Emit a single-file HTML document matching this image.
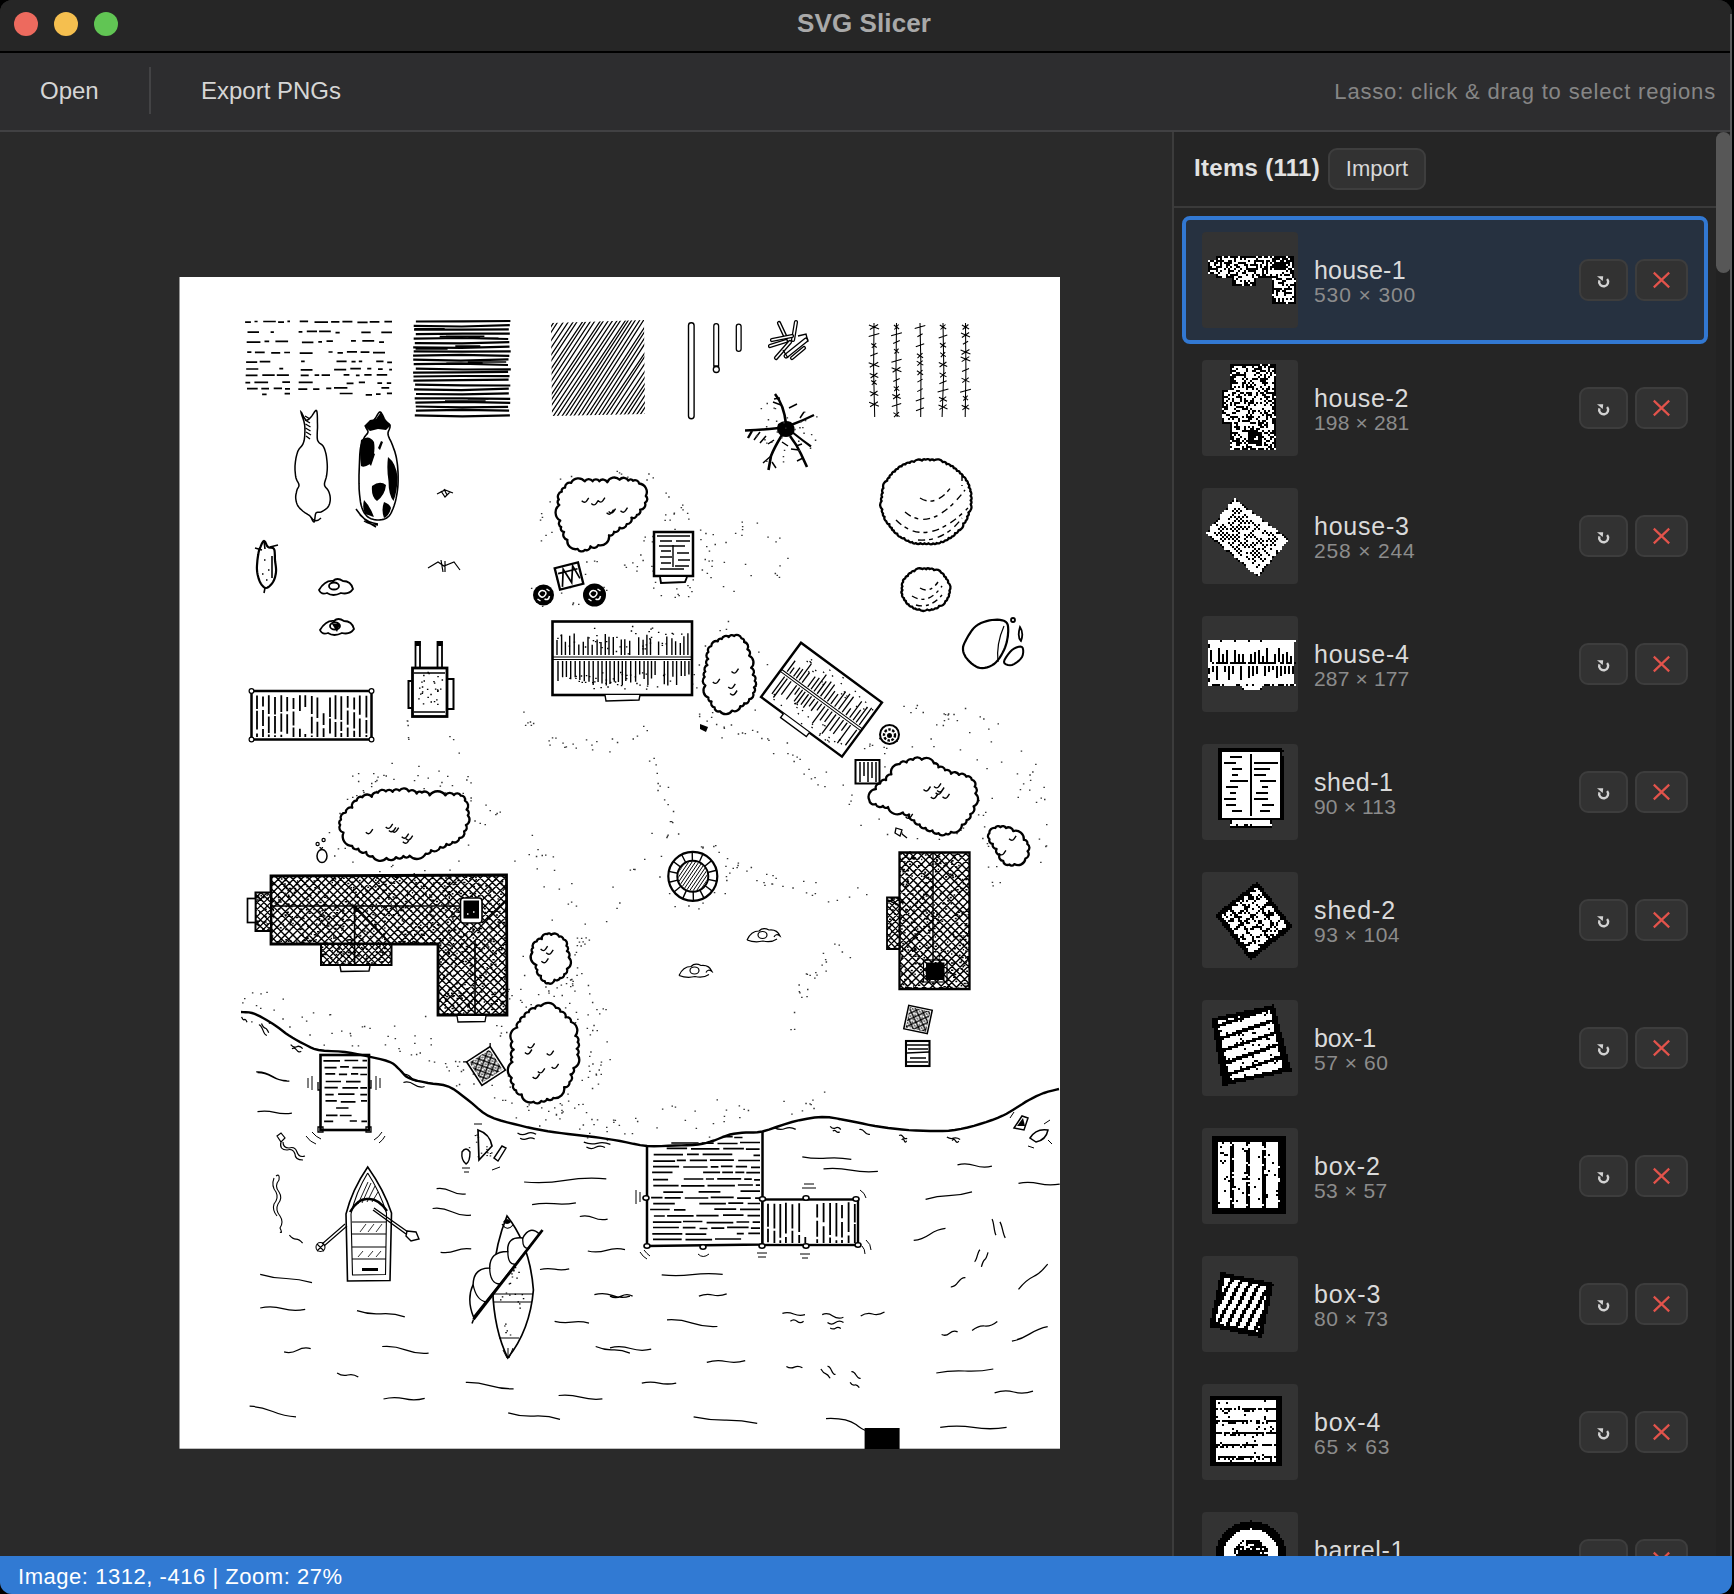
<!DOCTYPE html>
<html lang="en">
<head>
<meta charset="utf-8">
<title>SVG Slicer</title>
<style>
*{box-sizing:border-box;margin:0;padding:0}
html,body{width:1734px;height:1594px;overflow:hidden;background:#000;font-family:"Liberation Sans",sans-serif;}
#win{position:absolute;left:0;top:0;width:1732px;height:1594px;background:#2a2a2a;border-radius:12px 14px 13px 12px;overflow:hidden;}
#titlebar{position:absolute;left:0;top:0;width:100%;height:51px;background:#262626;}
#titlebar .t{position:absolute;left:-4px;right:0;top:7px;text-align:center;font-weight:bold;font-size:26px;line-height:32px;color:#a9a9a9;letter-spacing:0.1px}
.tl{position:absolute;top:12px;width:24px;height:24px;border-radius:50%}
#tbline{position:absolute;left:0;top:51px;width:100%;height:2px;background:#000}
#toolbar{position:absolute;left:0;top:53px;width:100%;height:77px;background:#2d2d2f;}
#toolbar .b{position:absolute;top:23px;font-size:24px;line-height:30px;color:#d6d6d6;white-space:nowrap}
#toolbar .sep{position:absolute;left:149px;top:14px;width:2px;height:47px;background:#434345}
#toolbar .hint{position:absolute;right:16px;top:24px;font-size:22px;line-height:30px;color:#868686;white-space:nowrap;letter-spacing:0.83px}
#tbborder{position:absolute;left:0;top:130px;width:100%;height:2px;background:#414143}
#canvas{position:absolute;left:0;top:132px;width:1172px;height:1424px;background:#2a2a2a;overflow:hidden}
#sideborder{position:absolute;left:1172px;top:132px;width:2px;height:1424px;background:#3c3c3c}
#side{position:absolute;left:1174px;top:132px;width:558px;height:1424px;background:#252525;overflow:hidden}
#side .hd{position:absolute;left:0;top:0;width:542px;height:74px;}
#side .hd .h{position:absolute;left:20px;top:21px;font-weight:bold;font-size:24px;line-height:30px;color:#e2e2e2;white-space:nowrap;letter-spacing:0.3px}
#side .hd .imp{position:absolute;left:154px;top:16px;width:98px;height:42px;border:2px solid #3e3e3e;border-radius:9px;background:#323232;color:#d8d8d8;font-size:22px;line-height:37px;text-align:center;letter-spacing:0px}
#side .hdb{position:absolute;left:0;top:74px;width:542px;height:2px;background:#3a3a3a}
#scroll{position:absolute;left:542px;top:0;width:16px;height:1424px;background:#222222;border-right:2px solid #5a5a5a}
#thumbbar{position:absolute;left:1716px;top:132px;width:15px;height:141px;border-radius:8px;background:#575757}
.it{position:absolute;left:8px;width:526px;height:128px;border:4px solid transparent;border-radius:8px}
.it.sel{border-color:#3278d2;background:#263140}
.it .th{position:absolute;left:16px;top:12px;width:96px;height:96px;background:#333333;border-radius:4px;overflow:hidden}
.it .th svg{position:absolute;left:0;top:0}
.it .nm{position:absolute;left:128px;top:34px;font-size:25px;line-height:32px;color:#dadada;white-space:nowrap}
.it .dm{position:absolute;left:128px;top:62px;font-size:21px;line-height:26px;color:#8c8c8c;white-space:nowrap;letter-spacing:0.16px}
.it .rb,.it .xb{position:absolute;top:39px;height:42px;border:2px solid #3d3d3d;border-radius:9px;background:#323232}
.it .rb{left:393px;width:49px}
.it .xb{left:449px;width:53px}
.it svg.ic{position:absolute;left:0;top:0}
#status{position:absolute;left:0;top:1556px;width:100%;height:38px;background:#317ad3;}
#status span{position:absolute;left:18px;top:5.5px;font-size:22px;line-height:30px;color:#fff;white-space:nowrap;letter-spacing:0.54px}
#wb{position:absolute;left:1730px;top:14px;width:2px;height:1542px;background:#5a5a5a}
#art{position:absolute;left:0;top:0;filter:blur(0.4px)}
</style>
</head>
<body>
<div id="win">
<div id="titlebar">
<div class="tl" style="left:14px;background:#ed6a5e"></div>
<div class="tl" style="left:54px;background:#f5bf4f"></div>
<div class="tl" style="left:94px;background:#61c554"></div>
<div class="t">SVG Slicer</div>
</div>
<div id="tbline"></div>
<div id="toolbar">
<div class="b" style="left:40px">Open</div>
<div class="sep"></div>
<div class="b" style="left:201px">Export PNGs</div>
<div class="hint">Lasso: click &amp; drag to select regions</div>
</div>
<div id="tbborder"></div>
<div id="canvas"></div>
<div id="sideborder"></div>
<div id="side">
<div class="hd"><div class="h">Items (111)</div><div class="imp">Import</div></div><div class="hdb"></div>
<div class="it sel" style="top:84px"><div class="th"><svg width="96" height="96" viewBox="0 0 96 96" shape-rendering="crispEdges"><path d="M20 25h2M26 25h2M36 25h2M54 25h2M60 25h2M66 25h2M70 25h2M84 25h2M16 27h2M20 27h12M34 27h4M40 27h2M44 27h10M56 27h14M78 27h2M86 27h2M6 29h2M12 29h2M22 29h4M30 29h2M34 29h12M48 29h4M62 29h2M68 29h2M74 29h4M82 29h2M8 31h4M16 31h2M20 31h2M30 31h6M44 31h8M54 31h6M62 31h2M66 31h2M70 31h2M88 31h2M8 33h4M14 33h4M20 33h4M28 33h4M36 33h6M46 33h2M56 33h2M60 33h4M66 33h4M84 33h2M88 33h2M10 35h4M20 35h4M26 35h2M30 35h4M38 35h6M46 35h8M56 35h2M60 35h2M66 35h2M86 35h4M16 37h6M24 37h2M28 37h4M34 37h4M40 37h4M56 37h4M66 37h2M70 37h2M84 37h2M90 37h2M8 39h6M16 39h2M20 39h6M32 39h4M38 39h4M44 39h2M54 39h6M62 39h2M66 39h18M86 39h2M6 41h2M12 41h4M18 41h8M28 41h6M36 41h4M44 41h8M54 41h6M62 41h2M66 41h14M82 41h6M16 43h8M26 43h2M36 43h8M46 43h4M52 43h2M58 43h2M64 43h4M70 43h4M76 43h2M80 43h2M88 43h2M20 45h4M32 45h4M40 45h10M52 45h4M76 45h14M32 47h2M36 47h16M70 47h4M80 47h4M90 47h2M34 49h4M40 49h2M44 49h2M48 49h4M72 49h8M84 49h10M34 51h8M46 51h2M72 51h4M82 51h10M40 53h2M48 53h2M72 53h8M82 53h2M86 53h2M72 55h14M88 55h4M80 57h2M90 57h2M72 59h2M78 59h2M84 59h8M72 61h2M76 61h6M90 61h2M70 63h4M76 63h6M84 63h8M72 65h18M74 67h2M78 67h2M82 67h2M86 67h2M90 67h2M74 69h2M78 69h2M82 69h10M84 71h2" stroke="#fff" stroke-width="2" fill="none"/><path d="M14 25h6M22 25h4M28 25h8M38 25h16M56 25h4M62 25h4M68 25h2M72 25h12M86 25h6M14 27h2M18 27h2M32 27h2M38 27h2M42 27h2M54 27h2M70 27h8M80 27h6M88 27h4M8 29h4M14 29h8M26 29h4M32 29h2M46 29h2M52 29h10M64 29h4M70 29h4M78 29h4M84 29h8M6 31h2M12 31h4M18 31h2M22 31h8M36 31h8M52 31h2M60 31h2M64 31h2M68 31h2M72 31h16M90 31h2M6 33h2M12 33h2M18 33h2M24 33h4M32 33h4M42 33h4M48 33h8M58 33h2M64 33h2M70 33h14M86 33h2M90 33h2M6 35h4M14 35h6M24 35h2M28 35h2M34 35h4M44 35h2M54 35h2M58 35h2M62 35h4M68 35h18M90 35h2M6 37h10M22 37h2M26 37h2M32 37h2M38 37h2M44 37h12M60 37h6M68 37h2M72 37h12M86 37h4M6 39h2M14 39h2M18 39h2M26 39h6M36 39h2M42 39h2M46 39h8M60 39h2M64 39h2M84 39h2M88 39h4M8 41h4M16 41h2M26 41h2M34 41h2M40 41h4M52 41h2M60 41h2M64 41h2M80 41h2M88 41h4M14 43h2M24 43h2M28 43h8M44 43h2M50 43h2M54 43h4M60 43h4M68 43h2M74 43h2M78 43h2M82 43h6M90 43h2M14 45h6M24 45h8M36 45h4M50 45h2M56 45h20M90 45h2M30 47h2M34 47h2M52 47h2M74 47h6M84 47h6M92 47h2M30 49h4M38 49h2M42 49h2M46 49h2M52 49h2M70 49h2M80 49h4M30 51h4M42 51h4M48 51h6M70 51h2M76 51h6M92 51h2M30 53h10M42 53h6M50 53h4M70 53h2M80 53h2M84 53h2M88 53h6M70 55h2M86 55h2M92 55h2M70 57h10M82 57h8M92 57h2M70 59h2M74 59h4M80 59h4M92 59h2M70 61h2M74 61h2M82 61h8M92 61h2M74 63h2M82 63h2M92 63h2M70 65h2M90 65h4M70 67h4M76 67h2M80 67h2M84 67h2M88 67h2M92 67h2M70 69h4M76 69h2M80 69h2M92 69h2M70 71h14M86 71h8" stroke="#000" stroke-width="2" fill="none"/></svg></div><div class="nm" style="letter-spacing:0.20px">house-1</div><div class="dm" style="letter-spacing:0.91px">530 × 300</div><div class="rb"><svg class="ic" width="45" height="38" viewBox="0 0 45 38"><path d="M26.1 17.9A4.5 4.5 0 1 1 18.4 19.3" fill="none" stroke="#d2d2d2" stroke-width="2.4"/><path d="M16 15.2L22.2 15.2L21.7 20Z" fill="#d2d2d2"/></svg></div><div class="xb"><svg class="ic" width="49" height="38" viewBox="0 0 49 38"><path d="M16.8 11.6L32.2 26.4M32.2 11.6L16.8 26.4" fill="none" stroke="#e2534b" stroke-width="2.2"/></svg></div></div>
<div class="it" style="top:212px"><div class="th"><svg width="96" height="96" viewBox="0 0 96 96" shape-rendering="crispEdges"><path d="M58 5h2M66 5h2M32 7h8M44 7h6M52 7h4M60 7h2M64 7h2M30 9h4M36 9h8M46 9h6M60 9h6M68 9h4M34 11h10M46 11h4M54 11h4M64 11h2M68 11h2M30 13h4M38 13h4M44 13h10M58 13h6M66 13h2M70 13h2M28 15h2M44 15h8M54 15h4M60 15h2M64 15h4M70 15h4M34 17h8M44 17h12M58 17h4M64 17h2M68 17h4M32 19h8M42 19h2M46 19h4M56 19h2M66 19h6M34 21h8M44 21h4M50 21h8M64 21h8M36 23h4M44 23h2M48 23h2M52 23h8M66 23h4M30 25h10M42 25h2M46 25h2M50 25h2M54 25h8M64 25h8M30 27h2M34 27h2M38 27h2M42 27h2M52 27h6M60 27h6M68 27h4M32 29h12M46 29h4M52 29h2M56 29h4M62 29h2M68 29h2M26 31h8M38 31h18M58 31h4M66 31h6M22 33h8M34 33h4M42 33h2M50 33h4M56 33h2M62 33h2M22 35h4M28 35h2M32 35h4M38 35h4M44 35h2M50 35h4M56 35h4M64 35h6M26 37h8M40 37h12M54 37h8M68 37h2M72 37h2M22 39h4M28 39h2M32 39h6M40 39h2M44 39h6M52 39h6M60 39h4M66 39h4M22 41h2M26 41h4M32 41h6M40 41h2M46 41h2M52 41h10M64 41h2M70 41h2M24 43h4M30 43h2M38 43h4M44 43h2M52 43h2M56 43h2M60 43h4M66 43h4M22 45h2M26 45h2M30 45h2M34 45h12M48 45h4M54 45h8M64 45h4M70 45h2M26 47h8M42 47h2M46 47h24M20 49h2M26 49h6M34 49h6M46 49h2M50 49h10M62 49h8M22 51h12M38 51h8M48 51h2M54 51h2M58 51h4M64 51h2M68 51h4M24 53h6M34 53h12M48 53h2M52 53h6M60 53h2M66 53h4M20 55h4M28 55h16M46 55h2M50 55h10M62 55h2M70 55h2M20 57h8M36 57h4M42 57h2M52 57h4M58 57h6M66 57h2M70 57h4M22 59h4M28 59h2M32 59h4M38 59h8M50 59h4M56 59h8M66 59h4M22 61h14M38 61h2M48 61h8M58 61h2M64 61h6M30 63h2M36 63h12M54 63h2M62 63h2M66 63h4M30 65h4M36 65h20M60 65h2M66 65h6M30 67h2M38 67h4M44 67h2M48 67h2M52 67h6M62 67h2M66 67h6M30 69h4M38 69h4M44 69h4M52 69h2M58 69h14M30 71h10M56 71h4M62 71h4M68 71h2M36 73h10M60 73h2M66 73h2M30 75h2M34 75h2M38 75h8M60 75h6M68 75h4M32 77h6M40 77h6M54 77h2M62 77h6M72 77h2M32 79h2M38 79h4M44 79h2M52 79h4M60 79h2M64 79h4M70 79h2M28 81h2M38 81h2M42 81h2M60 81h4M68 81h4M30 83h4M40 83h2M44 83h2M60 83h2M64 83h6M28 85h6M38 85h6M46 85h8M60 85h2M66 85h2M70 85h2M30 87h10M42 87h2M50 87h16M70 87h2M28 89h4M38 89h2M46 89h2M54 89h2M62 89h2M66 89h2M72 89h2" stroke="#fff" stroke-width="2" fill="none"/><path d="M28 5h30M60 5h6M68 5h6M28 7h4M40 7h4M50 7h2M56 7h4M62 7h2M66 7h8M28 9h2M34 9h2M44 9h2M52 9h8M66 9h2M72 9h2M28 11h6M44 11h2M50 11h4M58 11h6M66 11h2M70 11h4M28 13h2M34 13h4M42 13h2M54 13h4M64 13h2M68 13h2M72 13h2M30 15h14M52 15h2M58 15h2M62 15h2M68 15h2M28 17h6M42 17h2M56 17h2M62 17h2M66 17h2M72 17h2M28 19h4M40 19h2M44 19h2M50 19h6M58 19h8M72 19h2M28 21h6M42 21h2M48 21h2M58 21h6M72 21h2M28 23h8M40 23h4M46 23h2M50 23h2M60 23h6M70 23h4M28 25h2M40 25h2M44 25h2M48 25h2M52 25h2M62 25h2M72 25h2M28 27h2M32 27h2M36 27h2M40 27h2M44 27h8M58 27h2M66 27h2M72 27h2M28 29h4M44 29h2M50 29h2M54 29h2M60 29h2M64 29h4M70 29h4M20 31h6M34 31h4M56 31h2M62 31h4M72 31h2M20 33h2M30 33h4M38 33h4M44 33h6M54 33h2M58 33h4M64 33h10M20 35h2M26 35h2M30 35h2M36 35h2M42 35h2M46 35h4M54 35h2M60 35h4M70 35h4M20 37h6M34 37h6M52 37h2M62 37h6M70 37h2M20 39h2M26 39h2M30 39h2M38 39h2M42 39h2M50 39h2M58 39h2M64 39h2M70 39h4M20 41h2M24 41h2M30 41h2M38 41h2M42 41h4M48 41h4M62 41h2M66 41h4M72 41h2M20 43h4M28 43h2M32 43h6M42 43h2M46 43h6M54 43h2M58 43h2M64 43h2M70 43h4M20 45h2M24 45h2M28 45h2M32 45h2M46 45h2M52 45h2M62 45h2M68 45h2M72 45h2M20 47h6M34 47h8M44 47h2M70 47h4M22 49h4M32 49h2M40 49h6M48 49h2M60 49h2M70 49h4M20 51h2M34 51h4M46 51h2M50 51h4M56 51h2M62 51h2M66 51h2M72 51h2M20 53h4M30 53h4M46 53h2M50 53h2M58 53h2M62 53h4M70 53h4M24 55h4M44 55h2M48 55h2M60 55h2M64 55h6M72 55h2M28 57h8M40 57h2M44 57h8M56 57h2M64 57h2M68 57h2M20 59h2M26 59h2M30 59h2M36 59h2M46 59h4M54 59h2M64 59h2M70 59h4M20 61h2M36 61h2M40 61h8M56 61h2M60 61h4M70 61h4M20 63h10M32 63h4M48 63h6M56 63h6M64 63h2M70 63h4M28 65h2M34 65h2M56 65h4M62 65h4M72 65h2M28 67h2M32 67h6M42 67h2M46 67h2M50 67h2M58 67h4M64 67h2M72 67h2M28 69h2M34 69h4M42 69h2M48 69h4M54 69h4M72 69h2M28 71h2M40 71h16M60 71h2M66 71h2M70 71h4M28 73h8M46 73h14M62 73h4M68 73h6M28 75h2M32 75h2M36 75h2M46 75h14M66 75h2M72 75h2M28 77h4M38 77h2M46 77h8M56 77h6M68 77h4M28 79h4M34 79h4M42 79h2M46 79h6M56 79h4M62 79h2M68 79h2M72 79h2M30 81h8M40 81h2M44 81h16M64 81h4M72 81h2M28 83h2M34 83h6M42 83h2M46 83h14M62 83h2M70 83h4M34 85h4M44 85h2M54 85h6M62 85h4M68 85h2M72 85h2M28 87h2M40 87h2M44 87h6M66 87h4M72 87h2M32 89h6M40 89h6M48 89h6M56 89h6M64 89h2M68 89h4" stroke="#000" stroke-width="2" fill="none"/></svg></div><div class="nm" style="letter-spacing:0.68px">house-2</div><div class="dm" style="letter-spacing:0.16px">198 × 281</div><div class="rb"><svg class="ic" width="45" height="38" viewBox="0 0 45 38"><path d="M26.1 17.9A4.5 4.5 0 1 1 18.4 19.3" fill="none" stroke="#d2d2d2" stroke-width="2.4"/><path d="M16 15.2L22.2 15.2L21.7 20Z" fill="#d2d2d2"/></svg></div><div class="xb"><svg class="ic" width="49" height="38" viewBox="0 0 49 38"><path d="M16.8 11.6L32.2 26.4M32.2 11.6L16.8 26.4" fill="none" stroke="#e2534b" stroke-width="2.2"/></svg></div></div>
<div class="it" style="top:340px"><div class="th"><svg width="96" height="96" viewBox="0 0 96 96" shape-rendering="crispEdges"><path d="M32 11h2M32 13h2M30 15h8M26 17h14M26 19h16M26 21h6M34 21h2M38 21h6M22 23h8M32 23h2M36 23h2M40 23h10M20 25h12M34 25h2M38 25h12M18 27h12M32 27h10M44 27h10M18 29h10M30 29h2M34 29h2M38 29h2M42 29h2M46 29h12M18 31h8M28 31h6M36 31h2M40 31h20M16 33h16M34 33h2M38 33h2M42 33h2M46 33h2M50 33h10M14 35h12M28 35h2M32 35h6M40 35h2M44 35h2M48 35h2M52 35h14M10 37h4M16 37h4M22 37h6M30 37h6M38 37h14M54 37h2M58 37h8M8 39h10M20 39h2M24 39h6M32 39h2M36 39h2M40 39h2M44 39h2M48 39h6M56 39h14M8 41h8M18 41h2M22 41h2M26 41h2M30 41h2M34 41h2M38 41h2M42 41h2M46 41h6M54 41h2M58 41h16M8 43h10M20 43h10M32 43h2M36 43h14M52 43h10M64 43h12M4 45h8M14 45h2M18 45h2M22 45h2M26 45h10M38 45h10M50 45h10M62 45h2M66 45h2M70 45h4M6 47h8M16 47h2M20 47h2M24 47h2M28 47h2M32 47h2M36 47h6M44 47h2M48 47h2M52 47h14M68 47h2M72 47h8M10 49h10M22 49h2M26 49h2M30 49h2M34 49h2M38 49h6M46 49h2M50 49h2M54 49h18M74 49h8M12 51h6M20 51h2M24 51h2M28 51h2M32 51h2M36 51h6M44 51h10M56 51h2M60 51h6M68 51h2M72 51h2M76 51h8M16 53h4M22 53h10M34 53h2M38 53h6M46 53h10M58 53h2M62 53h2M66 53h2M70 53h2M74 53h12M18 55h8M28 55h2M32 55h6M40 55h2M44 55h6M52 55h2M56 55h2M60 55h10M72 55h12M20 57h8M30 57h6M38 57h2M42 57h2M46 57h2M50 57h2M54 57h6M62 57h2M66 57h2M70 57h2M74 57h8M22 59h8M32 59h2M36 59h6M44 59h2M48 59h2M52 59h10M64 59h16M22 61h10M34 61h2M38 61h14M54 61h2M58 61h2M62 61h6M70 61h10M28 63h6M36 63h2M40 63h10M52 63h2M56 63h6M64 63h10M76 63h2M30 65h6M38 65h6M46 65h2M50 65h2M54 65h2M58 65h6M66 65h8M32 67h6M40 67h10M52 67h2M56 67h2M60 67h6M68 67h6M32 69h12M46 69h6M54 69h2M58 69h12M36 71h10M48 71h2M52 71h6M60 71h2M64 71h6M38 73h14M54 73h6M62 73h6M42 75h8M52 75h16M44 77h12M58 77h6M44 79h10M56 79h6M46 81h14M48 83h12M52 85h6M56 87h2" stroke="#fff" stroke-width="2" fill="none"/><path d="M30 13h2M34 13h2M28 15h2M40 17h2M42 19h2M24 21h2M32 21h2M36 21h2M44 21h2M30 23h2M34 23h2M38 23h2M32 25h2M36 25h2M50 25h2M30 27h2M42 27h2M28 29h2M32 29h2M36 29h2M40 29h2M44 29h2M16 31h2M26 31h2M34 31h2M38 31h2M14 33h2M32 33h2M36 33h2M40 33h2M44 33h2M48 33h2M60 33h2M12 35h2M26 35h2M30 35h2M38 35h2M42 35h2M46 35h2M50 35h2M14 37h2M20 37h2M28 37h2M36 37h2M52 37h2M56 37h2M66 37h2M18 39h2M22 39h2M30 39h2M34 39h2M38 39h2M42 39h2M46 39h2M54 39h2M16 41h2M20 41h2M24 41h2M28 41h2M32 41h2M36 41h2M40 41h2M44 41h2M52 41h2M56 41h2M6 43h2M18 43h2M30 43h2M34 43h2M50 43h2M62 43h2M12 45h2M16 45h2M20 45h2M24 45h2M36 45h2M48 45h2M60 45h2M64 45h2M68 45h2M74 45h4M14 47h2M18 47h2M22 47h2M26 47h2M30 47h2M34 47h2M42 47h2M46 47h2M50 47h2M66 47h2M70 47h2M80 47h2M8 49h2M20 49h2M24 49h2M28 49h2M32 49h2M36 49h2M44 49h2M48 49h2M52 49h2M72 49h2M82 49h2M10 51h2M18 51h2M22 51h2M26 51h2M30 51h2M34 51h2M42 51h2M54 51h2M58 51h2M66 51h2M70 51h2M74 51h2M84 51h2M12 53h4M20 53h2M32 53h2M36 53h2M44 53h2M56 53h2M60 53h2M64 53h2M68 53h2M72 53h2M16 55h2M26 55h2M30 55h2M38 55h2M42 55h2M50 55h2M54 55h2M58 55h2M70 55h2M18 57h2M28 57h2M36 57h2M40 57h2M44 57h2M48 57h2M52 57h2M60 57h2M64 57h2M68 57h2M72 57h2M20 59h2M30 59h2M34 59h2M42 59h2M46 59h2M50 59h2M62 59h2M32 61h2M36 61h2M52 61h2M56 61h2M60 61h2M68 61h2M24 63h4M34 63h2M38 63h2M50 63h2M54 63h2M62 63h2M74 63h2M28 65h2M36 65h2M44 65h2M48 65h2M52 65h2M56 65h2M64 65h2M74 65h2M30 67h2M38 67h2M50 67h2M54 67h2M58 67h2M66 67h2M44 69h2M52 69h2M56 69h2M70 69h2M34 71h2M46 71h2M50 71h2M58 71h2M62 71h2M36 73h2M52 73h2M60 73h2M68 73h2M40 75h2M50 75h2M42 77h2M56 77h2M64 77h2M54 79h2M62 79h2M60 81h2M60 83h2M58 85h2M54 87h2" stroke="#000" stroke-width="2" fill="none"/></svg></div><div class="nm" style="letter-spacing:0.76px">house-3</div><div class="dm" style="letter-spacing:0.82px">258 × 244</div><div class="rb"><svg class="ic" width="45" height="38" viewBox="0 0 45 38"><path d="M26.1 17.9A4.5 4.5 0 1 1 18.4 19.3" fill="none" stroke="#d2d2d2" stroke-width="2.4"/><path d="M16 15.2L22.2 15.2L21.7 20Z" fill="#d2d2d2"/></svg></div><div class="xb"><svg class="ic" width="49" height="38" viewBox="0 0 49 38"><path d="M16.8 11.6L32.2 26.4M32.2 11.6L16.8 26.4" fill="none" stroke="#e2534b" stroke-width="2.2"/></svg></div></div>
<div class="it" style="top:468px"><div class="th"><svg width="96" height="96" viewBox="0 0 96 96" shape-rendering="crispEdges"><path d="M6 25h12M20 25h12M34 25h12M48 25h10M60 25h34M6 27h86M8 29h84M8 31h84M6 33h10M18 33h46M66 33h10M78 33h14M6 35h2M10 35h6M18 35h6M26 35h6M34 35h22M58 35h6M66 35h10M78 35h14M6 37h2M10 37h6M18 37h6M26 37h6M34 37h18M54 37h2M58 37h6M66 37h10M78 37h6M86 37h6M6 39h2M10 39h6M18 39h2M22 39h2M26 39h6M34 39h2M38 39h2M42 39h6M50 39h2M54 39h2M58 39h6M66 39h6M74 39h2M78 39h2M82 39h2M86 39h6M6 41h2M10 41h6M18 41h2M22 41h2M26 41h6M34 41h2M38 41h2M42 41h6M50 41h2M54 41h2M58 41h2M62 41h2M66 41h6M74 41h2M78 41h2M82 41h2M86 41h2M90 41h2M6 43h2M10 43h6M18 43h2M22 43h2M26 43h6M34 43h2M38 43h2M42 43h6M50 43h2M54 43h2M58 43h2M62 43h2M66 43h6M74 43h2M78 43h2M82 43h2M86 43h2M90 43h2M6 45h2M10 45h6M18 45h2M22 45h2M26 45h6M34 45h2M38 45h2M42 45h6M50 45h2M54 45h2M58 45h2M62 45h2M66 45h6M74 45h2M78 45h2M82 45h2M86 45h2M90 45h2M6 47h4M12 47h2M26 47h2M44 47h2M54 47h2M74 47h4M82 47h2M90 47h2M6 49h86M6 51h4M12 51h2M16 51h6M24 51h2M28 51h2M32 51h6M40 51h6M48 51h2M52 51h2M56 51h6M64 51h2M68 51h2M72 51h2M76 51h2M80 51h2M84 51h2M88 51h2M8 53h2M12 53h2M16 53h6M24 53h2M28 53h2M32 53h6M40 53h6M48 53h2M52 53h2M56 53h6M64 53h2M68 53h2M72 53h2M76 53h2M80 53h2M84 53h2M88 53h2M8 55h2M12 55h2M16 55h6M24 55h2M28 55h2M32 55h6M40 55h6M48 55h2M52 55h2M56 55h6M64 55h2M68 55h6M76 55h2M80 55h2M84 55h2M88 55h2M8 57h6M16 57h10M28 57h2M32 57h6M40 57h6M48 57h2M52 57h2M56 57h6M64 57h10M76 57h2M80 57h2M84 57h2M88 57h2M6 59h8M16 59h10M28 59h10M40 59h6M48 59h2M52 59h10M64 59h10M76 59h2M80 59h12M6 61h8M16 61h10M28 61h10M40 61h6M48 61h26M76 61h16M8 63h6M16 63h10M28 63h10M40 63h52M8 65h84M6 67h86M6 69h4M18 69h2M22 69h12M38 69h6M46 69h4M52 69h10M68 69h2M72 69h4M82 69h2M86 69h2M92 69h2M40 71h20M42 73h16" stroke="#fff" stroke-width="2" fill="none"/><path d="M18 25h2M32 25h2M46 25h2M58 25h2M6 29h2M6 31h2M16 33h2M64 33h2M76 33h2M8 35h2M16 35h2M24 35h2M32 35h2M56 35h2M64 35h2M76 35h2M8 37h2M16 37h2M24 37h2M32 37h2M52 37h2M56 37h2M64 37h2M76 37h2M84 37h2M8 39h2M16 39h2M20 39h2M24 39h2M32 39h2M36 39h2M40 39h2M48 39h2M52 39h2M56 39h2M64 39h2M72 39h2M76 39h2M80 39h2M84 39h2M8 41h2M16 41h2M20 41h2M24 41h2M32 41h2M36 41h2M40 41h2M48 41h2M52 41h2M56 41h2M60 41h2M64 41h2M72 41h2M76 41h2M80 41h2M84 41h2M88 41h2M8 43h2M16 43h2M20 43h2M24 43h2M32 43h2M36 43h2M40 43h2M48 43h2M52 43h2M56 43h2M60 43h2M64 43h2M72 43h2M76 43h2M80 43h2M84 43h2M88 43h2M8 45h2M16 45h2M20 45h2M24 45h2M32 45h2M36 45h2M40 45h2M48 45h2M52 45h2M56 45h2M60 45h2M64 45h2M72 45h2M76 45h2M80 45h2M84 45h2M88 45h2M10 47h2M14 47h12M28 47h16M46 47h8M56 47h18M78 47h4M84 47h6M92 47h2M10 51h2M14 51h2M22 51h2M26 51h2M30 51h2M38 51h2M46 51h2M50 51h2M54 51h2M62 51h2M66 51h2M70 51h2M74 51h2M78 51h2M82 51h2M86 51h2M90 51h2M6 53h2M10 53h2M14 53h2M22 53h2M26 53h2M30 53h2M38 53h2M46 53h2M50 53h2M54 53h2M62 53h2M66 53h2M70 53h2M74 53h2M78 53h2M82 53h2M86 53h2M90 53h2M6 55h2M10 55h2M14 55h2M22 55h2M26 55h2M30 55h2M38 55h2M46 55h2M50 55h2M54 55h2M62 55h2M66 55h2M74 55h2M78 55h2M82 55h2M86 55h2M90 55h2M6 57h2M14 57h2M26 57h2M30 57h2M38 57h2M46 57h2M50 57h2M54 57h2M62 57h2M74 57h2M78 57h2M82 57h2M86 57h2M90 57h2M14 59h2M26 59h2M38 59h2M46 59h2M50 59h2M62 59h2M74 59h2M78 59h2M14 61h2M26 61h2M38 61h2M46 61h2M74 61h2M6 63h2M14 63h2M26 63h2M38 63h2M6 65h2M10 69h8M20 69h2M34 69h4M44 69h2M50 69h2M62 69h6M70 69h2M76 69h6M84 69h2M88 69h4M40 73h2M58 73h2" stroke="#000" stroke-width="2" fill="none"/></svg></div><div class="nm" style="letter-spacing:0.76px">house-4</div><div class="dm" style="letter-spacing:0.16px">287 × 177</div><div class="rb"><svg class="ic" width="45" height="38" viewBox="0 0 45 38"><path d="M26.1 17.9A4.5 4.5 0 1 1 18.4 19.3" fill="none" stroke="#d2d2d2" stroke-width="2.4"/><path d="M16 15.2L22.2 15.2L21.7 20Z" fill="#d2d2d2"/></svg></div><div class="xb"><svg class="ic" width="49" height="38" viewBox="0 0 49 38"><path d="M16.8 11.6L32.2 26.4M32.2 11.6L16.8 26.4" fill="none" stroke="#e2534b" stroke-width="2.2"/></svg></div></div>
<div class="it" style="top:596px"><div class="th"><svg width="96" height="96" viewBox="0 0 96 96" shape-rendering="crispEdges"><path d="M20 9h58M20 11h28M50 11h28M20 13h8M40 13h8M50 13h28M20 15h28M50 15h28M20 17h28M50 17h28M20 19h2M34 19h14M50 19h2M76 19h2M20 21h28M50 21h28M20 23h28M50 23h28M20 25h10M40 25h8M50 25h2M68 25h10M20 27h28M50 27h28M20 29h28M50 29h28M20 31h10M36 31h12M50 31h2M64 31h14M20 33h28M50 33h28M20 35h28M50 35h28M20 37h8M46 37h2M50 37h8M74 37h4M20 39h28M50 39h28M20 41h28M50 41h28M20 43h4M36 43h12M50 43h10M66 43h12M20 45h28M50 45h28M20 47h28M50 47h28M20 49h8M34 49h14M50 49h4M66 49h12M20 51h28M50 51h28M20 53h28M50 53h28M20 55h2M34 55h14M50 55h2M66 55h12M20 57h28M50 57h28M20 59h28M50 59h28M20 61h4M34 61h14M50 61h10M72 61h6M20 63h28M50 63h28M20 65h28M50 65h28M20 67h10M40 67h8M50 67h8M68 67h10M20 69h28M50 69h28M20 71h28M50 71h28M20 73h58M30 77h38M30 79h38M28 81h6M36 81h6M46 81h2M50 81h20" stroke="#fff" stroke-width="2" fill="none"/><path d="M16 5h64M16 7h66M16 9h4M78 9h2M16 11h4M48 11h2M78 11h2M16 13h4M28 13h12M48 13h2M78 13h4M16 15h4M48 15h2M78 15h4M16 17h4M48 17h2M78 17h4M16 19h4M22 19h12M48 19h2M52 19h24M78 19h4M16 21h4M48 21h2M78 21h4M16 23h4M48 23h2M78 23h4M16 25h4M30 25h10M48 25h2M52 25h16M78 25h4M16 27h4M48 27h2M78 27h4M16 29h4M48 29h2M78 29h4M16 31h4M30 31h6M48 31h2M52 31h12M78 31h4M16 33h4M48 33h2M78 33h4M16 35h4M48 35h2M78 35h4M16 37h4M28 37h18M48 37h2M58 37h16M78 37h4M16 39h4M48 39h2M78 39h4M16 41h4M48 41h2M78 41h4M16 43h4M24 43h12M48 43h2M60 43h6M78 43h4M16 45h4M48 45h2M78 45h4M16 47h4M48 47h2M78 47h4M16 49h4M28 49h6M48 49h2M54 49h12M78 49h4M16 51h4M48 51h2M78 51h4M16 53h4M48 53h2M78 53h4M16 55h4M22 55h12M48 55h2M52 55h14M78 55h4M16 57h4M48 57h2M78 57h4M16 59h4M48 59h2M78 59h4M16 61h4M24 61h10M48 61h2M60 61h12M78 61h4M16 63h4M48 63h2M78 63h4M16 65h4M48 65h2M78 65h4M16 67h4M30 67h10M48 67h2M58 67h10M78 67h4M16 69h4M48 69h2M78 69h4M16 71h4M48 71h2M78 71h4M16 73h4M78 73h4M16 75h66M28 77h2M68 77h2M28 79h2M68 79h2M34 81h2M42 81h4M48 81h2M28 83h42" stroke="#000" stroke-width="2" fill="none"/></svg></div><div class="nm" style="letter-spacing:0.50px">shed-1</div><div class="dm" style="letter-spacing:0.16px">90 × 113</div><div class="rb"><svg class="ic" width="45" height="38" viewBox="0 0 45 38"><path d="M26.1 17.9A4.5 4.5 0 1 1 18.4 19.3" fill="none" stroke="#d2d2d2" stroke-width="2.4"/><path d="M16 15.2L22.2 15.2L21.7 20Z" fill="#d2d2d2"/></svg></div><div class="xb"><svg class="ic" width="49" height="38" viewBox="0 0 49 38"><path d="M16.8 11.6L32.2 26.4M32.2 11.6L16.8 26.4" fill="none" stroke="#e2534b" stroke-width="2.2"/></svg></div></div>
<div class="it" style="top:724px"><div class="th"><svg width="96" height="96" viewBox="0 0 96 96" shape-rendering="crispEdges"><path d="M52 17h4M54 19h4M48 21h12M50 23h6M58 23h2M42 25h4M52 25h2M56 25h2M60 25h2M42 27h4M52 27h2M58 27h6M38 29h2M42 29h2M46 29h6M54 29h12M34 31h4M40 31h10M52 31h12M36 33h4M44 33h2M48 33h6M56 33h6M30 35h12M48 35h8M58 35h2M64 35h6M30 37h12M46 37h4M52 37h6M62 37h10M26 39h2M32 39h6M42 39h2M46 39h10M58 39h2M62 39h4M68 39h4M24 41h6M34 41h2M40 41h2M44 41h2M48 41h6M56 41h4M64 41h2M72 41h2M20 43h2M24 43h4M30 43h2M36 43h12M54 43h8M72 43h4M20 45h4M26 45h6M40 45h8M52 45h2M56 45h8M68 45h10M22 47h6M32 47h4M38 47h6M48 47h2M52 47h10M64 47h2M68 47h10M24 49h2M32 49h4M40 49h2M46 49h6M54 49h2M60 49h8M70 49h6M78 49h4M26 51h12M42 51h2M48 51h8M60 51h8M72 51h2M76 51h6M28 53h8M42 53h12M56 53h4M62 53h6M72 53h2M76 53h8M28 55h6M38 55h4M44 55h6M60 55h8M70 55h2M74 55h10M30 57h2M36 57h6M46 57h2M52 57h6M60 57h4M68 57h6M76 57h4M32 59h12M46 59h14M66 59h2M70 59h2M74 59h2M32 61h12M48 61h14M64 61h12M36 63h4M42 63h6M50 63h8M60 63h2M66 63h2M72 63h2M36 65h2M42 65h8M52 65h2M58 65h6M68 65h2M38 67h2M44 67h6M52 67h14M38 69h12M54 69h2M58 69h6M42 71h4M50 71h2M54 71h8M48 73h8M44 75h14M46 77h10M46 79h6" stroke="#fff" stroke-width="2" fill="none"/><path d="M54 11h2M50 13h8M48 15h12M46 17h6M56 17h6M44 19h10M58 19h4M40 21h8M60 21h4M38 23h12M56 23h2M60 23h6M36 25h6M46 25h6M54 25h2M58 25h2M62 25h6M34 27h8M46 27h6M54 27h4M64 27h6M30 29h8M40 29h2M44 29h2M52 29h2M66 29h4M28 31h6M38 31h2M50 31h2M64 31h8M26 33h10M40 33h4M46 33h2M54 33h2M62 33h12M22 35h8M42 35h6M56 35h2M60 35h4M70 35h6M20 37h10M42 37h4M50 37h2M58 37h4M72 37h4M18 39h8M28 39h4M38 39h4M44 39h2M56 39h2M60 39h2M66 39h2M72 39h6M16 41h8M30 41h4M36 41h4M42 41h2M46 41h2M54 41h2M60 41h4M66 41h6M74 41h6M14 43h6M22 43h2M28 43h2M32 43h4M48 43h6M62 43h10M76 43h6M14 45h6M24 45h2M32 45h8M48 45h4M54 45h2M64 45h4M78 45h6M16 47h6M28 47h4M36 47h2M44 47h4M50 47h2M62 47h2M66 47h2M78 47h6M18 49h6M26 49h6M36 49h4M42 49h4M52 49h2M56 49h4M68 49h2M76 49h2M82 49h4M20 51h6M38 51h4M44 51h4M56 51h4M68 51h4M74 51h2M82 51h6M20 53h8M36 53h6M54 53h2M60 53h2M68 53h4M74 53h2M84 53h6M22 55h6M34 55h4M42 55h2M50 55h10M68 55h2M72 55h2M84 55h6M24 57h6M32 57h4M42 57h4M48 57h4M58 57h2M64 57h4M74 57h2M80 57h8M26 59h6M44 59h2M60 59h6M68 59h2M72 59h2M76 59h10M28 61h4M44 61h4M62 61h2M76 61h8M28 63h8M40 63h2M48 63h2M58 63h2M62 63h4M68 63h4M74 63h8M30 65h6M38 65h4M50 65h2M54 65h4M64 65h4M70 65h8M32 67h6M40 67h4M50 67h2M66 67h10M34 69h4M50 69h4M56 69h2M64 69h10M34 71h8M46 71h4M52 71h2M62 71h8M36 73h12M56 73h12M38 75h6M58 75h8M40 77h6M56 77h8M42 79h4M52 79h8M42 81h16M44 83h12M46 85h8M48 87h2" stroke="#000" stroke-width="2" fill="none"/></svg></div><div class="nm" style="letter-spacing:0.95px">shed-2</div><div class="dm" style="letter-spacing:0.45px">93 × 104</div><div class="rb"><svg class="ic" width="45" height="38" viewBox="0 0 45 38"><path d="M26.1 17.9A4.5 4.5 0 1 1 18.4 19.3" fill="none" stroke="#d2d2d2" stroke-width="2.4"/><path d="M16 15.2L22.2 15.2L21.7 20Z" fill="#d2d2d2"/></svg></div><div class="xb"><svg class="ic" width="49" height="38" viewBox="0 0 49 38"><path d="M16.8 11.6L32.2 26.4M32.2 11.6L16.8 26.4" fill="none" stroke="#e2534b" stroke-width="2.2"/></svg></div></div>
<div class="it" style="top:852px"><div class="th"><svg width="96" height="96" viewBox="0 0 96 96" shape-rendering="crispEdges"><path d="M66 11h2M60 13h4M66 13h2M54 15h8M64 15h6M36 17h2M48 17h22M26 19h6M42 19h28M16 21h8M36 21h2M40 21h24M16 23h4M30 23h28M68 23h2M24 25h28M64 25h8M18 27h28M58 27h14M16 29h24M52 29h14M68 29h4M20 31h14M46 31h26M18 33h6M26 33h4M40 33h10M54 33h14M18 35h6M34 35h2M38 35h2M42 35h20M72 35h2M28 37h28M66 37h8M22 39h16M40 39h10M60 39h4M68 39h6M20 41h20M42 41h2M54 41h20M20 43h14M36 43h2M48 43h28M20 45h12M42 45h8M52 45h4M58 45h8M68 45h2M20 47h6M36 47h28M74 47h2M30 49h12M44 49h14M68 49h8M24 51h28M64 51h12M22 53h24M58 53h20M22 55h18M52 55h16M70 55h8M24 57h10M46 57h4M52 57h20M24 59h2M28 59h2M40 59h28M34 61h18M56 61h6M72 61h2M76 61h4M30 63h10M42 63h8M52 63h4M66 63h6M74 63h6M24 65h26M60 65h20M26 67h12M40 67h4M54 67h26M26 69h12M48 69h6M56 69h20M26 71h6M42 71h28M36 73h24M30 75h12M44 75h8M28 77h14M30 79h2" stroke="#fff" stroke-width="2" fill="none"/><path d="M70 5h2M62 7h10M52 9h22M42 11h24M68 11h6M34 13h26M64 13h2M68 13h6M24 15h30M62 15h2M70 15h4M16 17h20M38 17h10M70 17h6M10 19h16M32 19h10M70 19h6M10 21h6M24 21h12M38 21h2M64 21h12M10 23h6M20 23h10M58 23h10M70 23h6M10 25h14M52 25h12M72 25h6M10 27h8M46 27h12M72 27h6M12 29h4M40 29h12M66 29h2M72 29h6M12 31h8M34 31h12M72 31h6M12 33h6M24 33h2M30 33h10M50 33h4M68 33h12M12 35h6M24 35h10M36 35h2M40 35h2M62 35h10M74 35h6M12 37h16M56 37h10M74 37h6M12 39h10M38 39h2M50 39h10M64 39h4M74 39h8M14 41h6M40 41h2M44 41h10M74 41h8M14 43h6M34 43h2M38 43h10M76 43h6M14 45h6M32 45h10M50 45h2M56 45h2M66 45h2M70 45h12M14 47h6M26 47h10M64 47h10M76 47h8M14 49h16M42 49h2M58 49h10M76 49h8M14 51h10M52 51h12M76 51h8M16 53h6M46 53h12M78 53h6M16 55h6M40 55h12M68 55h2M78 55h8M16 57h8M34 57h12M50 57h2M72 57h14M16 59h8M26 59h2M30 59h10M68 59h18M16 61h18M52 61h4M62 61h10M74 61h2M80 61h6M16 63h14M40 63h2M50 63h2M56 63h10M72 63h2M80 63h8M18 65h6M50 65h10M80 65h8M18 67h8M38 67h2M44 67h10M80 67h8M18 69h8M38 69h10M54 69h2M76 69h14M18 71h8M32 71h10M70 71h20M18 73h18M60 73h20M18 75h12M42 75h2M52 75h20M20 77h8M42 77h20M20 79h10M32 79h20M20 81h24M20 83h14M20 85h6" stroke="#000" stroke-width="2" fill="none"/></svg></div><div class="nm" style="letter-spacing:-0.10px">box-1</div><div class="dm" style="letter-spacing:0.53px">57 × 60</div><div class="rb"><svg class="ic" width="45" height="38" viewBox="0 0 45 38"><path d="M26.1 17.9A4.5 4.5 0 1 1 18.4 19.3" fill="none" stroke="#d2d2d2" stroke-width="2.4"/><path d="M16 15.2L22.2 15.2L21.7 20Z" fill="#d2d2d2"/></svg></div><div class="xb"><svg class="ic" width="49" height="38" viewBox="0 0 49 38"><path d="M16.8 11.6L32.2 26.4M32.2 11.6L16.8 26.4" fill="none" stroke="#e2534b" stroke-width="2.2"/></svg></div></div>
<div class="it" style="top:980px"><div class="th"><svg width="96" height="96" viewBox="0 0 96 96" shape-rendering="crispEdges"><path d="M16 15h4M22 15h6M30 15h14M48 15h12M64 15h12M16 17h14M32 17h12M46 17h14M64 17h12M16 19h2M20 19h8M32 19h30M64 19h12M16 21h12M32 21h8M42 21h4M48 21h28M16 23h12M32 23h10M48 23h12M64 23h12M16 25h2M22 25h6M32 25h12M48 25h12M64 25h12M16 27h6M26 27h2M32 27h12M48 27h12M64 27h2M68 27h8M16 29h12M32 29h12M48 29h8M58 29h2M62 29h14M16 31h12M30 31h14M48 31h12M64 31h12M16 33h2M20 33h2M24 33h4M32 33h12M48 33h12M64 33h12M16 35h4M22 35h6M32 35h14M48 35h12M64 35h6M72 35h4M16 37h12M32 37h12M46 37h16M64 37h12M16 39h12M32 39h12M48 39h12M64 39h14M16 41h12M32 41h12M48 41h12M64 41h12M16 43h12M32 43h12M48 43h12M62 43h4M68 43h8M16 45h12M30 45h12M48 45h12M62 45h14M16 47h12M32 47h14M48 47h12M66 47h6M74 47h2M16 49h8M26 49h2M30 49h14M46 49h14M64 49h12M16 51h6M24 51h4M32 51h8M48 51h8M58 51h2M64 51h14M16 53h10M32 53h28M64 53h14M16 55h12M32 55h12M48 55h12M64 55h12M16 57h12M32 57h12M46 57h14M64 57h12M16 59h12M34 59h10M48 59h4M54 59h6M64 59h12M16 61h12M30 61h6M38 61h6M48 61h12M64 61h12M16 63h6M24 63h4M32 63h12M48 63h12M64 63h10M16 65h12M32 65h8M42 65h2M48 65h12M64 65h12M16 67h12M32 67h12M46 67h14M66 67h8M16 69h12M32 69h12M48 69h12M66 69h10M16 71h14M32 71h12M48 71h8M58 71h2M64 71h12M16 73h12M32 73h2M36 73h8M48 73h12M64 73h14M18 75h10M30 75h14M48 75h12M64 75h12M16 77h12M32 77h14M48 77h14M64 77h12M16 79h12M32 79h12M48 79h12M64 79h12" stroke="#fff" stroke-width="2" fill="none"/><path d="M10 9h74M10 11h74M10 13h74M10 15h6M20 15h2M28 15h2M44 15h4M60 15h4M76 15h8M10 17h6M30 17h2M44 17h2M60 17h4M76 17h8M10 19h6M18 19h2M28 19h4M62 19h2M76 19h8M10 21h6M28 21h4M40 21h2M46 21h2M76 21h8M10 23h6M28 23h4M42 23h6M60 23h4M76 23h8M10 25h6M18 25h4M28 25h4M44 25h4M60 25h4M76 25h8M10 27h6M22 27h4M28 27h4M44 27h4M60 27h4M66 27h2M76 27h8M10 29h6M28 29h4M44 29h4M56 29h2M60 29h2M76 29h8M10 31h6M28 31h2M44 31h4M60 31h4M76 31h8M10 33h6M18 33h2M22 33h2M28 33h4M44 33h4M60 33h4M76 33h8M10 35h6M20 35h2M28 35h4M46 35h2M60 35h4M70 35h2M76 35h8M10 37h6M28 37h4M44 37h2M62 37h2M76 37h8M10 39h6M28 39h4M44 39h4M60 39h4M78 39h6M10 41h6M28 41h4M44 41h4M60 41h4M76 41h8M10 43h6M28 43h4M44 43h4M60 43h2M66 43h2M76 43h8M10 45h6M28 45h2M42 45h6M60 45h2M76 45h8M10 47h6M28 47h4M46 47h2M60 47h6M72 47h2M76 47h8M10 49h6M24 49h2M28 49h2M44 49h2M60 49h4M76 49h8M10 51h6M22 51h2M28 51h4M40 51h8M56 51h2M60 51h4M78 51h6M10 53h6M26 53h6M60 53h4M78 53h6M10 55h6M28 55h4M44 55h4M60 55h4M76 55h8M10 57h6M28 57h4M44 57h2M60 57h4M76 57h8M10 59h6M28 59h6M44 59h4M52 59h2M60 59h4M76 59h8M10 61h6M28 61h2M36 61h2M44 61h4M60 61h4M76 61h8M10 63h6M22 63h2M28 63h4M44 63h4M60 63h4M74 63h10M10 65h6M28 65h4M40 65h2M44 65h4M60 65h4M76 65h8M10 67h6M28 67h4M44 67h2M60 67h6M74 67h10M10 69h6M28 69h4M44 69h4M60 69h6M76 69h8M10 71h6M30 71h2M44 71h4M56 71h2M60 71h4M76 71h8M10 73h6M28 73h4M34 73h2M44 73h4M60 73h4M78 73h6M10 75h8M28 75h2M44 75h4M60 75h4M76 75h8M10 77h6M28 77h4M46 77h2M62 77h2M76 77h8M10 79h6M28 79h4M44 79h4M60 79h4M76 79h8M10 81h74M10 83h74M10 85h74" stroke="#000" stroke-width="2" fill="none"/></svg></div><div class="nm" style="letter-spacing:0.85px">box-2</div><div class="dm" style="letter-spacing:0.44px">53 × 57</div><div class="rb"><svg class="ic" width="45" height="38" viewBox="0 0 45 38"><path d="M26.1 17.9A4.5 4.5 0 1 1 18.4 19.3" fill="none" stroke="#d2d2d2" stroke-width="2.4"/><path d="M16 15.2L22.2 15.2L21.7 20Z" fill="#d2d2d2"/></svg></div><div class="xb"><svg class="ic" width="49" height="38" viewBox="0 0 49 38"><path d="M16.8 11.6L32.2 26.4M32.2 11.6L16.8 26.4" fill="none" stroke="#e2534b" stroke-width="2.2"/></svg></div></div>
<div class="it" style="top:1108px"><div class="th"><svg width="96" height="96" viewBox="0 0 96 96" shape-rendering="crispEdges"><path d="M22 23h6M22 25h6M32 25h6M22 27h4M30 27h6M40 27h6M22 29h4M28 29h8M38 29h8M50 29h6M20 31h4M28 31h6M38 31h6M48 31h6M58 31h6M20 33h2M26 33h6M36 33h6M46 33h6M56 33h8M20 35h2M26 35h6M36 35h6M46 35h6M56 35h6M24 37h6M34 37h6M44 37h6M54 37h6M24 39h6M34 39h6M44 39h6M54 39h6M22 41h6M32 41h6M42 41h6M52 41h6M62 41h2M22 43h6M32 43h6M42 43h6M52 43h6M62 43h2M20 45h6M30 45h6M40 45h6M50 45h6M60 45h2M20 47h6M30 47h6M40 47h6M50 47h6M60 47h2M18 49h6M28 49h6M38 49h6M48 49h6M58 49h4M16 51h8M26 51h8M36 51h8M48 51h6M58 51h4M16 53h6M26 53h6M36 53h6M46 53h6M56 53h6M16 55h4M24 55h6M34 55h6M44 55h6M54 55h6M16 57h4M24 57h6M34 57h6M44 57h6M54 57h6M14 59h4M22 59h6M32 59h6M42 59h6M52 59h6M14 61h4M22 61h6M32 61h6M42 61h6M52 61h6M14 63h2M20 63h6M30 63h6M40 63h6M50 63h6M14 65h2M20 65h6M30 65h6M40 65h6M50 65h6M18 67h6M28 67h6M38 67h6M48 67h6M22 69h2M28 69h6M38 69h6M48 69h6M36 71h6M46 71h6M56 71h2M46 73h6M54 75h2" stroke="#fff" stroke-width="2" fill="none"/><path d="M18 17h6M18 19h14M18 21h24M18 23h4M28 23h24M16 25h6M28 25h4M38 25h24M16 27h6M26 27h4M36 27h4M46 27h24M16 29h6M26 29h2M36 29h2M46 29h4M56 29h16M16 31h4M24 31h4M34 31h4M44 31h4M54 31h4M64 31h6M16 33h4M22 33h4M32 33h4M42 33h4M52 33h4M64 33h6M14 35h6M22 35h4M32 35h4M42 35h4M52 35h4M62 35h8M14 37h10M30 37h4M40 37h4M50 37h4M60 37h10M14 39h10M30 39h4M40 39h4M50 39h4M60 39h10M14 41h8M28 41h4M38 41h4M48 41h4M58 41h4M64 41h4M14 43h8M28 43h4M38 43h4M48 43h4M58 43h4M64 43h4M12 45h8M26 45h4M36 45h4M46 45h4M56 45h4M62 45h6M12 47h8M26 47h4M36 47h4M46 47h4M56 47h4M62 47h6M12 49h6M24 49h4M34 49h4M44 49h4M54 49h4M62 49h6M12 51h4M24 51h2M34 51h2M44 51h4M54 51h4M62 51h4M10 53h6M22 53h4M32 53h4M42 53h4M52 53h4M62 53h4M10 55h6M20 55h4M30 55h4M40 55h4M50 55h4M60 55h6M10 57h6M20 57h4M30 57h4M40 57h4M50 57h4M60 57h6M10 59h4M18 59h4M28 59h4M38 59h4M48 59h4M58 59h6M10 61h4M18 61h4M28 61h4M38 61h4M48 61h4M58 61h6M8 63h6M16 63h4M26 63h4M36 63h4M46 63h4M56 63h8M8 65h6M16 65h4M26 65h4M36 65h4M46 65h4M56 65h8M8 67h10M24 67h4M34 67h4M44 67h4M54 67h10M8 69h14M24 69h4M34 69h4M44 69h4M54 69h8M8 71h28M42 71h4M52 71h4M58 71h4M18 73h28M52 73h10M28 75h26M56 75h6M36 77h26M46 79h14M56 81h4" stroke="#000" stroke-width="2" fill="none"/></svg></div><div class="nm" style="letter-spacing:0.95px">box-3</div><div class="dm" style="letter-spacing:0.53px">80 × 73</div><div class="rb"><svg class="ic" width="45" height="38" viewBox="0 0 45 38"><path d="M26.1 17.9A4.5 4.5 0 1 1 18.4 19.3" fill="none" stroke="#d2d2d2" stroke-width="2.4"/><path d="M16 15.2L22.2 15.2L21.7 20Z" fill="#d2d2d2"/></svg></div><div class="xb"><svg class="ic" width="49" height="38" viewBox="0 0 49 38"><path d="M16.8 11.6L32.2 26.4M32.2 11.6L16.8 26.4" fill="none" stroke="#e2534b" stroke-width="2.2"/></svg></div></div>
<div class="it" style="top:1236px"><div class="th"><svg width="96" height="96" viewBox="0 0 96 96" shape-rendering="crispEdges"><path d="M14 17h48M64 17h10M14 19h2M18 19h6M26 19h48M14 21h60M14 23h22M38 23h36M16 25h2M20 25h2M30 25h2M34 25h2M38 25h2M54 25h2M60 25h2M14 27h6M22 27h4M28 27h14M48 27h2M52 27h12M66 27h8M14 29h8M26 29h48M14 31h28M44 31h30M16 33h10M28 33h34M64 33h10M14 35h48M64 35h10M18 37h2M46 37h2M50 37h4M58 37h6M16 39h10M34 39h6M42 39h2M46 39h8M58 39h2M62 39h2M66 39h8M14 41h6M22 41h52M14 43h42M58 43h10M70 43h4M14 45h16M32 45h22M56 45h6M64 45h6M72 45h2M14 47h20M36 47h32M70 47h4M20 49h2M28 49h2M62 49h2M14 51h8M24 51h4M34 51h2M38 51h4M44 51h10M56 51h4M62 51h12M14 53h36M52 53h22M14 55h60M14 57h38M54 57h20M14 59h4M20 59h24M46 59h28M18 61h2M38 61h2M56 61h4M70 61h2M16 63h2M22 63h2M26 63h4M32 63h6M40 63h2M44 63h6M52 63h22M14 65h60M14 67h60M14 69h38M54 69h20M14 71h46M62 71h12M14 73h2M34 73h2M52 73h2M58 73h4M70 73h2M14 75h2M18 75h4M24 75h2M28 75h2M32 75h2M42 75h6M50 75h6M58 75h2M62 75h6M70 75h4M14 77h14M30 77h22M54 77h14M70 77h4" stroke="#fff" stroke-width="2" fill="none"/><path d="M8 13h72M8 15h72M8 17h6M62 17h2M74 17h6M8 19h6M16 19h2M24 19h2M74 19h6M8 21h6M74 21h6M8 23h6M36 23h2M74 23h6M8 25h8M18 25h2M22 25h8M32 25h2M36 25h2M40 25h14M56 25h4M62 25h18M8 27h6M20 27h2M26 27h2M42 27h6M50 27h2M64 27h2M74 27h6M8 29h6M22 29h4M74 29h6M8 31h6M42 31h2M74 31h6M8 33h8M26 33h2M62 33h2M74 33h6M8 35h6M62 35h2M74 35h6M8 37h10M20 37h26M48 37h2M54 37h4M64 37h16M8 39h8M26 39h8M40 39h2M44 39h2M54 39h4M60 39h2M64 39h2M74 39h6M8 41h6M20 41h2M74 41h6M8 43h6M56 43h2M68 43h2M74 43h6M8 45h6M30 45h2M54 45h2M62 45h2M70 45h2M74 45h6M8 47h6M34 47h2M68 47h2M74 47h6M8 49h12M22 49h6M30 49h32M64 49h16M8 51h6M22 51h2M28 51h6M36 51h2M42 51h2M54 51h2M60 51h2M74 51h6M8 53h6M50 53h2M74 53h6M8 55h6M74 55h6M8 57h6M52 57h2M74 57h6M8 59h6M18 59h2M44 59h2M74 59h6M8 61h10M20 61h18M40 61h16M60 61h10M72 61h8M8 63h8M18 63h4M24 63h2M30 63h2M38 63h2M42 63h2M50 63h2M74 63h6M8 65h6M74 65h6M8 67h6M74 67h6M8 69h6M52 69h2M74 69h6M8 71h6M60 71h2M74 71h6M8 73h6M16 73h18M36 73h16M54 73h4M62 73h8M72 73h8M8 75h6M16 75h2M22 75h2M26 75h2M30 75h2M34 75h8M48 75h2M56 75h2M60 75h2M68 75h2M74 75h6M8 77h6M28 77h2M52 77h2M68 77h2M74 77h6M8 79h72M8 81h72" stroke="#000" stroke-width="2" fill="none"/></svg></div><div class="nm" style="letter-spacing:0.95px">box-4</div><div class="dm" style="letter-spacing:0.78px">65 × 63</div><div class="rb"><svg class="ic" width="45" height="38" viewBox="0 0 45 38"><path d="M26.1 17.9A4.5 4.5 0 1 1 18.4 19.3" fill="none" stroke="#d2d2d2" stroke-width="2.4"/><path d="M16 15.2L22.2 15.2L21.7 20Z" fill="#d2d2d2"/></svg></div><div class="xb"><svg class="ic" width="49" height="38" viewBox="0 0 49 38"><path d="M16.8 11.6L32.2 26.4M32.2 11.6L16.8 26.4" fill="none" stroke="#e2534b" stroke-width="2.2"/></svg></div></div>
<div class="it" style="top:1364px"><div class="th"><svg width="96" height="96" viewBox="0 0 96 96" shape-rendering="crispEdges"><path d="M48 17h2M38 19h22M34 21h30M32 23h34M30 25h38M28 27h42M26 29h14M42 29h2M58 29h14M24 31h14M40 31h4M60 31h14M24 33h12M38 33h6M46 33h6M60 33h14M22 35h12M42 35h6M64 35h12M22 37h10M38 37h2M42 37h2M48 37h2M54 37h4M60 37h2M66 37h10M22 39h10M34 39h2M66 39h10M22 41h10M34 41h2M58 41h2M62 41h14M22 43h12M66 43h10M20 45h10M34 45h2M46 45h4M52 45h4M64 45h2M68 45h10M22 47h10M36 47h6M46 47h6M54 47h2M60 47h2M66 47h10M22 49h10M38 49h2M48 49h2M52 49h2M60 49h2M64 49h12M22 51h14M54 51h6M66 51h10M22 53h10M38 53h6M46 53h2M58 53h2M66 53h10M22 55h12M42 55h2M48 55h2M54 55h4M64 55h12M24 57h12M38 57h2M44 57h2M54 57h2M62 57h12M24 59h14M40 59h2M44 59h2M50 59h2M54 59h4M60 59h14M26 61h14M58 61h14M28 63h20M50 63h20M30 65h38M32 67h34M34 69h30M38 71h22M48 73h2" stroke="#fff" stroke-width="2" fill="none"/><path d="M48 9h2M38 11h22M32 13h34M30 15h38M26 17h22M50 17h22M24 19h14M60 19h14M22 21h12M64 21h12M20 23h12M66 23h12M20 25h10M68 25h10M18 27h10M70 27h10M16 29h10M40 29h2M44 29h14M72 29h10M16 31h8M38 31h2M44 31h16M74 31h8M16 33h8M36 33h2M44 33h2M52 33h8M74 33h8M14 35h8M34 35h8M48 35h16M76 35h8M14 37h8M32 37h6M40 37h2M44 37h4M50 37h4M58 37h2M62 37h4M76 37h8M14 39h8M32 39h2M36 39h30M76 39h8M14 41h8M32 41h2M36 41h22M60 41h2M76 41h8M14 43h8M34 43h32M76 43h8M12 45h8M30 45h4M36 45h10M50 45h2M56 45h8M66 45h2M78 45h8M14 47h8M32 47h4M42 47h4M52 47h2M56 47h4M62 47h4M76 47h8M14 49h8M32 49h6M40 49h8M50 49h2M54 49h6M62 49h2M76 49h8M14 51h8M36 51h18M60 51h6M76 51h8M14 53h8M32 53h6M44 53h2M48 53h10M60 53h6M76 53h8M14 55h8M34 55h8M44 55h4M50 55h4M58 55h6M76 55h8M16 57h8M36 57h2M40 57h4M46 57h8M56 57h6M74 57h8M16 59h8M38 59h2M42 59h2M46 59h4M52 59h2M58 59h2M74 59h8M16 61h10M40 61h18M72 61h10M18 63h10M48 63h2M70 63h10M20 65h10M68 65h10M20 67h12M66 67h12M22 69h12M64 69h12M24 71h14M60 71h14M26 73h22M50 73h22M30 75h38M32 77h34M38 79h22M48 81h2" stroke="#000" stroke-width="2" fill="none"/></svg></div><div class="nm" style="letter-spacing:0.60px">barrel-1</div><div class="dm" style="letter-spacing:0.16px">61 × 61</div><div class="rb"><svg class="ic" width="45" height="38" viewBox="0 0 45 38"><path d="M26.1 17.9A4.5 4.5 0 1 1 18.4 19.3" fill="none" stroke="#d2d2d2" stroke-width="2.4"/><path d="M16 15.2L22.2 15.2L21.7 20Z" fill="#d2d2d2"/></svg></div><div class="xb"><svg class="ic" width="49" height="38" viewBox="0 0 49 38"><path d="M16.8 11.6L32.2 26.4M32.2 11.6L16.8 26.4" fill="none" stroke="#e2534b" stroke-width="2.2"/></svg></div></div>
<div id="scroll"></div>
</div>
<div id="thumbbar"></div>
<svg id="art" width="1732" height="1594" viewBox="0 0 1732 1594">
<rect x="179.5" y="277" width="880.5" height="1171.7" fill="#fff"/>
<defs><pattern id="xh" width="8" height="8" patternUnits="userSpaceOnUse"><path d="M-1 -1L9 9M9 -1L-1 9M-1 7L1 9M7 -1L9 1M-1 1L1 -1M7 9L9 7" stroke="#000" stroke-width="1.45" fill="none"/><path d="M3.6 1.2h1.2M0.4 4.2h1M6.6 4h1M3.4 6.8h1.3" stroke="#000" stroke-width="1.1"/></pattern><pattern id="xh2" width="7.5" height="7.5" patternUnits="userSpaceOnUse" patternTransform="rotate(8)"><path d="M-1 -1L8.5 8.5M8.5 -1L-1 8.5" stroke="#000" stroke-width="1.4" fill="none"/><path d="M3.4 1.1h1.2M0.2 3.9h1M6.4 3.7h1M3.2 6.3h1.3" stroke="#000" stroke-width="1.1"/></pattern></defs>
<path d="M545.3 535.3h1.5M668.2 497h1.5M541.7 517.4h1.5M636.6 566.7h1.5M559.8 479.2h1.5M661.2 546.3h1.5M672 550.4h1.5M590.7 480.3h1.5M686.9 513.4h1.5M570.8 476.5h1.5M640.1 555h1.5M555.1 512.4h1.5M632.1 562.8h1.5M674.3 529.4h1.5M540.7 540.8h1.5M540.9 513.6h1.5M539.8 520.1h1.5M551.2 532.4h1.5M688.1 519.1h1.5M648.2 474h1.5M586.1 562h1.5M596.4 561.6h1.5M616.5 471.4h1.5M646.3 480h1.5M682 505.1h1.5M669.4 520.2h1.5M665.4 493.2h1.5M673.4 514h1.5M672.2 543.5h1.5M620.8 474.2h1.5M663.2 544.8h1.5M680.6 507.6h1.5M654.4 551.1h1.5M654.9 545.3h1.5M627.1 477.1h1.5M549.4 501.9h1.5M636.2 571.1h1.5M657.4 559.1h1.5M657.9 552.9h1.5M624.1 565.2h1.5M682.3 509.8h1.5M584.8 574.4h1.5M625.6 567.3h1.5M652.5 477.8h1.5M673 555.1h1.5M623.9 565.1h1.5M618.8 472.9h1.5M593.9 561.1h1.5M667.6 548h1.5M677.4 594.4h1.5M654.8 582.3h1.5M706 546.6h1.5M644.5 537.1h1.5M687.2 585.6h1.5M705.2 533.5h1.5M676.1 588.9h1.5M673.6 513.2h1.5M687.9 596.6h1.5M699.9 530.1h1.5M652.4 571.1h1.5M711.3 566.4h1.5M678.4 595.7h1.5M674.5 597.3h1.5M652.3 536.5h1.5M691.2 591.7h1.5M701.6 570h1.5M643.3 540.8h1.5M654.4 533.5h1.5M700.2 539.6h1.5M704.5 559.5h1.5M651.2 566.4h1.5M689.3 587.6h1.5M651.7 541.9h1.5M653 588.2h1.5M708.7 551.2h1.5M664.4 520.4h1.5M692.5 579.8h1.5M711.6 560.8h1.5M665 514.8h1.5M708.4 561.2h1.5M642.4 560.5h1.5M660.6 595.7h1.5M774.6 573.5h1.5M741.5 522.2h1.5M741.9 526.6h1.5M756.6 523.1h1.5M722.8 586.6h1.5M779.1 538.2h1.5M710.3 577.7h1.5M767.3 537.1h1.5M725.3 542.5h1.5M714.5 544.5h1.5M776.5 575.4h1.5M787.2 558.4h1.5M741.2 535.3h1.5M741.8 529.6h1.5M706.6 573.4h1.5M778.7 577.4h1.5M779.3 565.8h1.5M723.6 562.3h1.5M734.9 533.3h1.5M712.5 534.7h1.5M744.8 564.3h1.5M733.3 591.3h1.5M750.4 575.7h1.5M775.3 541.9h1.5M916.2 592.7h1.5M921.2 595.8h1.5M927.1 595h1.5M928.3 582.8h1.5M549.3 745.2h1.5M575.5 748.1h1.5M585.8 739.9h1.5M532.9 723.5h1.5M548.4 740.9h1.5M555.2 738.2h1.5M616.8 742.5h1.5M636.7 736.1h1.5M524.9 725.4h1.5M562.3 743.2h1.5M632.5 739h1.5M609.2 751.9h1.5M565.6 746.9h1.5M529.7 722h1.5M530.6 725.3h1.5M591.2 745.1h1.5M551.8 737.8h1.5M523.2 712.1h1.5M527.2 722.9h1.5M572.4 744.1h1.5M611.7 739h1.5M596.1 741.6h1.5M564.1 747.4h1.5M591.9 749.9h1.5M667.4 804.7h1.5M657.3 790.5h1.5M669.7 821.6h1.5M655.4 764.8h1.5M672.8 811.5h1.5M667.4 835.2h1.5M666.7 836.4h1.5M648.9 761.1h1.5M656.5 773.3h1.5M643 726.4h1.5M659.4 786.1h1.5M653.4 758.3h1.5M671 821.7h1.5M646.5 730.7h1.5M672 822.6h1.5M667.7 787.4h1.5M663.9 799.8h1.5M657.4 783.5h1.5M842.5 785.1h1.5M756.8 732h1.5M723.6 728.4h1.5M803.4 774.1h1.5M817.3 784.9h1.5M793.4 761.5h1.5M737.7 734h1.5M698.9 714.1h1.5M698.9 716.5h1.5M808.3 769.4h1.5M741.8 733h1.5M786.6 743h1.5M772.9 753.6h1.5M721.3 737.9h1.5M787.2 753.6h1.5M767 738.9h1.5M723.3 711.3h1.5M706.4 721.1h1.5M824.2 786.7h1.5M744.6 733.7h1.5M825.6 772.1h1.5M814.3 777.6h1.5M799.4 759.4h1.5M810.7 778.8h1.5M723.4 727.2h1.5M796.4 757.1h1.5M792.1 755.1h1.5M751.9 730.3h1.5M768.2 740.3h1.5M761.1 738.5h1.5M855.9 777.8h1.5M730.7 725h1.5M715.9 724.5h1.5M814.6 893.6h1.5M764.2 885.4h1.5M736.4 867.7h1.5M815.2 882.6h1.5M750.6 867.5h1.5M792.3 888h1.5M772.3 875.6h1.5M737.3 865.5h1.5M848.8 897.2h1.5M771.8 884.1h1.5M775.4 878.3h1.5M746.2 871.1h1.5M836.6 900.4h1.5M811.7 895.4h1.5M827.8 901.8h1.5M857.1 887.8h1.5M763.3 882.7h1.5M805.8 892.9h1.5M771.3 884h1.5M803 881.4h1.5M866 894.6h1.5M756.2 880.6h1.5M782.2 886.3h1.5M766 874.3h1.5M821.4 965.1h1.5M790.3 1029.7h1.5M824.9 959.6h1.5M815.1 972.6h1.5M825.4 971.2h1.5M849.6 957.7h1.5M793.8 1012.5h1.5M805.7 973.9h1.5M806.6 974.4h1.5M822.7 953.4h1.5M806.3 996.7h1.5M793.9 1029.3h1.5M807 989.5h1.5M816.3 975.2h1.5M825.6 962h1.5M798.6 991.6h1.5M834.1 944.2h1.5M838.5 945.2h1.5M841.6 952h1.5M809.4 975.4h1.5M798.4 985h1.5M814.1 978.1h1.5M799.2 992.8h1.5M801.1 997.4h1.5M1020.7 751.2h1.5M1040.5 798.1h1.5M943.4 713.8h1.5M983.1 719h1.5M1038.7 839.2h1.5M1035.1 764.3h1.5M915.5 708.3h1.5M1017.5 797.4h1.5M956.6 720.7h1.5M1044 799.5h1.5M1046 824.6h1.5M903.3 706.4h1.5M953.3 714.5h1.5M942.6 725.5h1.5M1019.7 789.6h1.5M1016.7 773.9h1.5M1043.4 787.4h1.5M944.8 714.7h1.5M943.7 720.7h1.5M964.8 708.5h1.5M969 732.6h1.5M1029 790.1h1.5M1022.9 783.8h1.5M1040.1 862.3h1.5M1045.1 846.5h1.5M1029.9 780.4h1.5M988.1 729.2h1.5M947.8 719.1h1.5M922.5 712.5h1.5M947.9 714h1.5M990.6 741.8h1.5M997.5 723.9h1.5M916.6 705.5h1.5M1035.8 802.4h1.5M936 724.8h1.5M979.5 716.9h1.5M1032.1 772h1.5M947.3 715.2h1.5M1045.8 845.8h1.5M1029.3 775h1.5M910.2 712.7h1.5M1000.9 762.2h1.5M406.6 720.8h1.5M407.4 725.5h1.5M407.8 737.7h1.5M452.9 739.7h1.5M408.1 739.4h1.5M407 721.1h1.5M449.2 736.7h1.5M458.5 753.2h1.5M543.4 886.8h1.5M567.6 904.2h1.5M580.9 938.3h1.5M541.5 855.5h1.5M545 855.2h1.5M537.3 849.7h1.5M462.5 793.3h1.5M499.5 812.2h1.5M377.3 777.2h1.5M357.9 773.6h1.5M385.5 776h1.5M584.2 944.1h1.5M417.3 775.6h1.5M451.7 785.7h1.5M558.6 889.1h1.5M576.7 938.2h1.5M514.2 861.2h1.5M427.5 778.1h1.5M391.4 763.4h1.5M552.6 856.9h1.5M531.6 835.4h1.5M418.2 766.4h1.5M357.9 781.5h1.5M413.8 780.7h1.5M441.2 782.5h1.5M535.8 856.5h1.5M536.5 868.8h1.5M374.8 781.7h1.5M496.4 813.5h1.5M467.3 776.6h1.5M352 776.2h1.5M370.9 786.6h1.5M528.5 854.7h1.5M570.9 902.2h1.5M466.1 780h1.5M495.1 814.6h1.5M576.6 945.7h1.5M553.8 870.4h1.5M582.4 941.9h1.5M470.4 798h1.5M438.3 771.2h1.5M584.5 924.2h1.5M383.2 775.3h1.5M373 773.7h1.5M571.1 883.7h1.5M439.6 786.1h1.5M440.3 792.4h1.5M588.6 940.1h1.5M489.5 810.6h1.5M470.3 782.8h1.5M447 776.4h1.5M485.3 805.1h1.5M575.7 906.2h1.5M585.4 937.9h1.5M597.7 1084.2h1.5M609.4 1059.6h1.5M537.9 994.7h1.5M599 1013.8h1.5M553.4 996.4h1.5M593.3 1025.5h1.5M600.7 1062.1h1.5M519.9 1000.4h1.5M587.7 985.5h1.5M511.3 995.7h1.5M571.9 983.8h1.5M545.2 987h1.5M508.3 989.4h1.5M600.5 1074.4h1.5M540.9 978.2h1.5M595.7 1075.2h1.5M574.2 991.2h1.5M530.4 1004.6h1.5M561.5 995.5h1.5M589 993.8h1.5M591.8 1088.5h1.5M606.4 1041.8h1.5M600.2 1065.1h1.5M507.3 991.3h1.5M508.9 998.9h1.5M500.9 1001.5h1.5M570 986.7h1.5M596.2 1009.7h1.5M520.1 989.3h1.5M572.1 985.6h1.5M589.1 1071.4h1.5M598.5 1070h1.5M592 1030.5h1.5M521.3 1002.3h1.5M505.2 995.6h1.5M566.6 977.6h1.5M596.5 1030.6h1.5M602.5 1008.8h1.5M560.6 985.1h1.5M591.9 1002.5h1.5M605.3 1009.7h1.5M591.2 1119.5h1.5M732.5 868.3h1.5M634.2 869.5h1.5M660.7 856.3h1.5M678.7 857.4h1.5M715 845.7h1.5M725.2 866.4h1.5M737.6 863.2h1.5M666.2 837.7h1.5M605.9 921.6h1.5M651.3 833.3h1.5M644 859.3h1.5M612.3 887.1h1.5M629.6 870.2h1.5M677.9 834h1.5M616.3 908.4h1.5M619.1 903h1.5M729.1 873.2h1.5M633 869.3h1.5M462.7 1070h1.5M331.3 1033.3h1.5M305.9 1021.2h1.5M636.9 1121.5h1.5M489.5 1079h1.5M534.3 1088.2h1.5M491.4 1085.4h1.5M329.1 1014.9h1.5M555.7 1115h1.5M260 1008.3h1.5M635 1118.4h1.5M606.7 1140h1.5M612.9 1120.2h1.5M515.6 1117.8h1.5M273.4 1010.1h1.5M387.4 1036.3h1.5M424.9 1016.5h1.5M473.6 1070.7h1.5M357.7 1045.8h1.5M593.3 1124.6h1.5M561.2 1110.3h1.5M561.2 1113h1.5M428.6 1060.9h1.5M448.5 1070.9h1.5M518.3 1091.2h1.5M457.1 1066.4h1.5M454.9 1061.5h1.5M433.8 1062.2h1.5M534.4 1100.8h1.5M289.2 1027h1.5M460.7 1071.5h1.5M589 1133.3h1.5M393.9 1026.2h1.5M309.3 1035h1.5M430.3 1038.7h1.5M323.5 1045.2h1.5M504.8 1100.4h1.5M446.1 1067.2h1.5M419.5 1053h1.5M430.5 1044.9h1.5M574 1108.2h1.5M414.3 1035.9h1.5M361.7 1026.8h1.5M301.5 1017.2h1.5M582.6 1125h1.5M244 998.7h1.5M398.3 1048.7h1.5M351.7 1045.9h1.5M410.7 1054.8h1.5M268.8 1023.3h1.5M251.9 992.9h1.5M586.9 1137.8h1.5M548 1111.3h1.5M458.8 1084.5h1.5M255.8 1005.7h1.5M559.6 1103.7h1.5M614.6 1120.4h1.5M606.4 1131.7h1.5M582.3 1104.3h1.5M399.3 1051.3h1.5M596.8 1119.9h1.5M363.9 1026.5h1.5M579 1129.1h1.5M444.9 1063.7h1.5M548.7 1100.1h1.5M414.1 1043.3h1.5M329.8 1014.6h1.5M562.4 1111.9h1.5M631.7 1133.7h1.5M266.3 992.4h1.5M567.9 1101.1h1.5M559.2 1118.9h1.5M350.1 1035.8h1.5M538.8 1094.3h1.5M528.4 1104.9h1.5M458.8 1061.8h1.5M282.3 1019h1.5M618.6 1125.3h1.5M493.9 1097.8h1.5M251.1 1021.9h1.5M349.6 1033.5h1.5M526.8 1106.6h1.5M260.3 993.9h1.5M624.1 1133.8h1.5M585.8 1112.6h1.5M312.8 1012.9h1.5M470.9 1060.6h1.5M394.6 1038.7h1.5M282.5 999.2h1.5M613.1 1122.4h1.5M485.7 1082.5h1.5M472.6 1074.1h1.5M455.9 1085.9h1.5M341 1031.1h1.5M606 1127.3h1.5M502.1 1100.3h1.5M369.3 1028.4h1.5M473.2 1084h1.5M415.9 1054.5h1.5M242.1 1002.8h1.5M539 1126h1.5M384.7 1044.9h1.5M671.5 1106.1h1.5M674.7 1107.1h1.5M838.4 1119.5h1.5M805.3 1103.5h1.5M810.4 1104.7h1.5M812.2 1100.2h1.5M725.7 1110.2h1.5M695.6 1128.4h1.5M656.3 1127.9h1.5M747.7 1110.5h1.5M783.3 1101.3h1.5M743.4 1109.3h1.5M694.4 1111.2h1.5M739.1 1117.6h1.5M809.3 1103.8h1.5M723.4 1121.7h1.5M661.9 1109.1h1.5M738.6 1105.8h1.5M791.2 1114.1h1.5M823.9 1092.1h1.5M716.5 1099.9h1.5M801.7 1110.8h1.5M712.7 1123.7h1.5M723.7 1116.4h1.5M813.3 1108.5h1.5M708.8 1137.1h1.5M684.6 1120.4h1.5M987.8 867.2h1.5M999.5 882.7h1.5M996 866.6h1.5M982.1 838.5h1.5M986.7 843.7h1.5M992.4 885.8h1.5M991.7 882.3h1.5M987.8 846.4h1.5M879 738.5h1.5M869.3 744.1h1.5M883.6 738.9h1.5M896.4 741.3h1.5M863.9 748.6h1.5M885.1 739.2h1.5M871.8 745.4h1.5M887.8 739h1.5M869 746.2h1.5M659.2 877h1.5M726.1 880.5h1.5M688.2 906h1.5M698.2 908.8h1.5M726.8 858.7h1.5M725.7 876.7h1.5M713.1 846.5h1.5M724.5 893.6h1.5M718.4 852.4h1.5M700.8 846.9h1.5M713.8 892.7h1.5M702.2 848.1h1.5M668.9 893.6h1.5M702.3 903.2h1.5M674.4 906.7h1.5M702.4 847.1h1.5M337.7 848.8h1.5M362.6 790.7h1.5M356.1 795.6h1.5M376.2 780.5h1.5M393.2 779.4h1.5M484.5 824.7h1.5M453.3 801.7h1.5M444.5 793h1.5M372.7 795.7h1.5M346.8 799.3h1.5M328.7 832.6h1.5M334 856h1.5M376 791.3h1.5M352 797.4h1.5M372.4 793.3h1.5M442 797.8h1.5M339.3 813.5h1.5M479.5 823.3h1.5M458.2 861.1h1.5M392.1 865.4h1.5M424.1 870.6h1.5M379.1 871.7h1.5M474.3 821h1.5M371 783.5h1.5M462.6 810.7h1.5M390.8 866.7h1.5M363.2 792.5h1.5M371.5 794.3h1.5M449.3 870.2h1.5M446.6 800.3h1.5M352.2 862.1h1.5M423.4 788.7h1.5M470.3 800.9h1.5M441.3 798.2h1.5M467.8 845.2h1.5M454.8 795h1.5M413.5 873.7h1.5M344.5 848.4h1.5M500.9 1026.3h1.5M554 1107.8h1.5M575.7 1012.4h1.5M569 1003.4h1.5M587.4 1014.8h1.5M507.7 1076h1.5M577.1 1019.4h1.5M506 1032.5h1.5M509.5 1087.2h1.5M581.5 1080.4h1.5M499.7 1036h1.5M567.3 1094.2h1.5M548.3 993.1h1.5M589 1056.4h1.5M578 1104.7h1.5M590.2 1052h1.5M588.4 1066.1h1.5M500.6 1033.1h1.5M555.7 1114.5h1.5M564.9 1007.8h1.5M561.3 1105.1h1.5M545.1 1119.9h1.5M496.1 1025.7h1.5M595.5 1074.2h1.5M589.6 1034.8h1.5M525.5 1007.2h1.5M592.2 1064h1.5M587.7 1077.3h1.5M574.8 1022.7h1.5M511.2 1103.2h1.5M541 1107.9h1.5M586.6 1028.3h1.5M528.1 1110.3h1.5M886 748.3h1.5M930.4 739h1.5M850.3 801.1h1.5M860.3 825.3h1.5M884.2 766.8h1.5M960.2 830.3h1.5M911.6 746.8h1.5M909.3 851.6h1.5M877.9 760.8h1.5M901.3 833.1h1.5M884 753.6h1.5M916.7 838.6h1.5M944.9 831.9h1.5M962.7 828.2h1.5M938.6 839.3h1.5M956.3 833.6h1.5M944 831.8h1.5M878.4 819.1h1.5M983.9 826.8h1.5M959.7 749.9h1.5M978.3 800.6h1.5M982.7 815.4h1.5M869 773.3h1.5M848.6 804.4h1.5M851.2 795.2h1.5M976.5 759.9h1.5M977.9 814.9h1.5M986.3 768.6h1.5M933.2 746.6h1.5M991.5 798.3h1.5M883.4 747.3h1.5M985 812.3h1.5M886.8 834.5h1.5M719.4 630.6h1.5M766.7 664.7h1.5M754.5 710.1h1.5M725.7 629.3h1.5M688.5 685.7h1.5M693.5 674.6h1.5M698.6 665h1.5M758.1 652.2h1.5M696.1 687.9h1.5M755.3 686.2h1.5M710.9 717.3h1.5M711.9 712.7h1.5M704.7 646h1.5M691.9 684.2h1.5M765.8 692.7h1.5M727.7 621.5h1.5M569.9 980h1.5M578.7 942.2h1.5M565.8 983.6h1.5M571.1 979.5h1.5M548.1 991h1.5M576.8 967.9h1.5M522.5 956.3h1.5M556.4 987.9h1.5M523.9 975.5h1.5M575.7 952.4h1.5M572.4 981.4h1.5M551.5 920.2h1.5M576.3 975.4h1.5M581.1 973.7h1.5M574.3 954.9h1.5M580.4 946h1.5M578 604.4h1.5M603.3 587.4h1.5M572.1 604.5h1.5M540.9 602.1h1.5M600.4 597.9h1.5M540.7 597.7h1.5M595.4 602.6h1.5M546 593h1.5M606 590.3h1.5M530.9 588.4h1.5M541.9 606.3h1.5M556.6 579.3h1.5M598.6 590.1h1.5M572.7 603h1.5M569.7 587.6h1.5M560.9 593.2h1.5" fill="none" stroke="#333" stroke-width="1.3"/>
<path d="M245.1 322.2h5.8M254.5 321.5h3.1M263.2 321.5h12.6M278.1 322.2h5.9M287.4 321.4h2.6M299.7 321.4h8.4M314.5 322.2h13.5M331.1 321.9h8.3M342.4 321.7h10M357.4 322.3h10.2M369.7 321.8h9.7M384.4 321.6h7.6M247.5 332.1h11.5M270.6 332.1h3.3M298.6 331.8h3.8M306.8 331.4h10.2M319.1 331.4h11.7M335.5 332.6h4.2M361.3 332.3h9.4M381.3 332.3h10.7M246.7 342.1h13.7M264.5 341.3h4.7M275.4 341.4h12.7M301.9 342.3h11.5M318.3 341.8h3.7M326.5 341.1h6.4M351 340.9h4.9M362.3 340.9h11.9M379.1 342.2h4.9M247.2 352.2h4.2M254.9 352.4h9.8M271.2 352.8h9M284.2 352.5h5.8M299.7 353.2h12.9M328.5 352h4.1M337.5 352.9h5.4M346.9 351.8h10.1M360.6 352.2h8.8M373 352.7h12M246.1 362.1h11.1M259.7 361.6h10.6M301.1 361.4h3.6M336.5 361.3h10.1M351.5 361.6h4.1M358.8 361.4h3.4M376.2 361.4h7.3M387.2 362.3h4.8M246.2 369h12.1M279.3 368.7h3.9M300.7 369.9h11.8M334.1 369.6h12.1M350.3 368.7h10.6M367.2 368.7h4.1M378 369.2h4.7M389.2 369.6h2.8M245.7 375.4h11.8M262.3 375.1h12.4M276.8 375.2h12.1M300.7 375.3h8M314.6 375.2h4.6M321.6 375.2h8.4M343.6 374.9h5.8M355.9 375.3h3.7M364.3 374.9h7.3M376.7 374.8h10.5M245.4 382.7h4.8M254.4 382.4h13.7M282.3 382.2h7.7M298.7 382.4h14M346.6 383.3h6.9M358.8 382.3h6.2M377.4 383.2h4.7M386.8 383.2h4.4M247 388.7h10.7M261.3 388.7h7.7M273.7 388.3h8.3M285 388.9h5M298.3 389.2h9M313.1 389.2h6.3M326.2 388.3h5.1M334 387.9h13.4M381.4 387.8h7.8M262.1 394.3h4.5M284.6 393.6h5.4M339.7 393.5h12.9M365.7 394.8h6.3M376 394.2h4.6M386.9 393.3h5.1" fill="none" stroke="#000" stroke-width="1.7"/>
<path d="M415.9 321.5L463.1 321.3L510.4 321M413.7 325.8L461.7 326.5L509.8 325.2M414.1 329.7L461.5 329.7L508.8 329.4M415.8 334.2L462.8 333.7L509.8 333.7M413.7 338.6L461 338L508.2 339M414.8 343.1L462 343.3L509.3 342.2M413.2 347.3L461.3 347.8L509.5 346.7M413.7 351.3L462.2 351.6L510.7 351.3M413.1 355.6L461.2 354.9L509.3 355.9M413.2 359.6L460.9 360.6L508.5 359.4M413.7 364.1L460.9 363.6L508 365M415.8 368.6L463.3 369.5L510.8 369.4M413.1 372.6L460.6 372.4L508.1 371.9M413.5 376.5L461.5 376L509.5 376.2M413.4 380.6L461 380.2L508.6 379.6M415.1 384.7L462.7 385.4L510.3 385.5M414.1 389.3L461.5 390.1L508.8 388.6M416 394L462.4 394.4L508.8 393.3M414.7 398.3L462.5 398.3L510.2 398.9M415.4 402.6L462.8 401.8L510.2 402.9M415.8 406.5L461.9 407.4L508.1 406.9M415.9 410.6L462.5 409.8L509.1 410.6M414.8 415.4L462.4 416.4L509.9 415.4" fill="none" stroke="#000" stroke-width="2.2"/>
<path d="M439.7 336.6h40.4M446.3 363.4h36.3M415.6 348.9h32M467.8 398.7h20.7M467.8 362h38.4M414.4 328.8h30.3M468.4 338.3h30.1M445 401h40.6M455.3 346.1h25M446 336.2h38.4" fill="none" stroke="#000" stroke-width="1.6"/>
<clipPath id="c3"><path d="M551 323L644 320L645 414L552 416Z"/></clipPath>
<path d="M491 418L556.7 318M495.3 418L560.3 318M500 418L566 318M504.5 418L570.9 318M509.1 418L575.8 318M513.3 418L579.5 318M518 418L585.1 318M522.7 418L588 318M527 418L592.6 318M531.4 418L596.8 318M535.8 418L602.3 318M539.4 418L605.3 318M543.1 418L610.1 318M547.7 418L614.3 318M552.1 418L618.8 318M556.2 418L622.2 318M560.8 418L627.1 318M564.5 418L629.8 318M568.8 418L633.1 318M572.6 418L636.7 318M576.9 418L641.1 318M580.8 418L645 318M585.1 418L650.7 318M588.7 418L653.5 318M593.1 418L657.5 318M597.1 418L661.4 318M600.8 418L668.3 318M604.6 418L669.9 318M609 418L675 318M613.7 418L680.3 318M618.1 418L683.9 318M622.1 418L688.8 318M625.8 418L690.8 318M630.3 418L695.4 318M634.3 418L701.8 318M638 418L703.9 318M642.5 418L706.7 318M647 418L714.9 318" fill="none" stroke="#000" stroke-width="1.25" clip-path="url(#c3)"/>
<path d="M688.5 325.5a2.8 2.8 0 0 1 5.6 0V416a2.8 2.8 0 0 1 -5.6 0Z" fill="#fff" stroke="#000" stroke-width="1.4"/>
<path d="M713.8 326a2.4 2.4 0 0 1 4.8 0V366h-4.8ZM713.3 369.5a3 3 0 1 0 6 0a3 3 0 1 0 -6 0" fill="#fff" stroke="#000" stroke-width="1.3"/>
<path d="M736.3 326.5a2.4 2.4 0 0 1 4.8 0V349a2.4 2.4 0 0 1 -4.8 0Z" fill="#fff" stroke="#000" stroke-width="1.3"/>
<path d="M779 323L786 338" stroke="#000" stroke-width="4.2" stroke-linecap="round" fill="none"/><path d="M779 323L786 338" stroke="#fff" stroke-width="1.6" stroke-linecap="round" fill="none"/>
<path d="M796 322L793 340" stroke="#000" stroke-width="4.2" stroke-linecap="round" fill="none"/><path d="M796 322L793 340" stroke="#fff" stroke-width="1.6" stroke-linecap="round" fill="none"/>
<path d="M772 340L792 336" stroke="#000" stroke-width="4.2" stroke-linecap="round" fill="none"/><path d="M772 340L792 336" stroke="#fff" stroke-width="1.6" stroke-linecap="round" fill="none"/>
<path d="M770 346L786 341" stroke="#000" stroke-width="4.2" stroke-linecap="round" fill="none"/><path d="M770 346L786 341" stroke="#fff" stroke-width="1.6" stroke-linecap="round" fill="none"/>
<path d="M776 358L790 342" stroke="#000" stroke-width="4.2" stroke-linecap="round" fill="none"/><path d="M776 358L790 342" stroke="#fff" stroke-width="1.6" stroke-linecap="round" fill="none"/>
<path d="M786 356L806 340" stroke="#000" stroke-width="5" stroke-linecap="round" fill="none"/><path d="M786 356L806 340" stroke="#fff" stroke-width="2.4" stroke-linecap="round" fill="none"/>
<path d="M792 358L804 348" stroke="#000" stroke-width="4.2" stroke-linecap="round" fill="none"/><path d="M792 358L804 348" stroke="#fff" stroke-width="1.6" stroke-linecap="round" fill="none"/>
<path d="M783 350l5 8M798 336l8 -2l2 8" fill="none" stroke="#000" stroke-width="1.4"/>
<path d="M778 424q6 -5 13 -2q5 4 3 11q-5 6 -13 3q-6 -5 -3 -12Z" fill="#000"/>
<path d="M786 424Q784 405 775 394" fill="none" stroke="#000" stroke-width="2.6"/>
<path d="M791 425Q802 421 814 415" fill="none" stroke="#000" stroke-width="2.4"/>
<path d="M779 428Q762 430 745 430.5M752 431L748 438" fill="none" stroke="#000" stroke-width="2.4"/>
<path d="M782 435Q774 448 771 456L768.5 470" fill="none" stroke="#000" stroke-width="2.6"/>
<path d="M790 436Q797 445 801 454L807 467" fill="none" stroke="#000" stroke-width="2.6"/>
<path d="M792 432Q802 440 811 446.5" fill="none" stroke="#000" stroke-width="2.2"/>
<path d="M781 405l-8 -3M780 398l-6 1M789 408l8 -4M800 418l4 -6M771 456l-8 7M772 462l4 6M799 450l-8 -1M803 458l-6 3M760 432l-6 8M766 436l-6 7M774 440l-6 4M796 446l6 -2M782 442l6 4" fill="none" stroke="#000" stroke-width="1.5"/>
<path d="M756.6 435.5h1.5M774.7 408.6h1.5M816.1 416.9h1.5M799.2 427.7h1.5M783.8 450.4h1.5M771 442.2h1.5M760.6 408.6h1.5M782.8 461.9h1.5M766.5 403.5h1.5M773.4 408.1h1.5M766.1 443.1h1.5M785 428.1h1.5M782.7 456.6h1.5M800.2 421.8h1.5M783.3 422.7h1.5M803.9 412.1h1.5M802.1 427.6h1.5M775.9 421.2h1.5M798.5 450.5h1.5M755.7 436.5h1.5M803.3 433.3h1.5M786.6 417.9h1.5M781 437.8h1.5M810.9 434.6h1.5M767.7 419.8h1.5M776.6 432h1.5M798 441.2h1.5M794.2 429.5h1.5M809.8 448.2h1.5M814.8 440.3h1.5M765.9 426.7h1.5M804.8 420.6h1.5M764.2 439.7h1.5M766.1 461.4h1.5" fill="none" stroke="#333" stroke-width="1.4"/>
<path d="M874 323L873.6 370L874.7 417M868.9 325L879.1 329M869.9 329.5L878.1 324.5M868.7 336.4L879.3 333.4M871.3 343.5L876.7 347.5M871.8 348L876.2 343M870.3 355.9L877.7 352.9M868.7 362.7L879.3 366.7M869.8 367.2L878.2 362.2M869.7 373.5L878.3 377.5M870.6 378L877.4 373M871.2 380.5L876.8 384.5M871.8 385L876.2 380M869.7 391.5L878.3 395.5M870.5 396L877.5 391M869.1 402.3L878.9 406.3M870.1 406.8L877.9 401.8" fill="none" stroke="#000" stroke-width="1.05"/>
<path d="M896.5 323L896 370L897.1 417M893.9 325L899.1 329M894.4 329.5L898.6 324.5M891.1 335.7L901.9 332.7M893.2 343.5L899.8 340.5M894 349.2L899 353.2M894.5 353.7L898.5 348.7M891.4 362.2L901.6 359.2M891.6 367.7L901.4 371.7M892.6 372.2L900.4 367.2M893.3 381.4L899.7 378.4M893.7 386.6L899.3 390.6M894.3 391.1L898.7 386.1M892.3 394.5L900.7 398.5M893.1 399L899.9 394M891.8 406.6L901.2 403.6M893.4 412.6L899.6 416.6M894 417.1L899 412.1" fill="none" stroke="#000" stroke-width="1.05"/>
<path d="M920 323L921 370L920.7 417M914.7 328.5L925.3 325.5M917.4 336.8L922.6 333.8M915.8 346.7L924.2 343.7M916.9 353.7L923.1 357.7M917.5 358.2L922.5 353.2M916.7 361.1L923.3 365.1M917.4 365.6L922.6 360.6M916.9 370.7L923.1 374.7M917.5 375.2L922.5 370.2M917.4 382.1L922.6 379.1M917.2 391.6L922.8 388.6M915.8 401.1L924.2 398.1M916 410.8L924 407.8" fill="none" stroke="#000" stroke-width="1.05"/>
<path d="M943 323L943.8 370L942.1 417M939.8 325L946.2 329M940.5 329.5L945.5 324.5M938.7 337.9L947.3 334.9M939.9 343.2L946.1 347.2M940.5 347.7L945.5 342.7M940.2 352.6L945.8 356.6M940.8 357.1L945.2 352.1M938.8 362.5L947.2 366.5M939.6 367L946.4 362M939.5 372.9L946.5 376.9M940.2 377.4L945.8 372.4M939.4 383.8L946.6 380.8M937.6 392L948.4 389M939 397.2L947 401.2M939.8 401.7L946.2 396.7M938.5 405.1L947.5 409.1M939.4 409.6L946.6 404.6" fill="none" stroke="#000" stroke-width="1.05"/>
<path d="M965.5 323L965.9 370L965.2 417M961.9 325L969.1 329M962.6 329.5L968.4 324.5M961 333L970 337M961.9 337.5L969.1 332.5M962.9 344.2L968.1 341.2M960.6 350L970.4 354M961.6 354.5L969.4 349.5M960.7 357.1L970.3 361.1M961.7 361.6L969.3 356.6M962 371.4L969 368.4M961.5 378.1L969.5 382.1M962.3 382.6L968.7 377.6M960.1 392.2L970.9 389.2M962.9 396.1L968.1 400.1M963.4 400.6L967.6 395.6M961.7 405.3L969.3 409.3M962.4 409.8L968.6 404.8" fill="none" stroke="#000" stroke-width="1.05"/>
<path d="M301 412L301.5 412.5L302.4 414.3L303.6 416.6L304.9 418.8L306 420L307 420.2L308 419.8L309 419L310 418L311 417L312.1 415.6L313.4 413.6L314.6 411.8L315.7 410.5L316.5 410.5L317 412L317.3 414.8L317.4 418.2L317.4 421.7L317.5 425L317.5 428.1L317.3 431.4L317.2 434.6L317.2 437.6L317.5 440L318.3 441.7L319.4 443L320.7 443.9L322 444.8L323 446L323.8 447.4L324.5 448.9L325 450.4L325.5 452.1L326 454L326.4 456.2L326.7 458.6L327 461.2L327.2 463.7L327.3 466L327.3 468.1L327.2 470.2L327 472.2L326.8 474.1L326.5 476L326.1 477.9L325.5 479.8L324.9 481.7L324.5 483.4L324.5 485L325 486.4L325.8 487.5L326.8 488.6L327.7 489.7L328.5 491L329.1 492.5L329.6 494.1L330 495.7L330.2 497.4L330.3 499L330.2 500.6L329.9 502.3L329.5 504L328.8 505.6L328 507L326.9 508.3L325.4 509.4L323.9 510.4L322.3 511.3L321 512L319.8 512.3L318.7 512.3L317.7 512.2L316.8 512.4L316 513L315.4 514.5L315.1 516.7L314.8 519.1L314.5 521L314 522L313.4 521.7L312.6 520.6L311.8 519L311 517.3L310 516L308.9 515.1L307.7 514.4L306.5 513.6L305.2 512.9L304 512L302.7 511L301.4 509.8L300.1 508.6L299 507.4L298 506L297.2 504.5L296.6 502.9L296.2 501.3L295.9 499.6L295.7 498L295.7 496.4L295.9 494.7L296.3 493L296.6 491.4L297 490L297.4 488.8L298 487.9L298.5 487L298.9 486.1L299 485L298.7 483.8L298.1 482.5L297.3 481.1L296.6 479.6L296 478L295.6 476.2L295.4 474.2L295.2 472.1L295 470L295 468L295 466L295.2 463.9L295.4 461.9L295.7 459.9L296 458L296.4 456.2L296.8 454.6L297.3 453L297.8 451.4L298.5 450L299.3 448.7L300.3 447.6L301.3 446.4L302.2 445.3L303 444L303.5 442.6L304 441.1L304.3 439.6L304.5 437.9L304.7 436L304.8 433.9L304.9 431.5L304.9 429L304.8 426.5L304.5 424L303.9 421.3L302.9 418.2L301.9 415.4L301.2 413.1Z" fill="#fff" stroke="#000" stroke-width="1.5"/>
<path d="M305 416l5 3M305 420l5 3M305.5 424l5 3M305.5 428l5 3M306 432l5 3M306 436l4 3M311 517q4 7 10 1" fill="none" stroke="#000" stroke-width="1.4"/>
<path d="M380 412L380.9 412.4L381.7 413.6L382.6 415.1L383.4 416.9L384.2 418.6L385 420L385.9 421.1L386.9 422.1L387.9 423L388.9 423.9L389.6 424.9L390 426L390 427.2L389.6 428.4L389.1 429.8L388.5 431.1L388.1 432.5L388 434L388.3 435.5L388.9 437.1L389.6 438.8L390.4 440.4L391.3 442.2L392 444L392.7 445.8L393.4 447.7L394.1 449.6L394.8 451.6L395.4 453.7L396 456L396.5 458.4L396.9 461L397.3 463.6L397.6 466.4L397.8 469.2L398 472L398.1 474.9L398.1 477.9L398.1 481L398 484.1L397.8 487.1L397.5 490L397.1 492.8L396.6 495.7L396.1 498.4L395.5 501.1L394.8 503.6L394 506L393.2 508.2L392.3 510.3L391.4 512.3L390.4 514.1L389.3 515.7L388 517L386.6 518L385 518.8L383.2 519.4L381.5 519.7L379.7 519.9L378 520L376.3 519.9L374.5 519.7L372.8 519.2L371 518.7L369.4 517.9L368 517L366.7 515.9L365.6 514.6L364.5 513.2L363.6 511.6L362.8 509.9L362 508L361.4 506L360.8 503.8L360.4 501.4L360.1 499L359.8 496.5L359.5 494L359.3 491.4L359.1 488.8L359.1 486.1L359 483.4L359 480.7L359 478L359 475.3L359.1 472.6L359.2 469.9L359.3 467.2L359.4 464.6L359.5 462L359.6 459.5L359.7 457L359.8 454.6L360 452.3L360.2 450.1L360.5 448L360.9 446.1L361.5 444.2L362.1 442.5L362.7 440.9L363.4 439.4L364 438L364.7 436.8L365.5 435.7L366.3 434.8L367.1 433.9L367.7 433L368 432L367.9 431L367.4 430L366.8 429L366.1 428L365.8 427L366 426L366.8 425L368 424.1L369.5 423.1L371.1 422.1L372.7 421.1L374 420L375.1 418.6L376.2 416.9L377.2 415.1L378.1 413.6L379.1 412.4Z" fill="#fff" stroke="#000" stroke-width="1.6"/>
<path d="M364 426l6 -6l6 -1l5 -7l4 8l6 5l-5 5l-8 -1l-8 2ZM361 440q8 -6 13 2q2 12 -4 22q-6 4 -9 2q-2 -14 0 -26ZM388 457q8 6 9.5 20q0 14 -4 24q-5 -6 -5 -20q-2 -12 -0.500 -24ZM372 486q8 -6 14 -1q-1 10 -9 16q-6 -4 -5 -15ZM364 500q6 6 10 17l-9 -3q-3 -6 -1 -14ZM384 502q6 2 7 6q-2 8 -7 10q-3 -8 0 -16ZM368 462l4 -10l3 2l-4 12ZM378 448l3 -7l2 1l-3 8Z" fill="#000"/>
<path d="M356 509q8 12 20 18M360 515q8 8 18 9M364 521q6 4 14 4" fill="none" stroke="#000" stroke-width="1.5"/>
<path d="M264 541L264.6 541.3L265.3 542.2L265.9 543.4L266.5 544.8L267.2 546.1L268 547L268.9 547.5L270 547.6L271.2 547.7L272.3 547.8L273.3 548.2L274 549L274.5 550.3L274.7 552L274.8 553.9L274.9 555.9L274.9 558L275 560L275.2 562L275.5 564L275.8 566.1L276 568.1L276.1 570.1L276 572L275.8 573.8L275.4 575.6L275 577.4L274.4 579L273.8 580.6L273 582L272.1 583.4L270.9 584.7L269.7 586L268.4 587L267.2 587.7L266 588L264.9 587.8L263.8 587.1L262.8 586.1L261.7 584.9L260.8 583.5L260 582L259.3 580.4L258.6 578.5L258.1 576.5L257.6 574.4L257.2 572.2L257 570L256.9 567.7L257 565.3L257.2 562.8L257.4 560.3L257.7 558L258 556L258.3 554.3L258.5 552.9L258.8 551.6L259.1 550.4L259.5 549.2L260 548L260.6 546.6L261.2 545.1L261.9 543.6L262.6 542.3L263.3 541.4Z" fill="#fff" stroke="#000" stroke-width="2.2"/>
<path d="M255 548l7 2M270 547l8 -2M264 541l1 8M265 588l-1 5M264 560h1.500M268 570h1.500M262 574h1.500M266 580h1.500M272 556v22" fill="none" stroke="#000" stroke-width="1.6"/>
<path d="M437 494l8 -4l8 3M441 491l4 6l5 -5M444 489l3 6" fill="none" stroke="#000" stroke-width="1.2"/>
<path d="M428 568l10 -6l6 4l10 -4l6 8M441 560l2 12M445 561l0 11" fill="none" stroke="#000" stroke-width="1.2"/>
<path d="M319 590q6 -10 14 -9q4 -4 10 0q8 0 10 8q-4 6 -12 4q-8 4 -14 0q-6 2 -8 -3ZM329 586a5 3.5 0 1 0 10 0a5 3.5 0 1 0 -10 0" fill="#fff" stroke="#000" stroke-width="1.8"/>
<path d="M320 630q6 -10 14 -9q4 -4 10 0q8 0 10 8q-4 6 -12 4q-8 4 -14 0q-6 2 -8 -3ZM330 626a5 3.5 0 1 0 10 0a5 3.5 0 1 0 -10 0" fill="#fff" stroke="#000" stroke-width="1.8"/>
<path d="M332 624l8 0l-3 8Z" fill="#000"/>
<path d="M561.8 491.7A3.2 3.2 0 0 1 565.1 487.6A4.5 4.5 0 0 1 571.1 482.9A8.2 8.2 0 0 1 584.7 481.3A4.8 4.8 0 0 1 592.6 481.2A4 4 0 0 1 599.3 481.2A4.8 4.8 0 0 1 607.3 482.2A7.6 7.6 0 0 1 619.6 479.7A5.3 5.3 0 0 1 628.4 480.6A2.7 2.7 0 0 1 632.9 480.7A4.1 4.1 0 0 1 639.1 483.5A8.5 8.5 0 0 1 645.8 496A4.1 4.1 0 0 1 645 502.8A5 5 0 0 1 640.1 509.6A3.7 3.7 0 0 1 636.9 514.8A3.7 3.7 0 0 1 631.4 517.6A4.8 4.8 0 0 1 626.7 524.1A4.8 4.8 0 0 1 619.5 527.6A4.1 4.1 0 0 1 614 531.8A3.7 3.7 0 0 1 609 535.3A8.7 8.7 0 0 1 598.3 545.1A4.8 4.8 0 0 1 590.4 546.3A4 4 0 0 1 584.8 549.9A4.3 4.3 0 0 1 577.7 548.9A8.2 8.2 0 0 1 567.4 539.8A5.2 5.2 0 0 1 564.1 531.9A3.3 3.3 0 0 1 561.2 527.1A3.9 3.9 0 0 1 560.2 520.6A9.5 9.5 0 0 1 559.3 504.9A3.3 3.3 0 0 1 558.8 499.5A5 5 0 0 1 561.8 491.7Z" fill="#fff" stroke="#000" stroke-width="2.3" stroke-linejoin="round"/>
<path d="M581.7 500.8q3 3 5 0l2 -3M606.6 512.7q3 3 5 0l2 -3M591.3 503.4q3 3 5 0l2 -3M597.9 500.6q3 3 5 0l2 -3M608.6 511.6q3 3 5 0l2 -3M620.5 510.7q3 3 5 0l2 -3" fill="none" stroke="#000" stroke-width="1.4"/>
<path d="M925.8 459.7A3 3 0 0 1 930.1 460.3A2.8 2.8 0 0 1 934.1 460.4A6.2 6.2 0 0 1 942.8 462.1A3.1 3.1 0 0 1 946.6 464.2A3.1 3.1 0 0 1 950.7 466A2.7 2.7 0 0 1 953.8 468.2A2.9 2.9 0 0 1 956.9 470.9A2.8 2.8 0 0 1 960 473.3A3.1 3.1 0 0 1 962.9 476.7A3.3 3.3 0 0 1 965.9 480.3A2.6 2.6 0 0 1 967.8 483.5A2.9 2.9 0 0 1 968.7 487.5A2.8 2.8 0 0 1 970.2 491.2A3.3 3.3 0 0 1 970.6 495.8A3.2 3.2 0 0 1 970.7 500.4A2.6 2.6 0 0 1 970.7 504.2A6 6 0 0 1 968.4 512.4A3 3 0 0 1 967.1 516.4A3 3 0 0 1 965.8 520.5A2.7 2.7 0 0 1 963.2 523.4A6 6 0 0 1 958.4 530.5A3 3 0 0 1 955 533.2A3.1 3.1 0 0 1 952 536.5A2.6 2.6 0 0 1 948.6 537.9A3 3 0 0 1 945.2 540.3A3 3 0 0 1 941.1 541.7A3.2 3.2 0 0 1 936.7 543A2.6 2.6 0 0 1 933.1 543.4A3.2 3.2 0 0 1 928.5 543.3A2.8 2.8 0 0 1 924.5 543.3A2.9 2.9 0 0 1 920.4 543.1A3.1 3.1 0 0 1 916 543.1A2.9 2.9 0 0 1 912.1 542A2.7 2.7 0 0 1 908.4 540.7A3.5 3.5 0 0 1 904.2 538.1A2.6 2.6 0 0 1 900.7 536.9A3.3 3.3 0 0 1 897.3 533.7A3.1 3.1 0 0 1 893.9 530.7A2.5 2.5 0 0 1 891.8 527.9A3.1 3.1 0 0 1 889.4 524.2A2.9 2.9 0 0 1 886.4 521.2A3.3 3.3 0 0 1 884.6 516.8A2.5 2.5 0 0 1 883.1 513.4A2.8 2.8 0 0 1 882.3 509.5A5.9 5.9 0 0 1 881.6 501A2.8 2.8 0 0 1 882.1 497A3 3 0 0 1 882.8 492.8A3.3 3.3 0 0 1 883.4 488.1A5.9 5.9 0 0 1 887.2 480.6A2.7 2.7 0 0 1 889.5 477.5A2.7 2.7 0 0 1 891.8 474.3A2.9 2.9 0 0 1 895 471.5A2.8 2.8 0 0 1 897.9 468.9A3.2 3.2 0 0 1 901.7 466.3A2.8 2.8 0 0 1 905.3 464.4A3.3 3.3 0 0 1 909.7 462.9A3 3 0 0 1 914 461.9A5.7 5.7 0 0 1 922 460.6A2.8 2.8 0 0 1 925.8 459.7Z" fill="#fff" stroke="#000" stroke-width="2.3" stroke-linejoin="round"/>
<path d="M920 498q16 10 32 -12M905 512q26 22 60 -22M896 520q30 30 72 -12M918 540q26 2 44 -22M962 474v12" fill="none" stroke="#000" stroke-width="1.4" stroke-dasharray="7 4 4 5"/>
<path d="M926.1 569.3A2.6 2.6 0 0 1 929.7 569A3.1 3.1 0 0 1 934 570.1A5.3 5.3 0 0 1 941.2 572.8A3.2 3.2 0 0 1 944.1 576.3A2.4 2.4 0 0 1 946.1 579A2.8 2.8 0 0 1 948 582.6A5.8 5.8 0 0 1 949.4 590.8A2.3 2.3 0 0 1 948.8 594.1A3.1 3.1 0 0 1 947.3 598.2A2.4 2.4 0 0 1 945.4 601.1A5.6 5.6 0 0 1 939 605.9A3.2 3.2 0 0 1 935.1 608.3A2.5 2.5 0 0 1 931.6 609.2A3.1 3.1 0 0 1 927.2 609.5A5.7 5.7 0 0 1 919.2 609.2A2.8 2.8 0 0 1 915.3 608.5A2.5 2.5 0 0 1 912.2 606.6A2.9 2.9 0 0 1 908.7 604.4A3.2 3.2 0 0 1 905.9 600.8A2.3 2.3 0 0 1 904 598.2A2.9 2.9 0 0 1 902.3 594.3A3 3 0 0 1 902.5 590.1A2.5 2.5 0 0 1 902.5 586.4A3 3 0 0 1 903.1 582.1A3 3 0 0 1 905.2 578.5A2.5 2.5 0 0 1 907.9 576A3.1 3.1 0 0 1 911 572.8A2.6 2.6 0 0 1 914.4 571.2A5.8 5.8 0 0 1 922.4 569.1A2.6 2.6 0 0 1 926.1 569.3Z" fill="#fff" stroke="#000" stroke-width="2.3" stroke-linejoin="round"/>
<path d="M920 588q10 6 18 -6M912 596q16 10 30 -10M916 605q14 4 26 -10" fill="none" stroke="#000" stroke-width="1.4" stroke-dasharray="6 4 3 4"/>
<path d="M966 640L967.2 637.8L968.6 635.3L970.2 632.8L972 630.2L973.9 627.9L976 626L978.3 624.4L981 623.1L983.8 622L986.6 621.1L989.4 620.4L992 620L994.6 619.8L997.3 619.7L999.9 619.9L1002.3 620.3L1004.4 621L1006 622L1007.1 623.4L1007.8 625.1L1008.1 627.1L1008.2 629.3L1008.2 631.7L1008 634L1007.8 636.5L1007.3 639.1L1006.8 641.9L1006 644.7L1005.1 647.4L1004 650L1002.7 652.6L1001.3 655.2L999.6 657.8L997.9 660.1L996 662.3L994 664L991.9 665.4L989.6 666.5L987.1 667.4L984.7 667.9L982.3 668.1L980 668L977.8 667.4L975.6 666.3L973.4 664.9L971.4 663.3L969.6 661.6L968 660L966.7 658.4L965.5 656.8L964.6 655.1L963.8 653.4L963.3 651.7L963 650L963 648.4L963.1 646.8L963.6 645.2L964.2 643.6L965 641.9Z" fill="#fff" stroke="#000" stroke-width="2.2"/>
<path d="M1004 626q-8 18 -6 36" fill="none" stroke="#000" stroke-width="1.2"/>
<path d="M1004 662L1004.5 660L1006 657.4L1007.9 654.6L1010 652L1012 650L1014 648.6L1016.3 647.5L1018.6 646.8L1020.6 646.6L1022 647L1022.8 648.2L1023.2 650.2L1023.2 652.5L1022.8 654.9L1022 657L1020.6 658.9L1018.6 660.9L1016.3 662.7L1014 664.1L1012 665L1010 665.2L1007.9 665L1006 664.4L1004.5 663.4Z" fill="#fff" stroke="#000" stroke-width="2"/>
<path d="M1020 627q4 6 1 14q-4 -4 -1 -14ZM1011 620a2 2 0 1 0 4 0a2 2 0 1 0 -4 0" fill="#fff" stroke="#000" stroke-width="1.8"/>
<g transform="rotate(-14 569 576)">
<rect x="557" y="565" width="24" height="22" fill="#fff" stroke="#000" stroke-width="2.3"/>
<path d="M560 585l5 -17l5 15l5 -16l4 14M559 571h20" fill="none" stroke="#000" stroke-width="1.7"/>
</g>
<circle cx="543.5" cy="595" r="10.5" fill="#000"/>
<path d="M538.5 594q2 -5 6 -3q3 2 0 5q-3 3 -6 -2M544.5 599q4 2 5 -3M537.5 599l3 2M546.5 589l3 2" fill="none" stroke="#fff" stroke-width="1.5"/>
<circle cx="594.5" cy="595" r="11.5" fill="#000"/>
<path d="M589.5 594q2 -5 6 -3q3 2 0 5q-3 3 -6 -2M595.5 599q4 2 5 -3M588.5 599l3 2M597.5 589l3 2" fill="none" stroke="#fff" stroke-width="1.5"/>
<rect x="654" y="532" width="39" height="44" fill="#fff" stroke="#000" stroke-width="2.5"/>
<path d="M660 577l1 6l24 -1l2 -5" fill="#fff" stroke="#000" stroke-width="1.9"/>
<path d="M657 536h33M660 541h12M676 541h14M659 546h26M661 551h10M677 553h12M660 557h12M678 560h12M661 563h10M675 566h14M660 569h24M673 545v22" fill="none" stroke="#000" stroke-width="1.4"/>
<rect x="552.5" y="621.5" width="139.5" height="73.5" fill="#fff" stroke="#000" stroke-width="2.6"/>
<path d="M553 657h139M553 659.5h139" fill="none" stroke="#000" stroke-width="1.1"/>
<path d="M605 695l1 6l33 -1l1 -5" fill="#fff" stroke="#000" stroke-width="1.4"/>
<path d="M557 655v-15M558 661v20.1M561.6 655v-20.6M562.6 661v16.3M565.4 655v-13.2M566.4 661v16.1M569.7 655v-19.3M570.7 661v18.2M574.2 655v-21.5M575.2 661v16.2M578.8 655v-10.4M579.8 661v19.1M583.3 655v-13.2M584.3 661v20.3M588 655v-18.3M589 661v20.7M592.2 655v-10.3M593.2 661v24M597.1 655v-15.6M598.1 661v21.1M601 655v-12.9M602 661v22.4M605.3 655v-21M606.3 661v24.5M609 655v-18.2M610 661v23.1M613.3 655v-18.1M614.3 661v20.8M618.4 661v21.1M621.3 655v-15.5M622.3 661v24.3M624.8 655v-15.7M625.8 661v20M629.7 655v-14.2M630.7 661v21.4M635.6 661v20.8M638.7 655v-17.7M639.7 661v13.6M643.1 655v-15.3M644.1 661v18.1M646.9 655v-20.2M647.9 661v23.9M650.5 655v-16.5M651.5 661v17.4M655.1 661v13.9M658.6 655v-13.4M664.3 661v23.3M666.8 655v-18.4M667.8 661v24.5M671.9 655v-16.8M672.9 661v15.8M675.6 655v-13.7M676.6 661v23.9M680.3 655v-12M681.3 661v14.9M683.9 655v-18.8M684.9 661v14.9M687.9 655v-21.8M688.9 661v13.6" fill="none" stroke="#000" stroke-width="1.4"/>
<path d="M605.9 641.7h1.5M560.4 635.5h1.5M601.3 647.7h1.5M672.6 634.1h1.5M651.8 628.2h1.5M642.2 648.9h1.5M607.1 648.5h1.5M631.9 626.5h1.5M599.1 642.7h1.5M594.9 641.6h1.5M661.6 643.4h1.5M681 634.2h1.5M635.1 633.7h1.5M648.4 631.7h1.5M588.3 637.9h1.5M644.5 648.9h1.5M657.9 632.3h1.5M619.4 646.9h1.5M593.9 628.4h1.5M650.8 637.4h1.5M665.5 643.8h1.5M625.9 646.9h1.5M568.6 646.1h1.5M592.7 640.6h1.5M649.7 643.1h1.5M596.2 635.7h1.5M661.6 645.3h1.5M557.2 638.4h1.5M650.3 629.1h1.5M630.7 631h1.5M627.6 653.8h1.5M671.5 633.4h1.5M645.6 644.9h1.5M573.7 642.2h1.5M615.7 651.5h1.5M642.1 646.2h1.5M616.2 637.3h1.5M584.8 647h1.5M649 638.9h1.5M665.1 634.3h1.5M585.8 675.7h1.5M669.7 681.1h1.5M588.9 676.7h1.5M629.9 675.1h1.5M636.2 683.5h1.5M602 672.8h1.5M641.9 672.8h1.5M634.6 676.8h1.5M592 682.6h1.5M569.2 678.3h1.5M614.8 682h1.5M605.4 683.4h1.5M621.6 674.6h1.5M624.2 688.8h1.5M584.9 682.4h1.5M578.5 681.3h1.5M620.8 685.6h1.5M580.7 676h1.5M612.7 678.8h1.5M593.4 688.7h1.5M645.9 689.2h1.5M594.1 681.9h1.5M595.2 678.3h1.5M607.3 687h1.5M616.9 684.7h1.5M610 682.5h1.5M646.8 686.1h1.5M656.8 686.9h1.5M662.9 675.5h1.5M620 672.5h1.5M575.4 676.3h1.5M626.1 675.4h1.5M645.6 674.1h1.5M663.8 674.5h1.5M625.9 678.7h1.5M639.3 685.2h1.5M575.2 678.4h1.5M605.6 680h1.5M600.4 687.6h1.5M581.5 682.3h1.5" fill="none" stroke="#000" stroke-width="1.3"/>
<path d="M717.8 641.3A2.8 2.8 0 0 1 721.8 639A4.3 4.3 0 0 1 728.8 637.1A3.2 3.2 0 0 1 734 636A4.6 4.6 0 0 1 741.3 638.3A2.8 2.8 0 0 1 744.1 642A4.8 4.8 0 0 1 747.4 649.3A4 4 0 0 1 749.1 655.7A7.3 7.3 0 0 1 751.1 667.8A4.3 4.3 0 0 1 752.8 674.8A3.8 3.8 0 0 1 754.7 680.9A3.9 3.9 0 0 1 754 687.4A3.4 3.4 0 0 1 753.1 693A4.3 4.3 0 0 1 749.2 699.1A3.9 3.9 0 0 1 744.2 703.3A2.9 2.9 0 0 1 740.3 706.1A5.7 5.7 0 0 1 732 710.6A7.3 7.3 0 0 1 719.9 711.2A3.9 3.9 0 0 1 714.6 707.3A3.9 3.9 0 0 1 711.6 701.5A3 3 0 0 1 708.4 697.6A7.5 7.5 0 0 1 705.4 685.5A5.2 5.2 0 0 1 704.7 676.9A3.2 3.2 0 0 1 705.3 671.6A4.1 4.1 0 0 1 707.4 665.2A3.7 3.7 0 0 1 708.2 659A4.2 4.2 0 0 1 708.4 652A4 4 0 0 1 711.3 646.1A4.9 4.9 0 0 1 717.8 641.3Z" fill="#fff" stroke="#000" stroke-width="2.3" stroke-linejoin="round"/>
<path d="M728.3 686.9q3 3 5 0l2 -3M712.8 681.9q3 3 5 0l2 -3M730.1 693.5q3 3 5 0l2 -3M731.5 671.6q3 3 5 0l2 -3" fill="none" stroke="#000" stroke-width="1.4"/>
<path d="M700 724l8 3l-2 5l-6 -3Z" fill="#000"/>
<g transform="translate(801 642.7) rotate(36.4)">
<rect x="0" y="0" width="100.6" height="67.4" fill="#fff" stroke="#000" stroke-width="2.4"/>
<path d="M0 33h100.6M0 35.4h100.6" fill="none" stroke="#000" stroke-width="1.0"/>
<path d="M6 31.5v-13.5M7 37v21.5M9.3 31.5v-7.4M10.3 37v23.5M14 31.5v-10.8M15 37v16.5M17.3 31.5v-11.3M20.9 31.5v-20.5M21.9 37v17.4M24.6 31.5v-12.6M25.6 37v8.5M29.3 37v14.4M31.6 31.5v-12.6M32.6 37v14.5M35.7 31.5v-14M36.7 37v12.9M39.4 31.5v-20.8M40.4 37v13.9M43.3 31.5v-15.3M44.3 37v9.5M47.5 31.5v-18.1M48.5 37v11.8M52 31.5v-17.7M53 37v8.1M56 31.5v-12.7M57 37v21.3M60.3 31.5v-12.2M61.3 37v14.2M65 31.5v-18.6M66 37v12.8M69.8 31.5v-19.4M70.8 37v23.8M74.4 31.5v-19.2M75.4 37v16.9M79.1 31.5v-8.1M80.1 37v17.3M83.7 31.5v-20.3M84.7 37v9.8M87.9 31.5v-12.9M88.9 37v22.3M91.7 31.5v-18.4M95.6 31.5v-20.9M96.6 37v19.2" fill="none" stroke="#000" stroke-width="1.3"/>
<path d="M28 67.4l0 5l32 0l0 -5" fill="#fff" stroke="#000" stroke-width="1.4"/>
<path d="M27.6 13.6h1.5M67.5 18h1.5M26 16.1h1.5M55.9 9h1.5M17.9 9.9h1.5M62.3 17.1h1.5M15.4 11.4h1.5M67.9 15.7h1.5M90.9 12.9h1.5M71.8 6.9h1.5M44.4 8.1h1.5M78.5 8.8h1.5M38.8 5h1.5M39.3 19h1.5M81.8 18.3h1.5M96.7 11.5h1.5M86.6 9.5h1.5M63.4 13.8h1.5M89.2 16.1h1.5M19.4 10.2h1.5M42 20.4h1.5M35 10.4h1.5M22.8 18.9h1.5M53.9 3.2h1.5M17.9 7.5h1.5M49.1 55.4h1.5M47.8 64.8h1.5M69.1 63.4h1.5M56.9 58.9h1.5M40.8 53.7h1.5M34.5 54.6h1.5M30.9 52h1.5M88 55.6h1.5M78.1 59.6h1.5M8.5 57.5h1.5M85.1 59.6h1.5M32.9 52h1.5M58.5 61.7h1.5M39.3 58.7h1.5M91.7 57.4h1.5M20.6 62.1h1.5M11.4 61.8h1.5M68.8 61.8h1.5M67.8 52.7h1.5M76.5 63.8h1.5M88.3 54.9h1.5M80.7 63.2h1.5M65.7 53.1h1.5M78.7 62.7h1.5M30.6 52.8h1.5" fill="none" stroke="#000" stroke-width="1.2"/>
</g>
<circle cx="889.5" cy="734.5" r="9.5" fill="#fff" stroke="#000" stroke-width="2"/><circle cx="889.5" cy="735" r="5.5" fill="none" stroke="#000" stroke-width="2.4" stroke-dasharray="2.5 1.5"/><circle cx="889.5" cy="735.5" r="2.5" fill="#000"/>
<rect x="855.5" y="760" width="24" height="23.5" fill="#fff" stroke="#000" stroke-width="2"/>
<path d="M860 762v20M864 762v14M868 762v20M872 762v16M876 762v20" fill="none" stroke="#000" stroke-width="1.5"/>
<rect x="251.5" y="691" width="120" height="48.5" fill="#fff" stroke="#000" stroke-width="2.5"/>
<path d="M257 695.5v13.6M257 710.8v18.6M257 733.4v3.6M263 696.5v10.1M263 710.1v15.9M263 729v8M268.8 695.2v18.7M268.8 716.6v16.3M268.8 734.4v2.6M275 697.1v17.3M275 716.1v17.5M275 735.3v1.7M281.3 695.3v16.6M281.3 713.5v18.3M281.3 734.8v2.2M287.2 697.1v14.1M287.2 714.2v19.5M293.5 698v11M293.5 711.4v14.2M293.5 727.4v9.6M299.9 695.3v15.6M299.9 728.7v8.3M305.3 695.3v11.6M305.3 734v3M311.8 696.1v18M311.8 716.8v16.7M311.8 735.5v1.5M317.4 697.5v20.5M317.4 721.7v15.3M323.6 713.3v11.6M323.6 728.3v8.7M330 697.6v19.3M330 718.6v14.9M335.5 695.3v23.9M335.5 721.9v15.1M341.3 696.2v23.9M341.3 721.8v9.3M341.3 733v4M347.7 695.9v11.8M347.7 710.4v14.3M347.7 727.5v9.5M354.2 697.4v12M354.2 712.2v16.4M354.2 730.7v6.3M359.8 695.5v19.2M359.8 718.5v18.5M366.4 695.7v21.8M366.4 719.9v13.5M366.4 735.1v1.9" fill="none" stroke="#000" stroke-width="1.8"/>
<circle cx="251.5" cy="691" r="2.4" fill="#fff" stroke="#000" stroke-width="1.2"/>
<circle cx="371.5" cy="691" r="2.4" fill="#fff" stroke="#000" stroke-width="1.2"/>
<circle cx="251.5" cy="739.5" r="2.4" fill="#fff" stroke="#000" stroke-width="1.2"/>
<circle cx="371.5" cy="739.5" r="2.4" fill="#fff" stroke="#000" stroke-width="1.2"/>
<path d="M415.5 642v27h4.500v-27ZM437.5 642v27h4.500v-27Z" fill="#fff" stroke="#000" stroke-width="1.8"/>
<path d="M415 641h5.500v5h-5.500ZM437 641h5.500v5h-5.500Z" fill="#000"/>
<path d="M408.5 681h4v27h-4ZM447 679h6.500v30h-6.500Z" fill="#fff" stroke="#000" stroke-width="2"/>
<rect x="412.5" y="668" width="34.5" height="48.5" fill="#fff" stroke="#000" stroke-width="2.8"/>
<path d="M414 673h31M414 712h31" fill="none" stroke="#000" stroke-width="1.6"/>
<path d="M433.2 681.7h1.5M421.8 687h1.5M430.5 702h1.5M436.1 699.8h1.5M434.9 689.1h1.5M433.9 683.1h1.5M440 689.1h1.5M422.8 703.9h1.5M426.9 689.3h1.5M423.5 681h1.5M427.4 672.5h1.5M430.3 694.5h1.5M420 694.1h1.5M436.9 689.8h1.5M421.9 691.9h1.5M437.3 676.6h1.5M418.2 698.8h1.5M437.4 690.9h1.5M437 691.4h1.5M441.6 680h1.5M421.2 682.1h1.5M421.6 693.4h1.5M419 688.1h1.5M437.1 704.3h1.5M423.1 675.5h1.5M433.8 701.7h1.5M428.4 673.7h1.5M427.4 697.4h1.5" fill="none" stroke="#000" stroke-width="1.3"/>
<clipPath id="ch1"><path d="M271 876L506.5 875L507 1015L438 1015L438 944L271 944Z"/></clipPath>
<path d="M271 876L506.5 875L507 1015L438 1015L438 944L271 944Z" fill="#fff"/>
<g clip-path="url(#ch1)"><path d="M127 874L268.9 1016M135 874L276.8 1016M142.5 874L283.9 1016M151 874L294.1 1016M158.7 874L300 1016M167.2 874L310.1 1016M174.9 874L317 1016M183.8 874L326.7 1016M191.9 874L334.2 1016M200.1 874L342.2 1016M207.9 874L351.1 1016M216.4 874L358.4 1016M224 874L365 1016M231.9 874L373.9 1016M240.4 874L383.5 1016M247.8 874L390.1 1016M256.4 874L398.9 1016M264.8 874L406 1016M272.9 874L415.3 1016M280.3 874L421.4 1016M287.7 874L428.7 1016M295.7 874L438.1 1016M304.3 874L447.3 1016M312.5 874L455.6 1016M320.7 874L462.8 1016M328 874L469.6 1016M335.4 874L478 1016M342.9 874L483.8 1016M350.4 874L491.7 1016M358.2 874L501 1016M366.3 874L508.2 1016M373.9 874L515.7 1016M381.3 874L524.1 1016M389.2 874L531.5 1016M397 874L538.6 1016M404.6 874L545.8 1016M413.4 874L555.5 1016M421.8 874L564 1016M429.5 874L570.8 1016M437.9 874L580.7 1016M445.5 874L587.7 1016M453.1 874L595.2 1016M460.4 874L603.1 1016M467.7 874L610.3 1016M476.2 874L618.4 1016M483.8 874L624.8 1016M491.4 874L633.8 1016M500.1 874L642 1016M507.7 874L650.6 1016M267 874L125.3 1016M275.4 874L132.6 1016M283.6 874L141 1016M291.2 874L149.5 1016M298.7 874L156.9 1016M306.4 874L165.6 1016M314.3 874L171.5 1016M322.9 874L181.3 1016M330.6 874L187.6 1016M338 874L196.8 1016M345.8 874L204.7 1016M354.3 874L211.2 1016M361.9 874L220.6 1016M370.1 874L227.6 1016M378.3 874L235.8 1016M385.7 874L244.8 1016M393 874L250.8 1016M401.7 874L259.7 1016M410.5 874L268.8 1016M418.9 874L277.3 1016M427.5 874L284.3 1016M435.8 874L293 1016M444.2 874L302.4 1016M452.6 874L311.3 1016M461.1 874L319 1016M468.6 874L326.6 1016M476.7 874L334.7 1016M484.4 874L341.4 1016M493.1 874L350.6 1016M500.8 874L359.4 1016M508.4 874L365.9 1016M516.9 874L374.9 1016M525.6 874L383.7 1016M533.4 874L390.5 1016M541.5 874L399.5 1016M549.3 874L406.4 1016M557.2 874L414.3 1016M565 874L423.6 1016M573.6 874L431 1016M582.1 874L441.3 1016M590.1 874L449 1016M598.5 874L456.1 1016M607.1 874L464.5 1016M615.7 874L473.8 1016M623.1 874L481 1016M631.5 874L490.1 1016M639.4 874L497.7 1016M647.1 874L504 1016" fill="none" stroke="#000" stroke-width="1.4"/><path d="M462.3 900.5h1.9M323.4 915.9h2M377.7 951.8h1.4M485.2 885.9h2.1M500.4 994.7h1.6M338.5 984.9h1.9M503 989.5h1.2M404.2 934.5h1.4M504.1 970.6h1.6M392.5 957.5h2.3M327.1 923.2h1.8M375.6 904.2h1.5M353.6 999.4h1.8M421.6 963.9h2.3M312.7 961.7h2M437.9 925.5h1.7M503.9 944.5h2.4M414.4 962.2h1.7M506.6 930.1h1.7M305 1003h1.7M326.3 896.3h1.4M355.1 892.3h1.8M477.2 1002.1h2.4M457.2 1004.7h1.3M379.8 1009.7h1.6M432.5 929.8h1.8M464.8 961.4h2.1M327.7 889.9h1.2M412.3 941.6h1.6M441.1 933h1.7M323.9 897.2h2.1M385.7 907.5h1.3M415.8 882.7h1.6M364.9 889.2h1.2M490.8 911.8h2.3M278.6 908.8h1.8M317.3 962.8h1.5M446.4 1013.7h2.2M296.9 881.1h1.2M481.7 986.3h1.9M348.4 939.7h2.2M401.8 907.5h2.1M317.9 980h1.7M395.9 877.7h2.2M473.6 886.5h1.5M418.3 910.4h1.2M358.5 1003.8h2.1M431.2 911.2h1.2M503 911.9h1.7M453.3 920.7h1.7M287.2 992.2h2.2M322.7 924.6h2.1M341.8 991.1h1.7M408.6 998.4h1.2M346.4 947.9h2.1M398.8 947.8h1.6M439.6 943.9h1.9M449.3 935.1h1.9M289.5 924.7h1.9M484.3 930.4h2.2M447.9 894.1h1.9M342.4 976.9h2.1M388 898.9h1.9M381.6 938.1h1.2M390.1 988.3h1.8M275.1 954.8h1.4M394.2 906.3h2.1M338.8 985.4h1.8M369.5 964h1.9M383.9 939.6h2.2M357.4 903h1.3M474.8 1000.2h2.3M395.6 957h1.3M338.9 964.1h1.4M374 924.5h2.3M311.7 1001.3h1.2M303.6 940.4h1.8M286.7 955.4h2.3M276 952.5h2.3M408.8 932h2M392.7 914.7h1.4M334.3 907.6h2.2M372.3 914.4h2.2M425 950.4h2.1M288.7 1014.5h1.3M431.8 986.3h2M307.5 1007.1h1.6M422.5 948.3h1.9M495.7 1001.2h2.3M449.3 906.5h1.6M445.5 967.9h2.3M377.7 982.4h2.4M413 967h1.9M384.2 928.1h1.3M405.7 1006.9h1.8M447.8 883.9h2.2M357.9 944.2h2.4M351.9 907.1h2.2M393.2 893.9h1.9M334.1 956.4h1.5M281.2 952.2h1.7M447.6 901.7h1.7M422 938.6h2M464.7 894.6h1.6M348.1 970.3h2.4M446.6 974.2h1.4M373.2 931.3h1.3M296.9 917.2h1.6M329.1 917.4h1.5M308.2 967.5h1.5M456.3 911.9h1.4M488.9 904h1.3M388 912.8h1.7M377.9 898.6h1.8M277.6 954.3h1.7M355.8 1010.7h1.8M458.6 876.4h2.1M283.4 886.3h2.3M346.4 971.2h1.4M407.1 979.5h1.5M395.5 994.3h1.6M347.3 883.5h2.1M426.2 1002.5h2.2M420.4 984.2h2.2M439.4 993.4h1.9M419.1 927.7h1.5M369.9 972.4h1.6M431 980.7h2.3M429.9 1004.1h1.8M396.8 969.7h1.4M374 947.1h2M343.9 914.5h2M279.3 901.9h2.4M425.5 948.9h2.2M438.9 938.8h2.2M333 936h1.4M334.1 895.8h1.3M492.5 939h2.4M396.7 876.1h1.9M458.9 929.7h1.6M327.6 919.2h2.1M350.9 940.4h1.6M436.6 929h2.1M342.5 1014.8h1.3M460.6 997.9h1.9M458.8 962.9h1.3M484.1 937.9h2M465.5 943.5h1.5M468.5 973.6h2.1M418.2 1011.5h2.4M452.6 921.3h1.8M391.7 979.6h1.7M449.2 938h2M310.9 1001h2M306.4 886.5h1.9M378.6 998.3h1.3M462 984.9h1.5M282.5 1000.4h1.6M486.3 944.9h2.3M470.1 974.4h1.7M492.9 941.3h1.3M474.8 899.1h1.5M379 944.1h2.2M345.8 1001.5h1.3M320.9 977.3h2M489.9 895.1h1.3M399.1 1009.9h2M461.5 1009h1.5M291.2 971h1.3M314.3 916.6h1.2M432.1 900.3h2.1M504.1 977h1.9M419.5 928.4h1.3M433.1 972.9h1.5M452.5 995.9h1.7M460.9 929.7h1.8M467.6 1006.2h2.4M469.6 978.5h1.7M323.7 936.3h1.4M378.9 886.1h1.5M300.4 989.1h1.9M447.9 954.1h2.2M376.5 940.5h1.2M368.2 900.1h2.4M350 936.4h1.4M374.5 944.3h2.2M453.1 916.6h1.8M490.1 967.8h2.3M395.2 905.7h2.4M438.6 1009h2.2M500.2 1003.2h1.5M290.5 1007.6h2.3M428.6 1005.4h1.4M469.4 965.7h2.3M276.7 941.8h2.2M419.8 925.3h1.7M321.5 965.6h1.9M398.5 1013.6h1.8M374.6 887.1h1.4M402.2 954.9h1.5M384.2 1013.7h2.4M316.5 935.9h1.6M502.6 1006.5h1.8M359.9 963.2h1.9M451.3 917h1.6M272 924.3h1.4M500.3 1003.6h2M495.5 981.5h1.8M470.8 943.9h1.6M504.7 908.9h1.7M347.3 955.7h1.7M343.4 953.2h1.5M471 1001.3h1.6M284.5 914.9h2.3M504.6 888.4h1.9M419.4 978h1.8M311 963.2h2.1M355.2 915.9h1.3M288.1 905.1h1.8M475.4 958.6h1.9M363.6 930.9h2.1M416.3 931h1.3M287.9 941.3h1.7M326.8 955.6h1.5M306 985.3h1.9M493.4 876.7h1.8M446.5 886.9h2M284.7 957.3h1.7M362.2 895.2h2.1M355.2 919.2h1.7M436.4 957h1.8M454.2 930h2.3M384.6 958.5h1.4M365.3 1009.5h1.2M423 935.3h2M495.2 964.2h1.4M415.3 942.7h2.3M331 963.2h1.9M271.4 901.9h1.9M399 893.6h1.6M436.5 1011.3h2.1M431.7 953.6h1.8M333.9 1007.1h1.7M385.6 910.6h1.5M381.3 965.5h1.4M336.9 938.2h1.8M409.8 934.3h1.7M313.6 982.7h2.2M384.3 875.7h1.9M346.3 977.6h1.8M318.2 1014.6h1.7M486.9 922.6h1.3M304.3 893h2.2M463 934.8h1.6M278.4 941.9h2.2M280.8 948.4h1.3M358.7 941h1.2M383.1 995.3h2.2M489.5 938.9h1.6M395.5 908.2h1.3M407.2 906h1.6M388.1 919.7h1.4M459.7 944.7h2.1M352.8 1005.4h1.7M348.6 950.8h1.7M466.4 897.6h2M332.8 971.8h2.3M332.3 994.1h1.8M494.5 1004h2.4M279.8 927.8h1.9M454.6 958.2h2.3M309.4 905.9h2.3M425.9 962.6h1.3M284.5 893.2h1.2M385.8 945.5h1.6M307.1 899.3h1.8M469.9 917.7h1.5M393.2 981.8h1.6M495.9 915h2M415.3 926.8h1.3M362.2 939.6h1.5M475.5 879.7h1.5M290.4 967.5h1.3M447.5 949.6h1.9M478.2 895.7h2.3M390.8 946.1h2.2M492.3 994.6h1.9M505.8 880.1h1.5M340.6 950.2h1.9M289.8 919.9h2M478.1 883.6h1.4M489.7 955.4h1.9M273 884.4h2.2M413.5 1014.5h1.8M436 901.4h2.1M472.4 993h1.4M431 907h1.5M505.3 1009.2h1.2M470.6 965.5h1.7M406.8 891.1h1.5M382.7 890.3h2M504.9 1014.2h1.7M289 948.9h1.3M483.4 948.5h1.7M472.1 931h2.1M389.7 908.6h2.1M280.9 879h1.6M384.8 964.7h1.9M323.1 905.2h2.2M466.9 937.6h1.5M441.2 904.4h1.3M277.5 878.9h1.6M361.4 905.5h2.2M431.3 981.3h1.4M488.4 876.5h1.2M272.7 954.4h1.7M313 999.1h1.3M284.4 1006h1.4M348.1 920h1.9M274.3 954.8h1.7M285 960.1h1.6M342 919.2h2.1M293.6 892.5h1.6M452.5 884.4h2.4M408 980.7h1.8M366.4 890.4h1.5M313.2 963.1h1.8M280.3 877.1h1.3M481.5 967.1h2.4M432.6 916.9h2M505.5 970.4h1.6M447.2 944.8h1.3M485.5 974h1.2M415.6 909.7h2.3M442.9 977.4h2.1M420.6 976.4h1.7M459.6 893.5h2.4M451.6 996.6h2.3M367 1009.6h1.9M389.5 990.6h1.6M459.7 936.6h2.2M434.1 949.3h2.2M332.9 1014.3h1.6M409.5 902.4h1.8M428.7 1002.2h1.8M376.1 1005.9h1.9M433.4 926.9h1.6M324.5 991h2.4M303.3 918.6h1.4M291.5 916.7h1.5M453.2 955.1h2.3M458.4 891.9h1.7M360.7 980.9h1.6M292.8 944.7h1.4M283.3 965.1h2M408.9 955.3h1.5M498.6 920.1h1.7M498.8 976.4h1.3M448.7 1002.9h1.4M293.5 999.5h1.3M319.6 924.8h1.3M301.1 1002.9h1.7M289.7 922h2.2M313.2 909.6h1.5M408.2 974.4h1.7M458.3 988.2h1.3M439.2 945.8h2.2M336.9 882.4h2.3M430.5 909.4h2.1M395.1 907.3h1.4M361 979.7h2M362.7 1012h2.3M466.8 952.4h2.4M503.3 889.1h2.3M434 940.5h1.6M416.1 977.6h2M416.4 886.9h1.7M411.2 923.7h2.2M480.8 1009.3h1.3M412.6 1006.5h1.6M331.9 966.9h1.3M395.7 898.1h1.4M454.6 966.1h2M488.3 895.6h2.2M327 926.1h2.4M275.4 973.1h1.2M394.1 1007.9h1.9M439.7 989.6h1.3M397.8 927.3h1.5M469.4 1003.3h2.2M348.6 944h2.3M388.3 1013.1h1.9M317.3 931.8h2.1M280.5 986.7h2.2M466.8 938.9h1.3M443.8 885.9h1.8M278.2 876h1.5M422.3 981.3h1.9M271.9 909.3h2.1M377.6 930.2h2.1M393.7 1013.6h1.3M403.1 921.3h1.2M441.5 958.5h2M279.3 980.5h2.4M375 880.2h1.5M424.7 978h1.6M383.4 933.7h2.3M451.5 1008.5h2.3M375.2 886.8h1.3M294.8 890.7h2M319.7 963.1h1.4M473.9 880.9h2M458.9 995.8h1.9M447.8 933.8h1.3M398.2 941.7h2.2M465.2 973.4h1.3M498.6 922.7h2.4M493.3 979.6h1.5M314.8 989.5h1.6M442 1014.2h1.6M496.5 942h2.4M387.8 965.3h1.2M371.8 949.7h1.7M292.5 965.2h2.2M489.4 890h1.9M416 991.2h1.3M339.6 969.9h1.3M365.2 966.5h2.3M402.5 941.9h2.2M351.6 939.7h1.3M277.8 897.4h1.6M382.2 890.9h1.9M298.8 906h2M406.9 932.1h1.7M422.9 888.4h1.9M429.3 911.3h1.8M345.8 1011.6h1.8M285.2 929.4h1.7M274.5 903h2.2M413.6 941.8h1.7M482.9 897.4h1.7M445.2 953.8h2.3M469.8 994.7h2.2M474 904h1.8M408.6 1000.4h2.1M277.6 953.8h2.4M332.6 916.1h2.3M326.5 898.1h1.5M378.4 938.9h1.8M277.6 983h1.7M350.4 887.7h1.6M439.4 964.5h2.3M468 1004.8h1.8M330.2 875h1.4M398 992.3h1.4M444.7 949.9h2M426.8 924.1h1.4M411 939h2M368.5 875.7h1.2M396.6 945.8h1.9M337.7 944h1.9M301.9 1003.9h1.8M449.7 877.7h1.9M419.3 964.7h2M503.8 923.1h1.7M438.8 878.6h1.9M363.9 1006.2h2M486.2 885.6h1.6M344.8 901.7h2.4M488.5 919h1.9M352.7 982.6h2.1M453.3 995.8h1.8M402.4 910.3h1.7M500.8 949.8h1.7M342.9 910.9h1.7M287.5 983.4h1.3M396.6 976.6h1.7M294.7 952.2h2.2M305.8 938.5h2.1M358.9 880.4h1.8M312 930.6h2.1M291.5 876.3h1.9M281.1 978.3h2M394.4 972.8h2M374.6 915.8h1.3M457.8 912.2h2.3M312.9 941.2h2.3M360.4 955.5h1.8M342.2 913.1h1.8M288.3 882.2h1.3M462.2 961.4h1.9M502.6 945.4h1.4M353.8 987.8h1.9M308.7 940.6h2.2M429.9 912.8h1.3M425.4 917.1h2.1M405.8 882.7h1.5M325.6 991.7h2M451 993.2h1.8M362.8 905.8h1.6M313.4 977.8h2.2M319 876.8h2.3M282.8 924h1.3M488.9 895.2h1.3M296 965.5h2.3M361.3 990.9h2.3M312 967.6h1.9M500.1 883.3h2.4M287.1 903.9h2.4M410.6 942.7h2.3M467.1 1006.9h1.2M334.5 957.1h1.7M341.9 928.2h1.8M474.7 903h1.2M451.4 913.7h1.4M301.1 972.1h2.1M356 937.5h1.2M483.9 908.7h1.9M334.5 1006.6h2.3M487.3 934.3h1.3M447.3 904.1h2.1M349 939.8h2.1M484.7 912.4h1.3M396.9 979.5h1.6M363.1 980.5h2.3M404.1 941.5h1.7M302.4 940.7h1.4M354.3 959.8h1.3M358.3 1008.5h1.3M415.7 924h1.3M474.4 977.9h1.6M425.5 952.8h2M387 976.7h2M382.8 914.2h2.2M421.2 913.5h2.1M505.6 968.4h1.4M413.6 876.6h2.2M303.5 977.7h2.3M322.2 914.9h2.1M330.6 982.4h1.8M442.3 979.3h2.2M350.9 999h1.8M294.6 983.6h2M429.9 896.9h2.4M272 935.9h1.3M351.7 994.3h1.5M372.9 997.5h2.2M350.4 952.9h1.3M433.7 985.9h1.8M275.1 997.7h2.3M450.8 911.8h2M459.2 928.8h1.9M341.3 994.7h2M451 915.4h1.2M384.4 949.5h1.5M462.5 900.8h1.5M455.9 983.7h1.8M299.4 948.6h1.6M322.7 884.9h1.9M291.2 906.7h1.3M414.2 1005h1.8M294.3 965.9h1.8M460.6 960.7h2.2M371.4 982.2h1.3M275.9 977.5h2.4M313.7 1006.7h2M453.3 975.6h2.1M306.3 988.5h1.7M492.5 1008.9h1.9M441.7 980h1.7M480.4 905h2.2M347.6 943h2.3M503.9 979h1.9M285.7 888.5h1.9M397.5 902.7h1.3M302.1 1007.7h2.1M432.2 989h2.2M473.1 922.1h2.3M409.6 962.4h1.8M317.4 919.4h2.4M384.1 937.6h1.2M418.3 898.3h1.3M402.5 957.9h1.5M302.4 985.5h2.1M345 898.5h1.8M380.1 903.3h1.4M480 928.5h1.9M448 952.5h2.1M459.2 947.4h2.2M463.4 934.3h1.5M479.4 959.3h1.7M463.1 1012.9h1.3M422.5 988.5h1.7M433.1 883h1.6M307.1 926.2h2.1M430.5 996.5h1.8M429.6 889.1h1.7M361 990.3h2.1M500 977.8h2.2M318.9 911.9h2.1M337.6 1000.7h1.8M369 906.5h2.2M310.2 944.3h2.4M415.6 1013.6h1.6M367.2 999h2.1M301.8 935.1h2M390.6 904.3h1.2M347.2 920.8h1.2M367.8 957h2.3M295 978.1h1.6M408 991.7h1.9M407.7 967.1h2.1M482.3 983.5h2.4M277.8 1004h1.3M306.8 937.1h1.4M307.6 1007.9h2.2M490.6 1003.7h2M502.4 945.3h1.3M422.4 972h1.5M334.1 878.3h1.7M470.1 927.7h1.3M357.2 928.3h1.5M458.5 993.1h1.2M456.5 998.4h2.2M442.4 908.2h2.2M362.7 996.9h2.1M417.6 987.8h2M299.1 911.5h1.8M448.5 882.4h2.3M445.1 878h2.2M336.1 883.7h1.5M501.8 961.9h2.1M479 948h1.5M408.5 995.7h2M454.9 891.4h2M309.4 959h2.2M356.6 897.3h2M337.9 946.2h2M501.1 948.5h2M449.4 987.9h2M298.6 953.9h1.7M469.2 958.5h2.2M499.8 946.1h1.6M475.4 1001.1h2.1M315.9 950.2h2.3M474.7 982.7h2.2M503.5 886.3h1.6M341.2 930.3h1.2M334.2 958.6h1.6M306.4 880.8h2M359.2 935.9h2M351.2 882.3h2.2M324.5 909.3h1.9M448.8 898.2h1.3M470.8 875.8h1.9M457 1002.9h1.2M309.5 895.5h2M371 928.7h1.7M301.7 1014.9h1.6M321.4 910.7h1.5M500.7 884.4h1.4M295.7 917.5h2.1M315.3 939.7h1.5M288 896.7h1.9M410 978.2h2.3M472.2 928.9h1.8M331.6 981.6h2.2M317.3 961.9h1.7M421 966.2h1.9M496 902.8h1.4M352.8 887.5h1.8M477.8 918.6h1.5M420.1 963.1h1.3M461.9 955.3h1.6M351 924.9h1.8M394.7 903.4h1.6M306.3 972.6h1.8M434.2 1005.9h1.7M458.5 1005h1.4M426.2 942.9h1.9M414 934.4h1.8M440.7 878.5h1.2M341.2 1000h2.1M410.7 1000h1.7M413.8 1012h2.3M447.7 930.9h1.5M491.3 994.4h1.6M366.5 932.2h1.4M352.9 889.6h2.4M278.2 900h2.2M457.2 880.6h1.9M505.9 999.8h1.3M287.6 998.2h2.3M373.2 984.1h1.3M361.7 948.6h1.5M431 976.7h1.4M290.9 1005.4h1.9M341 1004h2.2M317 931.8h1.3M346.5 947h2.1M293.9 888.5h2.3M291.7 973.8h2M357.1 1012.9h2.1M302 960.5h1.9M501.8 1001.5h2.2M453.8 940.6h1.8M272.7 1005.8h2.2M387.9 1003.8h2.1M428.2 879.9h1.7M301.7 918h2.2M271.6 966.1h2.3M466.7 924.7h1.7M504.2 970.2h1.7M302.4 936h1.2M321 996.8h1.3M394.5 877.3h2M470.7 993h2.1M505.3 995.6h2.2M498.8 903.7h1.4M438.1 883h2.4M433.5 1010.5h1.5M331.6 882.4h1.4M359.5 935.5h1.9M490 903.5h1.5M292.7 1007.1h1.9M504.4 909.9h2.3M390.4 1005.3h1.7M325.5 977.6h1.3M499.3 911.5h1.4M369.7 936.5h1.7M382.9 935h2.1M325.6 949.6h1.8M334 885.6h2.1M329.2 965.4h1.9M272.3 901.2h1.8M347.4 1009.6h1.5M415.1 969.5h1.7M334.6 938h2M340 936.2h2M274.9 1001.9h2.2M425.9 915.3h2.2M424 960.1h1.9M428.5 971h2M503.5 973.7h1.6M505.9 938.4h1.4M440.8 876.3h1.4M449.3 973.6h1.8M296.9 976.8h2.2M349.3 904.9h1.5M503.3 1013.1h1.3M331.5 886h2.2M505 1012.5h2.3M444.8 895.3h1.3M277.2 887.2h1.3M346.7 940.1h2M475.6 938.9h2.3M275.2 947h2.1M354.7 896.1h1.6M362.8 945.5h1.8M479.6 1000.5h1.6M319 943.8h1.7M484.5 977.7h2.2M313.8 934.8h2.2M431.3 961.5h1.5M470.4 941.4h1.5M393.7 948h1.9M444.9 1000.5h1.5M414.2 880.6h1.5M347 979.6h2.4M326 986.8h1.6M272.7 910.5h1.5M377.2 993.8h1.9M422.9 885.7h1.4M381.1 907.7h1.2M463.5 926.1h2.2M458.1 932.9h1.4M478.9 929.8h1.2M387.3 994.6h2.3M412.6 943.5h2.3M474.8 897.2h1.5M302.2 988.1h2.3M443.1 952.4h1.8M280.9 976.6h2.2M395.4 897.5h2.1M291.8 894.9h1.3M373.2 973.9h1.7M343.9 914.2h1.7M351.7 891.6h1.8M341.8 997.5h2.4M312.2 988.3h1.4M482.5 944.4h2.3M398.7 964.9h1.7M436.8 924.7h2.1M388.1 915.5h1.8M372.2 987.2h1.7M425 969.6h1.9M303.9 884.6h1.5M302 876.5h2.3M395.4 995.8h2.1M287.3 890.4h1.6M297.4 959.9h2.3M462.7 917h2.2M391.4 893.1h1.4M461.6 998.5h1.3M292.3 923.6h1.4M446.6 886.8h1.3M493.3 892.5h2.1M412.5 897.2h2.2M311.5 972h2M290 941.1h1.5M298 986.1h2M383.2 1001.9h1.6M453.8 929h1.6M460 945.9h2.3M389.4 882.5h2.4M328.1 919.1h1.6M335.1 1001.7h1.6M343.9 953.8h1.6M341.3 973.8h2.1M339 933.8h1.9M480.6 998.4h2.3M284.1 883.9h1.8M420.6 886.2h1.3M478.4 884.9h1.7M345.3 958.7h1.4M376.8 947.7h1.6M357.3 959.4h1.9M368.2 966.5h1.4M341.1 952.8h1.6M318.7 991.7h2.3M302 881.2h1.2M394.9 905h1.2M301.2 986.6h2.1M336.6 973.4h1.4M484.6 971.9h2.1M401.7 920.7h1.2M354.6 921h1.3M310.7 934.1h1.3M398.9 992.5h1.6M353.7 932.3h2M336.8 974.9h2.2M374.8 926.9h2.1M384.4 956.8h2.2M429.5 899.8h2M343 878.2h1.8M316 924.1h1.4M362.4 929.5h1.3M345.8 1009.5h2.4M322.2 929.2h1.6M506.8 917.9h2.4M367.3 887.3h1.8M495.5 953.2h1.3M494.6 935.2h2.4M475.1 877.5h1.7M411.3 979.1h2.2M494.3 992.4h1.5M318.9 969h1.7M350.4 995h1.7M476.2 909.3h2.2M494.1 879.9h2M333 937.9h1.8M443.9 995.6h2.2M479.2 975.6h1.7M497.3 922h2.1M306.3 877.7h1.4M379 902.9h1.6M352.1 967.9h1.2M392.6 965.9h2M282.2 994.7h1.4M333.9 1002h1.7M327.1 892.8h1.7M461.1 943.6h1.7M395.3 974.1h2.3M342.3 1008.7h1.3M341.9 910h1.8M473.2 997.7h1.2M365.2 925.3h2.1M310.6 1014.3h1.3M469.2 931.6h1.3M360.7 967.7h2.2M352.9 931h2M384.9 890.3h2M424.3 964.1h1.3M392.5 896.9h1.9M327.1 954.5h2M320.4 983.6h1.6M283.2 947.8h2.2M366.3 911h1.8M386.7 909.3h1.5M393.8 997.3h1.3M351.7 1002h1.2M420.6 963h2.3M461.4 951.7h1.5M335.2 905.6h2.2M274.2 950.2h2.4M330.6 938.5h1.5M322.5 971.6h1.3M334.6 885h1.5M422.4 895.8h1.5M312.3 1001.5h1.3M407.6 968.2h2M402.8 951.7h2.1M335 977.5h2.2M319.3 902.6h2.4M401.8 985.9h2.2M284.6 880.5h1.8M382.2 962.8h1.9M463.2 992.8h2.1M500.1 894.2h2.2M505.1 907.9h1.2M458.4 891.9h1.7M376 877.9h2M434.5 992.3h1.5M426.5 926.2h1.5M498.6 949.8h2M470.4 964.4h1.9M341.4 956.6h1.6M436.1 990.3h1.9M354.4 977.5h1.3M335 878.9h1.3M461.8 897.5h2.3M286.9 1005.7h2.4M466.2 988.8h2.1M384.4 884.5h2.4M357.7 984.1h2.2M479.7 884.9h1.7M371.5 908.3h1.4M494.7 953.8h2.3M505.8 1006.7h1.6M369.4 960.5h2.3M382.7 997.4h2.3M396.7 913.1h1.9M417 953.3h2M288.3 955.9h1.8M408.7 1002.3h2.1M336.5 910.3h2M504.1 953.9h2M362.6 987.1h1.6M381.2 1005.2h1.4M382.6 898.7h1.4M444.4 1008h2M471 934.5h2.3M285.4 906.4h1.7M493.1 972.3h2.2M448.3 945.1h1.9M486.1 987.7h2M502.5 890.3h1.3M317.7 892h2.4M480 977.7h2.1M449.4 894.7h1.8M487.2 901h1.8M460.8 913.9h1.4M446.8 922.3h2.1M392 963.3h2M404.7 934.3h1.8M296.8 924.1h2.1M490.7 929h2.2M334.5 928.4h2M469.5 899.8h1.8M362.3 1005.8h1.9M489.5 941.1h2.4M421.3 968.2h1.8M402.5 993.7h1.5M427.9 979.1h1.9M429.9 942.7h1.8M472.7 915h2.4M285.3 939.7h1.8M389 1007.7h1.7M404.8 901.4h2.2M398.7 880.7h1.9M400.8 940h2.4M344.1 1012.2h1.7M304.8 923.3h2.2M305.9 909.7h1.7M484.9 986.2h1.7M334.2 1006.4h1.5M465.6 909h1.4M442.3 931.3h2.1M299.1 991.5h2.4M344.2 891.8h2.1M366.5 989.5h1.7M292 950.9h1.3M448.4 989.4h2.2M474.2 893.7h2M383.8 906.3h1.3M369.6 888.9h1.5M452.8 943.8h1.5M349.3 960.8h1.5M282.9 1011.4h2.3M347.6 901.6h1.3M399.8 977.2h2.4M469.6 915.9h1.9M404.5 981.1h1.4M371.8 989.1h1.4M285.3 1008h1.8M344.7 998.4h2.3M405.4 950.1h1.9M283.9 1000.5h2M318.7 980.5h1.5M283.5 958h1.4M407.6 966.3h2.4M432.2 915.5h1.4M332.9 997.2h2.3M494.1 996.2h2.2M326.8 997.2h2M372.2 971h1.6M411.3 906.9h1.5M338.1 1000.9h1.5M439.8 962h2.1M274.5 954.2h2.4M469 878.7h1.9M387.6 982.2h2M446.1 996.6h2.2M492.4 959.8h2.3M480.9 906.2h1.7M276.4 975.7h1.7M492.1 950.7h1.9M432.2 947.3h1.6M437.7 1013.9h2M420.4 963.7h1.3M304 940.6h2M473 950.5h1.5M406.8 895.7h1.3M463.1 939.8h1.8M364.3 1006.6h2.1M362.9 1014.3h2.3M455.9 959.1h1.8M280.7 941.2h1.3M464.2 984.4h1.6M331.8 994.4h2.1M444.9 888.3h1.8M451.9 919h1.8M502.4 993h1.7M446.9 963.5h1.6M484.1 940.9h1.6M316.4 994.9h1.4M487.9 890.9h1.4M328.1 932.5h1.5M433.5 944.8h1.4M326.2 942.5h1.4M386.3 968.1h1.2M298.2 991.4h2.1M453 913.3h1.6M460.6 985.8h2M299.5 977.6h2.4M302.6 897.7h1.2M397.4 913.1h1.7M271.2 877.6h1.8M395.9 909.9h1.5M455.9 971.5h1.9M397.8 915.6h2.1M335.1 924.9h1.9M417.8 927.5h2.1M467.8 962.7h1.6M452.9 930.6h1.4M273.3 917.4h1.2M437.8 962h1.8M486.4 967.7h1.7M313.5 880.9h1.9M482 1013.8h2.3M318.8 888.1h1.3M360.8 952.4h1.8M308.6 913.3h2.2M301.7 991.1h1.6M307.8 1003.6h2.2M483.7 1002h1.5M383.8 921.2h2.1M368.8 915.9h1.2M456.9 875.5h1.8M355.7 986.5h1.6M473.9 1000.5h1.2M474 950.9h1.7M318.2 911h1.2M299.2 1002.2h1.5M481 950h1.8M302.8 967.2h1.9M351.2 942.7h1.2M419.9 1001.3h1.4M300.5 929.1h2M444.6 1004.8h1.5M444.9 898.5h1.6M394.5 953h1.7M360.4 908.2h1.5M346.3 892.8h1.7M289.7 962.9h2M376.1 978.2h2.2M453.8 986.5h1.6M321.8 1007.3h2.1M450.8 964.6h1.5M279.4 1001.2h1.5M505.3 937.9h1.7M287.1 897.1h2.1M490.3 964.1h1.6M342.4 926.3h2.1M469.5 893.3h1.8M453.3 909h1.9M271.7 883.4h2.3M465.6 877.3h1.7M502.8 922.5h2.2M490 983.1h1.8M318.3 1013h2.2M304.9 980.9h1.3M307.7 1009.4h2.3M285 915.8h1.4M460.1 993.7h1.9M351.4 877.4h1.4M435.6 905.2h1.4M490.9 1009.6h2.2M389.6 976.2h1.6M476.9 901.3h1.9M448.5 896.9h1.5M302.2 924.7h2M354.3 997.1h2.4M466.1 935.1h1.3M451 948.4h1.9M411 1008.8h2.2M482.9 980.4h1.7M444.8 910.1h2M316.7 1013h1.9M405 901.4h1.5M469.8 920.3h1.4M320.6 951.8h1.5M499.2 961.2h1.6M352.8 930.9h2.2M318.9 918.8h1.5M465.5 998.3h1.4M392.3 956h2.1M501.7 881.5h1.6M451.3 922.2h1.4M472.7 938h1.4M348.5 927.2h1.4M401.9 876.3h1.4M506.7 954.2h1.6M472.9 929.5h2.1M352.8 1011.6h1.9M341.8 970.8h2M390.7 998.7h2.4M494.8 1014.2h2.2M298.7 877.9h1.8M306.5 938.2h2.3M491.2 964.7h1.4M288.8 888.6h2.4M286.8 912.3h2.1M430.6 1012.7h2.1M465.6 949.3h2.1M382.8 882.3h2.2M287.8 895.3h1.7M340.9 1004.8h1.7M438.1 925.5h1.4M346.1 1001.3h2M382.2 954.8h1.4M349.9 955.9h2M300 1011.1h1.4M319.7 945.7h1.4M505.4 928.9h1.6M402.9 990.8h1.9M407.3 952.1h1.4M304.2 944.1h1.7M452.4 913.3h1.8M404.1 1010.2h1.8M444.7 998.9h2.1M416.5 950.3h1.2M466.3 991.4h1.7M342.1 993h2.1M350.1 971.6h2.3M474.2 961h1.4M319.7 996.2h2.1M311.7 923.6h1.8M284.1 903.5h2.1M420.7 934.2h2.1M388.2 893.4h2.2M373.2 948.1h1.8M453.1 1005.5h1.2M428.6 950.7h2M478 903.7h2.3M433.4 985.5h2.3M446.9 993.6h2.3M432.9 1009.2h2.1M468.6 946.5h1.7M352 1000.7h1.9M480 887.2h2.2M430.1 969.3h2.1M324.8 971.7h2.3M447 1008.1h1.7M410.4 911h1.7M325 912.9h1.7M313.8 977.9h1.2M465.5 897.5h2.1M467.5 1010.5h1.9M339.4 925.3h2.3M297.2 899h1.3M436.6 943.7h2.4M359.1 972.3h1.5M492.6 941.4h2.3M456.4 953.5h1.3M425.1 894.1h1.9M463.2 882.4h2.3M392.8 914.9h2M377.8 883.3h2M506.4 1008.6h1.8M292 961.9h1.3M284.9 976.2h2.1M323.9 949.2h2.4M448.3 891.8h1.8M451.8 893.8h1.7M271.2 956.4h1.9M335.9 912.7h2.1M375.3 1014.2h2.1M272.7 1007.7h1.7M360.6 983.6h2M465.7 946.4h2.3M503.5 926.4h1.8M296.2 884.7h1.3M385.9 975.2h1.4M436.6 897.5h2.2M413.7 876.1h2.4M411.9 892.7h1.2M390.4 966.4h2.3M291.6 1008.7h1.6M400.4 932.1h2.2M410.7 974.3h2.4M431.6 922.7h1.9M332.8 957.5h1.4M441.1 980.5h1.9M498 926.1h2.2M309.3 945h1.6M304.6 944.3h1.4M426.1 888.2h1.4M364.3 955.5h1.9M315.2 1012.4h1.7M417.4 979.6h1.7M443.8 905.7h1.6M477.2 932.6h2.4M397.9 950.1h1.9M451.6 962.4h1.2M390.8 988.1h2.1M284.8 886.5h2.2M351.3 972.4h2.2M309.4 889.8h1.6M503.7 938h1.6M303.7 981.7h2.3M278.5 967.5h1.2M471.1 896.3h1.9M321 943.8h2M320.3 984.2h1.9M309.2 960.8h2.2M488.3 886.5h2.1M406.9 1010.7h2M443.6 975.6h1.6M353.4 960.8h1.2M361 886.8h2M319.8 968.8h1.5M429.6 914.8h2.2M445.9 916.9h1.5M275.2 956.9h1.6M340.9 961.8h1.7M409.9 991.2h2.4M506.6 987.7h1.8M302.5 942.5h2.1M378.2 977.4h2.3M489.6 887.7h1.8M484 875.8h1.2M415.2 948.8h1.5M393.6 923.8h2.1M350.5 992.4h1.5M301.2 942.8h1.5M486.6 918.2h2.2M385.2 906.6h1.9M442 940.4h2M430.5 932.1h1.9M415.1 882.9h2.3M363 879.4h1.6M387.2 969.9h1.4M328.8 908h2.3M388.6 974.5h1.5M353.5 912h2M419.9 936.7h1.3M410.2 925.4h1.6M377.4 952.8h1.3M319.4 930.1h1.4M375.9 929.2h2.2M315.8 955.2h1.4M460.2 985h1.7M417.5 1010.3h1.7M299.3 929.4h1.8M328.7 963.5h2.3M296 942.1h1.5M388.4 927.8h1.4M475.3 944.5h2M371.7 906.7h1.7M303.1 969.1h1.9M470.7 884.9h1.9M430.8 925.6h2.4M380.3 1012.7h2.1M448.3 930.3h2M324.5 974.3h2M377.6 942.5h1.7M275.3 1012.2h1.7M478.3 928.6h1.6M445 953.5h1.7M476.5 970.6h2.3M305.7 966.2h1.9M327.1 979.1h2M420.8 951.7h1.8M299.9 963.5h1.3M480.8 992.1h1.8M411.4 959.8h2.2M463.1 920h2M299.4 988h1.7M442.6 890.8h2.2M318 886.4h1.5M406.8 1013.2h1.7M344.6 981.6h1.5M314.2 887.7h2M466.3 898.1h2.3M363 981.4h1.9M298.7 925.1h1.6M323 1001h1.5M401.8 984.6h2.2M442.2 960.1h1.4M337.9 1003.2h1.9M506 965h1.6M372.9 949.4h1.7M436.3 992.6h1.3M413.4 960.8h2.1M300 909.3h2.3M344.2 999.1h2M347.4 1014h2.3M407.7 893.1h1.4M298.6 886.7h1.3M332.9 902.5h1.9M336.2 998.7h1.5M427.5 983.3h2.3M497.5 898.9h1.3M472.5 985.7h1.6M307.6 966.7h1.6M374.8 922.6h1.6M369.2 986h1.9M449.7 946.1h2M492.7 906.8h1.8M351.6 993.1h1.5M455.4 964h1.5M402.6 999.3h1.5M506.4 1010.6h1.3M463.7 902.4h2.1M403.8 1009.5h1.8M281.5 963h2M488.2 1012.3h1.7M454.8 882.3h1.9M365.3 891h1.9M417 1012.7h2.3M392.8 990.8h1.8M315.5 893.9h1.4M401.6 919.5h1.3M383 988.9h1.8M327.8 980.9h1.3M312.6 1014.1h2M279.5 996.9h1.7M404.6 907.8h2M377 889.2h1.9M294.9 998.9h2.3M333.5 1000.3h1.9M404.7 994.5h1.5M489.3 927.8h1.3M435.2 904.8h1.7M361.2 958.4h1.3M451.9 916.9h1.8M419.4 904.4h1.6M429 895.1h1.6M487.4 946.9h2.1M320.9 920.4h1.8M396 904.1h1.5M400.1 910.4h2.3M472.1 975.3h1.5M363.9 976.4h2M393.3 883.2h1.9" fill="none" stroke="#000" stroke-width="1.5"/></g>
<path d="M271 876L506.5 875L507 1015L438 1015L438 944L271 944Z" fill="none" stroke="#000" stroke-width="2.8"/>
<clipPath id="ch2"><path d="M255.5 892.5h15.5v38.5h-15.5Z"/></clipPath>
<path d="M255.5 892.5h15.5v38.5h-15.5Z" fill="#fff"/>
<g clip-path="url(#ch2)"><path d="M212 891L252.2 932M217.8 891L258 932M224.2 891L266.3 932M231.5 891L272.6 932M238.7 891L280.6 932M245.7 891L287.5 932M252.2 891L293.8 932M259.5 891L299.8 932M265.4 891L306.5 932M271.9 891L313.2 932M251 891L210.5 932M256.8 891L214.7 932M262.5 891L221.4 932M268.7 891L227.8 932M275.5 891L234.1 932M281.8 891L241.9 932M288.8 891L248.6 932M294.9 891L254.4 932M300.9 891L260.9 932M307.2 891L265.6 932M313 891L272.7 932" fill="none" stroke="#000" stroke-width="1.3"/><path d="M270.7 904.4h1.9M264.7 916.5h2.1M256.8 924.6h1.3M259.6 899.4h2.1M264.6 909.2h2.2M257.4 896.1h1.9M257.6 925.4h2.3M266.3 894.9h1.7M256.1 920.9h1.6M256.7 924.3h2.2M260.5 895.4h1.2M260.5 895.8h1.5M263 922.2h1.5M257.4 897.8h2.1M264.4 922h2.2M259 912.4h1.6M262.2 929.3h2.2M266.5 923.9h2.1M262.9 909.9h1.5M262.2 897.6h2.4M258 921.2h2.2M256.6 899.9h2.2M255.2 896.7h2.4M256.8 921.5h1.8M270.7 918.9h1.5M267.3 898.3h1.7" fill="none" stroke="#000" stroke-width="1.5"/></g>
<path d="M255.5 892.5h15.5v38.5h-15.5Z" fill="none" stroke="#000" stroke-width="2"/>
<clipPath id="ch3"><path d="M321 944h70.5v21h-70.5Z"/></clipPath>
<path d="M321 944h70.5v21h-70.5Z" fill="#fff"/>
<g clip-path="url(#ch3)"><path d="M296 943L319 966M303.1 943L326.5 966M310 943L333.4 966M315.7 943L338.4 966M322.7 943L346 966M329.6 943L353.5 966M335.7 943L358 966M341.6 943L365.5 966M348.2 943L372 966M355 943L378 966M360.8 943L384.3 966M368 943L391.3 966M374.2 943L398 966M380.8 943L404.1 966M387.2 943L411.1 966M393.3 943L415.8 966M317 943L294 966M323.3 943L301.4 966M330.2 943L308.1 966M336.2 943L312 966M343 943L321 966M349.7 943L327.7 966M355.5 943L332.7 966M362.2 943L339.4 966M369.2 943L346.7 966M376.1 943L353.3 966M382.3 943L360.4 966M388.6 943L364.5 966M395.3 943L371.5 966M401.8 943L379.2 966M407.8 943L385.7 966M413.9 943L391.1 966" fill="none" stroke="#000" stroke-width="1.3"/><path d="M386.7 950.7h2M389.5 953.4h1.5M336.4 963h2.2M349.8 952.9h1.7M347.6 952.5h2.1M365.8 949.3h2M336.9 951.8h2M382.5 954.5h2.3M328.9 963.6h2.3M322.9 964.1h1.9M331.9 944.7h1.6M356.3 955.7h2.1M324.4 954.4h2.4M378.9 946.8h1.7M342.6 964.1h2.1M381.7 952.5h2M358.3 956.1h1.5M353.1 951.6h2.2M342.3 963.7h1.3M360.9 947.5h1.4M379.5 964.8h1.5M322 947.3h1.3M337 960.3h1.7M379.8 952.1h2M370.9 962.9h2.3M347.6 963.1h2.3M365.8 958.3h1.9M362.1 948.3h2.1M330.2 957.7h2.3M390.5 962.5h1.6M328.2 963.1h1.8M366.3 963.1h1.9M375.7 952.3h2M348.2 950.4h2.1M362.2 949.7h1.8M364.9 959.3h1.2M366.2 956.3h1.3M347.7 956.3h2.2M351.3 953.1h2.2M328.8 964.6h2.1M324.8 954.2h1.2M335.6 954.5h1.7M342.5 953.3h1.3M321.2 954.8h1.9M339.7 952.2h2.4M322.1 954.2h2.3M344.5 961.7h1.4M353.8 956.5h1.7M385.6 951.7h1.6M347.5 955.5h1.4M337.7 949.1h2.3M375.6 947.9h2.1M354.1 952.6h2.1M382.1 952.9h1.3M321.9 962.7h2M330.7 944h1.6M331.7 950.7h1.2M340.8 955.8h1.9M378.4 959.3h2.3M345 964.6h1.6M383.9 948.6h2.2M381.2 961.8h2" fill="none" stroke="#000" stroke-width="1.5"/></g>
<path d="M321 944h70.5v21h-70.5Z" fill="none" stroke="#000" stroke-width="2"/>
<rect x="247.5" y="898.5" width="8" height="24" fill="#fff" stroke="#000" stroke-width="1.7"/>
<path d="M340 966l1 5.5l28 -0.5l1 -5" fill="#fff" stroke="#000" stroke-width="1.4"/>
<path d="M457 1016l1 6l27 -0.5l1 -5.5" fill="#fff" stroke="#000" stroke-width="1.3"/>
<path d="M272 906H460M354.6 906V965M355 906L391 944M475 940V1014M482 923L506 900" fill="none" stroke="#000" stroke-width="1.6"/>
<path d="M352 903l10 10l-8 -2Z" fill="#000"/>
<rect x="460.5" y="898" width="21.5" height="25" fill="#fff" stroke="#000" stroke-width="1.6" rx="3"/>
<rect x="463.5" y="900.5" width="15.5" height="18" fill="#000"/>
<path d="M467 914h1.5M473 912h1.5" stroke="#fff" stroke-width="1.5"/>
<clipPath id="ch4"><path d="M899.5 852.5h70v136.5h-70Z"/></clipPath>
<path d="M899.5 852.5h70v136.5h-70Z" fill="#fff"/>
<g clip-path="url(#ch4)"><path d="M758 851L898.2 990M766 851L905 990M773.5 851L911.5 990M781.6 851L919.5 990M789.4 851L927.9 990M797.9 851L936.9 990M805.4 851L945 990M813.6 851L953.4 990M821.2 851L959.1 990M828.7 851L968.3 990M837.5 851L975.5 990M844.8 851L982.7 990M852.4 851L992.2 990M860.9 851L999.1 990M868.4 851L1008.3 990M876.2 851L1014.2 990M884 851L1022.5 990M892.6 851L1030.8 990M900.4 851L1040.5 990M908 851L1045.9 990M916.7 851L1055.5 990M924.1 851L1063.5 990M931.9 851L1070.1 990M939.7 851L1079.5 990M948.1 851L1086.4 990M955.6 851L1095 990M963.1 851L1103.2 990M971.6 851L1110.8 990M895 851L755.6 990M902.9 851L763.6 990M910.9 851L773.1 990M918.5 851L779.5 990M926 851L787.7 990M934.7 851L795.3 990M942.8 851L803.9 990M951.5 851L813 990M959.8 851L820.6 990M968.3 851L829 990M976 851L835.9 990M984.5 851L845.1 990M993 851L853.3 990M1001 851L863.1 990M1009.6 851L871.4 990M1018.2 851L879.8 990M1025.7 851L887.5 990M1034.4 851L896.1 990M1043 851L904 990M1050.6 851L911.7 990M1059.5 851L920.2 990M1067.2 851L928.4 990M1075.9 851L937.3 990M1084.4 851L944.3 990M1093.1 851L953.6 990M1101.6 851L963.3 990M1110.1 851L970.2 990" fill="none" stroke="#000" stroke-width="1.4"/><path d="M899.5 969.2h1.4M955.6 907.4h1.4M935.2 977.2h1.7M935.7 967.7h2.4M931.9 916.9h2M928.1 914.8h2M905.8 884.2h1.7M938.5 856.6h1.8M960.8 960.9h1.2M918 985.3h2.3M915.9 903.1h2M920.1 969.8h1.7M943.1 972.3h1.2M931.6 887.7h2M953.2 935h1.2M921.1 859.5h1.2M943.6 951.4h2.3M909.6 987.9h2.3M953.6 961.9h1.7M967 936.1h1.5M914.4 949.9h2.4M950.8 890.9h1.7M931.5 864.2h2M933.3 928.4h2.4M969.5 910.2h1.5M918 858.4h1.7M955.9 914.6h2.4M951.1 864.2h1.7M924.7 911h2.1M927.9 930.2h2.1M950.9 861.8h1.6M904.7 969.9h1.6M899.7 919h2.1M909.7 906.6h1.2M950.6 903.7h1.5M924.1 902.7h2.3M900.9 958.3h1.9M918.2 891.1h2.4M967.7 957.8h1.7M910.3 982h2M899.5 986.6h2.1M952.2 877.6h2M910.6 942.2h2.2M938.4 914.5h1.8M969.9 933.7h1.4M964.8 939.5h1.8M968.3 947.8h2.2M927.5 982.6h2M917.5 955.9h2.3M928 877.4h1.3M927.1 874.2h1.5M965.1 951.1h1.6M966.2 971.3h1.8M945.1 863.1h2.2M920.6 896.7h1.9M964.9 986.3h2.3M961.4 913.7h2.3M902.6 884.2h1.7M929 963.8h1.3M901.5 859.7h1.5M937.7 869.3h1.3M967 956.8h2M917.7 956.8h1.9M951 954.1h1.4M951.5 860.8h2.2M969.1 954.2h1.9M919.7 907.5h1.5M939.9 965.9h1.9M908.9 941.4h2.2M904.8 920.8h2.3M926.1 877.9h1.7M902.5 920.6h2M958.5 916h1.5M963.7 963.6h1.3M933 913.1h1.8M914.1 938.7h1.3M955.4 981.5h1.8M937.1 919.2h1.5M931.5 881.4h1.4M914.4 974.3h1.4M906.5 885.7h2.1M944.4 986.8h1.5M949.1 892.3h2.3M899.5 969.7h2M934.7 936.9h1.3M907.6 949.9h1.5M904.7 911.1h1.9M923.1 894.2h2.4M941.4 927h1.8M929.4 856.7h1.3M931.4 897h1.5M958.2 865.5h1.5M951 962.9h2.4M939.2 879h2.2M915.8 902.4h2.3M925.8 945.2h1.8M908.2 899.1h1.8M925.9 919h1.8M923.4 910h1.3M950 897.5h1.8M918.3 957h2M947.1 900.6h1.4M913 986h1.3M936.9 922.6h1.6M936.9 865.2h2.1M906.2 853.4h1.9M943.4 986.8h2M967.4 960.9h1.7M913.4 910h1.3M911.7 894h1.8M901.4 956.8h1.7M923.4 876.7h1.6M938 917.1h1.8M926.9 918h1.8M969.2 924.6h2M954.8 918.4h1.9M947 942.1h1.2M961.1 936h1.3M940.6 950.2h1.6M939.4 863.6h2.2M926.6 891.7h1.8M926.4 874.7h1.4M930.6 886.7h1.8M934.7 946.3h2.2M910.7 970.4h2.1M929.2 939.7h2.2M906.8 926.6h1.4M902.2 974.2h2.3M906.8 881.2h2.1M956.9 889.7h1.8M935.9 919.6h1.5M966.4 983.4h1.5M967.1 884h1.5M935 886.8h1.5M904 979.4h2.1M967.6 914.8h2.2M952 967h1.4M929.1 933h1.3M921.9 898.9h1.3M928.2 926.3h1.9M934.9 962.7h1.5M956.7 970.3h1.9M914.1 989h2.2M961.7 879.4h1.6M907.3 890.9h1.6M910.8 922.3h2.1M915.7 927.2h1.5M934.6 863.9h2.3M962.4 966.8h1.6M927.5 947.2h1.9M953.6 895h1.6M902.2 903.8h1.2M908.8 975.4h2.4M905.3 914.6h2.2M905 987.2h1.9M945 908.9h2.2M923.3 974.9h1.4M959 878.7h1.5M922.1 911.6h2.1M915.7 883.2h1.5M934.9 871.7h1.7M926.1 959.7h2.1M900.2 859.7h2.4M914.2 948.7h2.2M959.2 957.7h1.2M957.9 912.3h2.3M902.2 988.9h1.3M949.7 897.7h1.6M953.4 973.9h1.9M936.1 860h2.1M907.5 882h1.7M962.6 944.3h1.6M916.5 886.3h2.2M932.3 876.9h1.4M912.8 872.3h2.4M900.5 853.9h1.4M919 946.2h1.7M939.8 893.2h1.7M959.8 962.5h1.8M910.8 922.7h1.5M925.2 882.8h2.2M921.8 982h1.8M954.4 974.4h1.9M931.5 894.3h2.1M901.8 858.6h2.4M939.5 862.6h1.6M905.7 985.2h1.2M936.2 861.3h1.6M925.6 896h2.1M907.4 945.4h1.6M969.5 940.3h1.9M956.2 923h2.1M922.6 979h1.6M965.8 932.8h1.3M904.8 886.2h1.5M908 913.6h1.5M920.4 873.4h2M914.9 899.2h1.2M911.3 876.1h1.6M969.4 914.3h1.9M905.7 909.7h2.3M923.1 926.6h2M904.1 932.8h1.6M908.1 858.3h1.4M946.9 987.6h1.9M940.4 931.5h1.7M950.1 973.2h1.7M914.2 930.3h1.2M930.8 929.7h1.7M904.4 949.5h1.8M945.3 877h1.7M900.2 902.6h1.7M924.3 918.5h2M913 889.8h1.8M907.1 879.8h1.4M959.5 939.6h1.4M935.4 871.2h1.6M962.8 949.8h1.3M957.1 908.4h2M914.3 933.9h2.3M925.8 913h2.3M910.8 973.5h2.3M930.5 922.4h1.5M967.8 975.4h1.8M937.8 920.1h1.3M943.4 865.7h2.3M911 857.1h1.6M901.5 868.1h1.8M935.4 863.9h2.3M922.8 987.7h1.2M925.6 973h1.8M965.6 962.2h1.3M913.6 930.2h1.5M940.9 959.7h1.6M921.1 981.2h2.2M914.5 858h1.6M953.5 963.9h1.6M920.9 876.3h1.5M946.9 950.9h1.8M913 871.6h2.3M905.3 979.4h1.5M936.1 914.3h2.1M961.4 888.5h1.8M938.7 956.8h1.6M913.6 888.7h1.8M960.2 888.6h1.7M915 869.7h1.3M924.2 969.9h1.9M959.6 856.5h2.3M936.3 943.5h1.3M960.6 968.9h2.1M922.6 897.7h1.8M933.5 905h1.4M941.4 921.2h1.8M911.9 951.3h1.9M962.7 883.8h1.6M947.2 873.3h1.8M901.5 869.7h2.3M935.9 859.4h1.3M901.8 902.5h2.2M918 865.7h1.4M951.7 933.9h2.2M947.4 901.1h2M939.9 973.3h2.3M924.2 872.2h2M932.8 942.5h1.6M914.7 963.5h2.1M953.7 948.8h2.2M955.2 882.2h2.1M913.1 859.1h2M910.7 858.6h2.3M935.2 963.6h2.2M899.2 871.6h1.9M965 957.9h1.5M964.8 914.9h1.7M902.3 948.7h1.2M928.4 911.1h1.4M935.1 911.3h2.1M967.3 875.8h1.7M958.3 893.7h1.7M929.8 879.1h1.6M921.4 864.1h1.2M954.7 937.1h2.3M958.4 875.4h1.4M945.9 864.7h1.8M912 913.6h2.4M911.7 931.6h1.5M951.4 875.7h2.3M965.2 879.6h2.4M968.9 872.7h1.9M938 959.7h1.8M923.4 957.8h1.7M916.8 929h1.5M913.7 950.2h1.7M958.8 892.1h1.9M959.4 935.9h1.3M962.4 912.1h1.5M908 867.4h2.1M934.4 965.7h1.4M958.7 945.5h2.3M928.6 914.5h1.4M920.3 889.6h1.9M945.1 876.8h2.1M959.2 962.5h1.4M968.5 978.9h1.3M920.9 914h1.3M937.5 923.3h1.9M964.5 925.4h1.5M914.4 963.8h2M957.3 988.2h2M912.7 858.8h1.9M926.8 916.8h1.7M943.5 958.9h1.5M899.8 966.1h2.1M943.9 852.8h1.7M924.8 854.9h1.8M954.2 889.7h2.3M967.4 985.9h2.1M965.6 923.8h1.9M910.1 893.9h1.5M917.2 958.8h1.6M909.3 981.8h2.2M938.3 866.3h1.3M968 931.6h1.5M899.2 963.4h2M963 898.8h1.2M968.7 856.2h1.7M902.5 984.6h2M921.1 953h1.2M932 983.2h2.3M929.8 912.7h2.2M916 937.8h2M969.1 918.3h1.3M960.6 985.7h1.6M960 911.1h1.5M933.1 909.4h1.4M920.3 890h1.9M930.7 916.2h2.1M963.6 983.6h2.3M904.9 856.4h1.9M963.4 965.4h2M926.7 921.9h1.5M929.9 967.7h1.5M919 963.5h1.6M900.5 925.7h2.1M942.2 903.7h2.3M905.8 855.7h2M917.9 931.4h1.7M962.1 971.5h1.8M949.1 874.2h2.4M968.3 910.1h1.8M954.4 858.6h1.5M903.1 894h2.2M902 951.2h1.3M902.2 943.4h1.7M913.7 948.1h1.9M961.7 937.8h1.4M903.8 869.4h1.3M954.3 888.9h1.6M900.8 929h2M907.4 861.4h1.6M945.5 937.3h1.4M905.4 874.6h2.2M961.4 957.4h2.3M912.7 938.3h2.3M953 977.2h2.3M934.9 951.7h1.6M951 970.3h2.3M909.8 954.5h1.7M914.3 956.3h2.4M960.3 932.7h1.3M969 907.7h1.5M924.9 950.7h1.2M904.2 861.7h1.3M955.1 867.1h2.3M922.1 981.5h1.6M929.8 888h2M905.2 909.2h1.3M965.8 947.6h1.5M945 944.5h2.1M930.1 968.6h2M947.6 972.7h2.1M951 987.6h1.6M906.9 870.7h2.2M924.3 873.6h1.4M902.4 871.7h2.2M914.1 918.9h2M969.9 940.5h1.2M948.8 932.6h1.8M915 905.2h1.7M900.9 974h1.8M954.1 857.7h1.8M938.6 958.9h1.2M909 864.3h2M963.2 935.9h1.2M907 947.2h1.5M955 876.6h1.2M953.1 936.8h1.8M955.8 931.8h1.8M919.7 916.1h1.7M965.4 889.7h2.1M966.9 934.6h1.4M957.9 985.3h1.2M953.1 855.3h1.8M958.9 955.2h1.7" fill="none" stroke="#000" stroke-width="1.5"/></g>
<path d="M899.5 852.5h70v136.5h-70Z" fill="none" stroke="#000" stroke-width="2.3"/>
<clipPath id="ch5"><path d="M887 897.5h12.5v51.5h-12.5Z"/></clipPath>
<path d="M887 897.5h12.5v51.5h-12.5Z" fill="#fff"/>
<g clip-path="url(#ch5)"><path d="M831 896L884.6 950M838 896L891.7 950M844.3 896L897.7 950M850 896L903.1 950M857 896L911.3 950M863.6 896L916.6 950M870.6 896L923.6 950M877.1 896L931.9 950M883 896L936.2 950M888.9 896L943.3 950M895.3 896L950.1 950M902.4 896L956.7 950M883 896L828 950M889.2 896L834.3 950M895.1 896L840.9 950M901.6 896L846.8 950M908.7 896L855.6 950M915.3 896L862.3 950M921.2 896L866.5 950M927.4 896L874.4 950M933.3 896L878.3 950M939.7 896L884.8 950M945.5 896L892 950M951.5 896L898.5 950" fill="none" stroke="#000" stroke-width="1.3"/><path d="M888.9 934.9h1.7M898.1 909.6h2.3M890.2 924.8h1.4M893.9 913.9h2.2M889.4 908.7h1.6M889.3 926.8h1.6M889.1 934.7h1.5M896.6 935.1h1.9M890.9 931.6h2.4M898.6 945.1h1.3M898.5 927.7h1.9M899.2 908.9h1.5M896.1 897.9h2.3M895.4 904.4h2M899.6 916h2.2M893.5 902.7h2.4M889 919.3h1.9M898.5 947.5h1.5M889.6 924.8h1.4M888.2 947.7h1.3M893 920.1h2M893.8 948.9h2.3M890.5 938.8h1.9M889.9 923.5h1.5M895.9 948.6h1.5M891.7 910.1h2.1M893.1 899.1h2.1M887.5 948.6h1.5" fill="none" stroke="#000" stroke-width="1.5"/></g>
<path d="M887 897.5h12.5v51.5h-12.5Z" fill="none" stroke="#000" stroke-width="1.8"/>
<path d="M933 853V962M900 948L934 920M888 900l12 6" fill="none" stroke="#000" stroke-width="1.4"/>
<rect x="926" y="962.5" width="18.5" height="17.5" fill="#000"/>
<rect x="923.5" y="960" width="23.5" height="22" fill="none" stroke="#000" stroke-width="1.2"/>
<path d="M345.8 812.5A4.9 4.9 0 0 1 352.3 807.7A5.1 5.1 0 0 1 356.8 800.5A3.9 3.9 0 0 1 362.4 797.2A5.7 5.7 0 0 1 371.8 796.8A4.4 4.4 0 0 1 377.9 792.8A4.9 4.9 0 0 1 385.9 791.4A4.1 4.1 0 0 1 392.7 791.8A4.1 4.1 0 0 1 399.4 790.6A5.6 5.6 0 0 1 408.8 791.4A4.9 4.9 0 0 1 416.7 793.6A3.2 3.2 0 0 1 421.9 792.6A4.9 4.9 0 0 1 429.7 795.4A9.5 9.5 0 0 1 445.4 795.4A5.2 5.2 0 0 1 454 795A4.1 4.1 0 0 1 460.8 795.6A3.9 3.9 0 0 1 464.9 800.7A5.5 5.5 0 0 1 466.6 809.6A3.6 3.6 0 0 1 467.8 815.4A5.9 5.9 0 0 1 465.9 825A4 4 0 0 1 464.1 831.4A4.8 4.8 0 0 1 459.3 838A4.8 4.8 0 0 1 452.5 842A3.8 3.8 0 0 1 446.4 844A4.1 4.1 0 0 1 440.2 847A5.9 5.9 0 0 1 431 850.2A3.7 3.7 0 0 1 425.8 853.6A9.8 9.8 0 0 1 409.7 855.7A3.8 3.8 0 0 1 403.4 856A4.5 4.5 0 0 1 396 857.1A5.7 5.7 0 0 1 386.5 858A8.4 8.4 0 0 1 372.6 856.1A4.6 4.6 0 0 1 366.2 851.9A5.1 5.1 0 0 1 358.3 848.7A4 4 0 0 1 352.2 846A9.6 9.6 0 0 1 343.5 832.6A5 5 0 0 1 340.2 824.9A3.2 3.2 0 0 1 341 819.7A5.2 5.2 0 0 1 345.8 812.5Z" fill="#fff" stroke="#000" stroke-width="2.3" stroke-linejoin="round"/>
<path d="M401.7 836.7q3 3 5 0l2 -3M405.7 838.6q3 3 5 0l2 -3M385.7 826.9q3 3 5 0l2 -3M402.8 841.8q3 3 5 0l2 -3M365.8 832.2q3 3 5 0l2 -3M388.9 830.4q3 3 5 0l2 -3M391.7 830.7q3 3 5 0l2 -3" fill="none" stroke="#000" stroke-width="1.4"/>
<path d="M317 856a5 6.5 0 1 0 10 0a5 6.5 0 1 0 -10 0" fill="#fff" stroke="#000" stroke-width="1.5"/>
<path d="M316 844a1.6 1.6 0 1 0 3.2 0a1.6 1.6 0 1 0 -3.2 0M322 840a1.6 1.6 0 1 0 3.2 0a1.6 1.6 0 1 0 -3.2 0M320 847a1.3 1.3 0 1 0 2.6 0" fill="none" stroke="#000" stroke-width="1.2"/>
<path d="M541.8 939.1A4.4 4.4 0 0 1 547.2 934.1A2.4 2.4 0 0 1 551.1 934.9A4.9 4.9 0 0 1 559.1 936.7A3.1 3.1 0 0 1 563.4 939.3A4.3 4.3 0 0 1 566.4 945.8A3.2 3.2 0 0 1 566.9 951.1A3.9 3.9 0 0 1 568.7 957.3A7.1 7.1 0 0 1 566.9 968.9A3.6 3.6 0 0 1 564.2 974.2A3.3 3.3 0 0 1 560 977.9A3.5 3.5 0 0 1 554.5 979.6A4.5 4.5 0 0 1 547.8 983.1A2.1 2.1 0 0 1 544.8 981.2A3.9 3.9 0 0 1 541 975.9A4.2 4.2 0 0 1 537.4 969.8A2.9 2.9 0 0 1 536.5 965A8.1 8.1 0 0 1 532.4 952.2A2.7 2.7 0 0 1 533.1 947.8A4.5 4.5 0 0 1 536.8 941.3A3.3 3.3 0 0 1 541.8 939.1Z" fill="#fff" stroke="#000" stroke-width="2.3" stroke-linejoin="round"/>
<path d="M540.6 949.1q3 3 5 0l2 -3M541.4 961.3q3 3 5 0l2 -3M546.2 952.8q3 3 5 0l2 -3" fill="none" stroke="#000" stroke-width="1.4"/>
<path d="M528.7 1012.2A4.4 4.4 0 0 1 535.1 1008.6A3.8 3.8 0 0 1 541 1006A9.1 9.1 0 0 1 556 1007.9A3.5 3.5 0 0 1 560.3 1011.7A4.6 4.6 0 0 1 565.6 1017.3A4.3 4.3 0 0 1 571 1022A8.7 8.7 0 0 1 575.3 1035.9A4 4 0 0 1 577.7 1042.1A4 4 0 0 1 576.7 1048.7A3.5 3.5 0 0 1 577.3 1054.6A8.5 8.5 0 0 1 573.4 1068.1A4.2 4.2 0 0 1 570.5 1074.5A4.5 4.5 0 0 1 569.4 1082A4.4 4.4 0 0 1 564.1 1087.1A9.2 9.2 0 0 1 553.2 1097.9A3.8 3.8 0 0 1 547 1098.9A3.6 3.6 0 0 1 541.3 1100.9A4.7 4.7 0 0 1 533.6 1101.7A8.4 8.4 0 0 1 521.7 1094.4A4.2 4.2 0 0 1 516.1 1090.4A3.9 3.9 0 0 1 513.6 1084.4A4.1 4.1 0 0 1 511.7 1077.9A9.5 9.5 0 0 1 512.4 1062.1A2.9 2.9 0 0 1 512.2 1057.2A4.7 4.7 0 0 1 513.7 1049.6A4.9 4.9 0 0 1 512.3 1041.6A8.9 8.9 0 0 1 517.2 1027.5A4.1 4.1 0 0 1 520.2 1021.4A3.8 3.8 0 0 1 524.5 1016.7A3.7 3.7 0 0 1 528.7 1012.2Z" fill="#fff" stroke="#000" stroke-width="2.3" stroke-linejoin="round"/>
<path d="M537.8 1071.4q3 3 5 0l2 -3M546.7 1053.6q3 3 5 0l2 -3M551.6 1066.9q3 3 5 0l2 -3M524.9 1052.5q3 3 5 0l2 -3M532.6 1077q3 3 5 0l2 -3M527.6 1046.4q3 3 5 0l2 -3" fill="none" stroke="#000" stroke-width="1.4"/>
<g transform="rotate(-33 486 1066)">
<rect x="472" y="1052" width="28" height="28" fill="#fff" stroke="#000" stroke-width="1.6"/>
<rect x="474" y="1054" width="24" height="24" fill="url(#xh2)"/>
<path d="M472 1052l-3 -2M500 1052l2 -3" fill="none" stroke="#000" stroke-width="1.3"/>
</g>
<circle cx="692.8" cy="876.3" r="24.5" fill="#fff" stroke="#000" stroke-width="2.2"/>
<circle cx="692.8" cy="876.3" r="15.5" fill="#fff" stroke="#000" stroke-width="2"/>
<path d="M708 879.4L716.8 881.2M705.2 885.7L712.3 891.1M699.9 890.1L704 898.1M693.2 891.8L693.4 900.8M686.4 890.4L682.7 898.6M680.9 886.3L674 892M677.8 880.1L669.1 882.3M677.6 873.2L668.8 871.4M680.4 866.9L673.3 861.5M685.7 862.5L681.6 854.5M692.4 860.8L692.2 851.8M699.2 862.2L702.9 854M704.7 866.3L711.6 860.6M707.8 872.5L716.5 870.3" fill="none" stroke="#000" stroke-width="1.4"/>
<clipPath id="cw"><circle cx="692.8" cy="876.3" r="14.5"/></clipPath>
<path d="M652.8 895L677.8 858M656.2 895L681.2 858M659.6 895L684.6 858M663 895L688 858M666.4 895L691.4 858M669.8 895L694.8 858M673.2 895L698.2 858M676.6 895L701.6 858M680 895L705 858M683.4 895L708.4 858M686.8 895L711.8 858M690.2 895L715.2 858M693.6 895L718.6 858M697 895L722 858M700.4 895L725.4 858M703.8 895L728.8 858M707.2 895L732.2 858" stroke="#000" stroke-width="1" fill="none" clip-path="url(#cw)"/>
<path d="M747 940q4 -9 12 -9q4 -4 10 -1q8 -1 11 6q-4 -3 -6 1M747 940q8 3 16 1q8 2 14 -2M758 935a4.5 3.5 0 1 0 9 0a4.5 3.5 0 1 0 -9 0" fill="none" stroke="#000" stroke-width="1.2"/>
<path d="M679 975.5q4 -9 12 -9q4 -4 10 -1q8 -1 11 6q-4 -3 -6 1M679 975.5q8 3 16 1q8 2 14 -2M690 970.5a4.5 3.5 0 1 0 9 0a4.5 3.5 0 1 0 -9 0" fill="none" stroke="#000" stroke-width="1.2"/>
<path d="M906.6 762.5A4.1 4.1 0 0 1 912.9 759.9A5.3 5.3 0 0 1 921.7 759.7A7.7 7.7 0 0 1 934 763.4A3.5 3.5 0 0 1 938.4 767.3A4.4 4.4 0 0 1 945.1 770.3A4.2 4.2 0 0 1 951.1 773.8A4.8 4.8 0 0 1 959 774.9A4.4 4.4 0 0 1 966.2 776.7A3.7 3.7 0 0 1 971.7 779.6A4.6 4.6 0 0 1 974.7 786.6A4 4 0 0 1 975.3 793.3A7.9 7.9 0 0 1 973.6 806.4A5.1 5.1 0 0 1 970.2 814.1A4.2 4.2 0 0 1 966.5 820.1A3.9 3.9 0 0 1 961.9 824.6A8 8 0 0 1 950.8 831.9A3.2 3.2 0 0 1 945.9 833.8A4.5 4.5 0 0 1 938.5 833.1A4 4 0 0 1 932.4 830.4A4.4 4.4 0 0 1 925.6 827.9A4.2 4.2 0 0 1 919.6 824.4A4.1 4.1 0 0 1 914.2 820.3A4.6 4.6 0 0 1 909.1 814.5A3.9 3.9 0 0 1 902.9 812.5A9.5 9.5 0 0 1 888 807A3 3 0 0 1 883 805.9A4.5 4.5 0 0 1 875.7 804A4.5 4.5 0 0 1 869.3 800.1A7.7 7.7 0 0 1 875.9 789.1A4.2 4.2 0 0 1 880.2 783.5A4.1 4.1 0 0 1 886.1 780.1A4.7 4.7 0 0 1 891.4 774.4A7.9 7.9 0 0 1 899.7 764.1A4.2 4.2 0 0 1 906.6 762.5Z" fill="#fff" stroke="#000" stroke-width="2.3" stroke-linejoin="round"/>
<path d="M942.5 796.8q3 3 5 0l2 -3M934 786.4q3 3 5 0l2 -3M935.6 792.8q3 3 5 0l2 -3M905.7 816.9q3 3 5 0l2 -3M937.1 790.5q3 3 5 0l2 -3M930.8 797q3 3 5 0l2 -3M923.5 789.5q3 3 5 0l2 -3" fill="none" stroke="#000" stroke-width="1.4"/>
<path d="M896 828l6 2l-2 6l-5 -3ZM902 834l5 4" fill="none" stroke="#000" stroke-width="1.3"/>
<path d="M1000.5 827.2A3.3 3.3 0 0 1 1005.9 828.1A4.7 4.7 0 0 1 1013.2 831.1A8.3 8.3 0 0 1 1023.8 839.9A3.2 3.2 0 0 1 1027.3 843.9A4.4 4.4 0 0 1 1027.6 851.2A4.6 4.6 0 0 1 1025.4 858.6A7.4 7.4 0 0 1 1014.3 864.1A2.9 2.9 0 0 1 1009.5 864.5A4.3 4.3 0 0 1 1003.2 860.9A4.2 4.2 0 0 1 999.6 854.9A4 4 0 0 1 996.6 849A3.8 3.8 0 0 1 992.9 843.9A3.5 3.5 0 0 1 989.5 839.1A3.5 3.5 0 0 1 989.4 833.3A4.8 4.8 0 0 1 995.3 828A3.1 3.1 0 0 1 1000.5 827.2Z" fill="#fff" stroke="#000" stroke-width="2.3" stroke-linejoin="round"/>
<path d="M998.9 853.4q3 3 5 0l2 -3M1009.1 838.8q3 3 5 0l2 -3" fill="none" stroke="#000" stroke-width="1.4"/>
<g transform="rotate(12 918 1019.5)">
<rect x="906" y="1007.5" width="24" height="24" fill="#fff" stroke="#000" stroke-width="1.5"/>
<rect x="907.5" y="1009" width="21" height="21" fill="url(#xh2)"/>
</g>
<rect x="906" y="1041" width="23.5" height="25" fill="#fff" stroke="#000" stroke-width="2.1"/>
<path d="M907 1045h22M908 1049h20M907 1053l22 -1M910 1058h16M907 1062h21" fill="none" stroke="#000" stroke-width="1.4"/>
<rect x="320.5" y="1055" width="48.5" height="75" fill="#fff" stroke="#000" stroke-width="2.6"/>
<path d="M323.4 1060.8h16.6M344.5 1060.5h13.7M362.5 1060.6h4.5M324.5 1067.7h12.1M340.1 1066.9h8.8M352.4 1067.7h14.6M325.3 1073.9h9.9M338.9 1074.4h8.2M351 1073.8h7.2M360.3 1074.5h6.7M325.7 1081.5h15.3M346 1081.7h14.6M324.5 1087.7h13.3M342.4 1087.8h15.7M360.3 1087.8h6.7M325.3 1094.7h8.4M338.1 1094.1h16.4M360.3 1094.7h6.7M325.5 1100.8h11.3M340.8 1101.9h14.7M361 1100.9h6M336.1 1108h12.4M326 1115.3h11.5M339.8 1115.5h11.8M324.1 1121.4h9.1M349.7 1121h7.2M361.4 1121.4h5.6" fill="none" stroke="#000" stroke-width="1.7"/>
<path d="M318 1082v8h3M371 1080v8h-3M318 1127h5v5h-5ZM366 1127h5v5h-5Z" fill="none" stroke="#000" stroke-width="1.3"/>
<path d="M312 1076v14M308 1078v10M376 1076v14M380 1078v10M306 1136q4 6 10 8M312 1132q4 5 9 7M374 1140q5 -3 8 -8M379 1143q4 -3 6 -7" fill="none" stroke="#000" stroke-width="1.0"/>
<path d="M647 1146L647 1246L762.5 1244.5L762.5 1131.5L746 1132.5L730 1134.5L714 1140.5L698 1144.5L675 1145.5Z" fill="#fff"/>
<path d="M647 1146L647 1246L762.5 1244.5L762.5 1131.5" fill="none" stroke="#000" stroke-width="2.5"/>
<path d="M722.4 1136.6h10.3M734.2 1137.5h8.3M671.3 1143h27.3M701.8 1143.1h11.9M717.5 1143.5h20.1M740 1142.5h20M666.7 1148.4h20.4M691 1148.9h28.4M723.2 1148.7h20.7M745.9 1149.1h13.7M653.7 1154.6h29.3M687 1154.4h11.8M702.6 1154.3h29.7M753.5 1155.4h6.5M653.2 1161.1h21.9M676.8 1160.3h9.1M689.8 1160.3h17.2M709.9 1160.1h24M738.2 1160.5h21.8M653 1166.7h26.1M683.2 1167h24.4M710.8 1166.9h7.6M720.9 1166.4h11.6M735.8 1166.7h11.3M751 1167.4h9M652.1 1172.4h20.4M703.1 1172.4h17M722.2 1172.4h10.8M735.3 1172.4h9M746.3 1172.6h13.7M653 1179.7h15.1M683.8 1179h19.5M705.9 1179h8.1M717.2 1178.8h24M744.2 1179.1h7.6M754.1 1179.9h5.9M653.3 1185.6h25.3M681.1 1185.8h23.4M707.5 1185.7h27.4M737.9 1185h15M755.8 1185.2h4.2M663.3 1192.1h19.8M698.6 1191.9h21.8M740.5 1191.1h19.5M651.1 1197.7h11.4M664.6 1197.9h16.2M684.8 1198h23.5M710.7 1197.3h23M737.1 1198.2h13.7M755.1 1198.2h4.9M653.2 1203.6h21.6M699.3 1203.6h26.6M728.3 1203.2h15M747.7 1203.5h12.3M650.1 1209.5h19.6M674 1209.9h11.5M714.3 1209.1h21.9M740 1209.3h20M653.9 1216h10.9M667.1 1215.8h26.5M696.3 1215.7h22.3M723 1215.2h20.5M747.5 1215.6h12.5M652.9 1222.2h28.5M683 1221.5h19.4M706.6 1222.6h26.7M736.5 1222h12.7M752.6 1222.2h7.4M653 1227.5h25.9M682.8 1227.6h12.7M699.5 1228.5h7.9M711.2 1228.2h13.1M727.1 1227.4h21.5M750.9 1228.2h9.1M652.3 1233.8h30M685.5 1234.2h20.8M736.8 1233.6h7M748.3 1233.3h11.7M653 1239.3h28.7M685.5 1239.6h26.6M715 1239h26.1" fill="none" stroke="#000" stroke-width="1.7"/>
<rect x="762.5" y="1199.5" width="95.5" height="45.5" fill="#fff" stroke="#000" stroke-width="2.4"/>
<path d="M768 1203.8v22.9M768 1228.7v13.6M774.4 1203.8v24.6M774.4 1230.7v12.3M780.3 1204v33.7M780.3 1240.3v2.7M785.9 1202.8v30.8M785.9 1236.9v6.1M792.4 1204.3v24.2M792.4 1230.7v12.3M799.2 1203.3v28.6M799.2 1235v8M805.3 1237.1v5.9M817.2 1204.2v13.2M817.2 1220.7v16M817.2 1239.2v3.8M823.6 1203.1v19.2M823.6 1226.3v16.7M830.1 1203.1v31.8M830.1 1237.4v5.6M836.4 1202.9v33.7M836.4 1240.3v2.7M842 1204.9v13.4M842 1222.1v15.3M842 1240v3M848.6 1202.3v29.6M848.6 1235.6v7.4M854.8 1204.1v18.5M854.8 1224.1v18.9" fill="none" stroke="#000" stroke-width="1.8"/>
<ellipse cx="762.5" cy="1199" rx="3" ry="2.2" fill="#fff" stroke="#000" stroke-width="1.6"/>
<ellipse cx="806" cy="1198" rx="3" ry="2.2" fill="#fff" stroke="#000" stroke-width="1.6"/>
<ellipse cx="856" cy="1199" rx="3" ry="2.2" fill="#fff" stroke="#000" stroke-width="1.6"/>
<ellipse cx="647" cy="1246" rx="3" ry="2.2" fill="#fff" stroke="#000" stroke-width="1.6"/>
<ellipse cx="703" cy="1247" rx="3" ry="2.2" fill="#fff" stroke="#000" stroke-width="1.6"/>
<ellipse cx="762" cy="1246" rx="3" ry="2.2" fill="#fff" stroke="#000" stroke-width="1.6"/>
<ellipse cx="806" cy="1246" rx="3" ry="2.2" fill="#fff" stroke="#000" stroke-width="1.6"/>
<ellipse cx="858" cy="1245" rx="3" ry="2.2" fill="#fff" stroke="#000" stroke-width="1.6"/>
<ellipse cx="646" cy="1198" rx="3" ry="2.2" fill="#fff" stroke="#000" stroke-width="1.6"/>
<path d="M640 1252q3 5 7 7M644 1250q3 4 6 6M698 1254q5 5 11 0M757 1253h10M758 1257h8M800 1254h10M802 1258h6M866 1240q5 4 5 10M862 1246q3 3 3 8M804 1184h10M802 1188h14M860 1190q5 3 6 8M636 1190v14M640 1192v10" fill="none" stroke="#000" stroke-width="1.0"/>
<path d="M241 1012L243 1012.1L245.8 1012.2L249 1012.4L252 1013L254.7 1013.9L257.4 1015.1L260.1 1016.4L263 1018L266.1 1019.8L269.4 1021.7L272.7 1023.8L276 1026L279.2 1028.3L282.4 1030.7L285.6 1033.2L289 1035.5L292.6 1037.8L296.4 1040L300.2 1042.1L304 1044L307.4 1045.8L310.5 1047.4L314 1048.8L318.5 1050L324.3 1050.7L331.2 1051.1L338.3 1051.4L345 1052L351.2 1053L357.3 1054.1L363.3 1055.4L369 1056.7L374.7 1057.9L380.4 1059.1L385.6 1060.5L390 1062L393.3 1063.8L395.8 1065.8L397.8 1067.9L400 1070L402 1072.1L403.8 1074.2L405.8 1076.2L408.7 1078L412.8 1079.5L417.6 1080.8L422.8 1081.9L428 1083L433.1 1083.7L438.2 1084.2L443.4 1085L448.5 1086.5L453.4 1089.1L458.3 1092.5L463.1 1096.2L468 1100L472.8 1103.9L477.6 1108.2L482.6 1112.2L488 1115.7L494.1 1118.3L500.6 1120.5L507.3 1122.3L514 1124L520.7 1125.7L527.4 1127.3L534.2 1128.7L541 1130L547.8 1131.2L554.6 1132.2L561.3 1133.1L568 1134L574.6 1134.8L581.1 1135.5L587.5 1136.2L594 1137L600.5 1137.9L606.9 1138.9L613.4 1139.9L620 1141L626.7 1142.3L633.4 1143.8L640.2 1145.1L647 1146L654 1146.3L661.2 1146.1L668.3 1145.8L675 1145.5L681.3 1145.4L687.2 1145.2L692.9 1145L698 1144.5L702.5 1143.8L706.4 1142.8L710.2 1141.7L714 1140.5L718 1139L722 1137.4L726 1135.8L730 1134.5L734 1133.7L738 1133.2L742 1132.8L746 1132.5L749.8 1132.4L753.4 1132.5L757.4 1132.3L762.5 1131.5L768.9 1129.6L776.4 1127L784.3 1124.3L792 1122L799.5 1120.2L807.1 1118.7L814.6 1117.5L822 1117L829.2 1117.3L836.3 1118.4L843.3 1119.7L850 1121L856.4 1122.2L862.6 1123.5L868.7 1124.8L875 1126L881.5 1127L888.2 1128L895 1128.8L901.8 1129.5L908.8 1130.1L916 1130.5L923.2 1130.8L930 1131L936.4 1131L942.6 1131L948.7 1130.7L954.8 1130L961.1 1128.9L967.5 1127.5L973.9 1125.8L980 1124L986 1122.1L992 1120L997.7 1117.8L1002.6 1115.7L1006.6 1113.7L1009.9 1111.8L1012.9 1109.9L1016 1108L1019.2 1106L1022.4 1104L1025.6 1101.9L1029 1100L1032.6 1098.1L1036.4 1096.2L1040.2 1094.5L1044 1093L1048.1 1091.7L1052.4 1090.6L1056.3 1089.6L1059 1089" fill="none" stroke="#000" stroke-width="2.4"/>
<rect x="864.6" y="1428" width="35" height="21" fill="#000"/>
<path d="M367.7 1167Q352 1190 346 1214L347.5 1281L390 1280.5L391.5 1213Q384 1190 367.7 1167Z" fill="#fff" stroke="#000" stroke-width="1.6"/>
<path d="M367.7 1173Q356 1192 351 1214L352.5 1275L385.5 1274.5L386.5 1213Q380 1192 367.7 1173" fill="none" stroke="#000" stroke-width="1.1"/>
<path d="M350 1212q8 -14 18 -13q10 -1 19 12" fill="none" stroke="#000" stroke-width="2.4"/>
<path d="M358 1204l10 -22M362 1203l9 -20M367 1202l8 -16M372 1202l6 -10" fill="none" stroke="#000" stroke-width="0.9"/>
<path d="M352 1222h34M352 1234h34M352 1247h34M352 1259h34" fill="none" stroke="#000" stroke-width="1.1"/>
<path d="M360 1232l6 -8M368 1232l6 -8M376 1232l6 -8M358 1257l5 -6M368 1257l5 -6M376 1257l5 -6" fill="none" stroke="#000" stroke-width="0.8"/>
<path d="M362 1268h16v3h-16Z" fill="#000"/>
<path d="M345 1224L322 1244M347 1226L324 1246" fill="none" stroke="#000" stroke-width="1.1"/>
<path d="M316 1247a4.5 4.5 0 1 0 9 0a4.5 4.5 0 1 0 -9 0M317 1244l7 7M324 1244l-7 7" fill="none" stroke="#000" stroke-width="1.1"/>
<path d="M374 1208L408 1232M373 1210L406 1234" fill="none" stroke="#000" stroke-width="1.4"/>
<path d="M407 1231l9 1l3 7l-8 2l-5 -5Z" fill="#fff" stroke="#000" stroke-width="1.4"/>
<path d="M507 1216Q493 1250 492.7 1290Q494 1330 507.8 1358Q530 1330 533.4 1290Q530 1245 507 1216Z" fill="#fff" stroke="#000" stroke-width="1.7"/>
<path d="M493 1294h40M494 1302h38M499 1338h20M502 1224q5 8 11 1" fill="none" stroke="#000" stroke-width="1.1"/>
<path d="M503 1222q4 -6 8 0q-4 4 -8 0Z" fill="#000"/>
<path d="M503 1350l4 8M508 1348l0 10M513 1348l-4 10" fill="none" stroke="#000" stroke-width="1.0"/>
<path d="M514.8 1267.6h1.5M502.5 1274.8h1.5M519 1303.8h1.5M508.7 1283.8h1.5M504.1 1326h1.5M501.8 1296.9h1.5M509.7 1283.3h1.5M518.3 1272.3h1.5M517.5 1301.9h1.5M509.8 1335h1.5M519.4 1308.2h1.5M509.1 1295.1h1.5M505.3 1332.6h1.5M505.7 1293h1.5M506.5 1330.8h1.5M514.6 1294.4h1.5M516.3 1278.1h1.5M511.7 1277h1.5M521.6 1294.6h1.5M507.4 1266.3h1.5M500 1299.9h1.5M513.2 1270.1h1.5M505.1 1324.2h1.5M511.2 1273.9h1.5M513.1 1270.8h1.5M522.8 1298.7h1.5" fill="none" stroke="#000" stroke-width="1.2"/>
<path d="M539.4 1234Q529.7 1225 522.8 1238Q506.7 1236.3 507.8 1251.4Q489.6 1251.3 489.7 1268Q473.6 1267.8 473.1 1284.5Q466.3 1299.2 473.5 1317L542 1231Z" fill="#fff" stroke="#000" stroke-width="1.5"/>
<path d="M522.8 1238Q522 1250 530 1248M507.8 1251.4Q508 1266 516 1264M489.7 1268Q490 1284 500 1284M473.1 1284.5Q476 1300 486 1302" fill="none" stroke="#000" stroke-width="1.3"/>
<path d="M542.5 1230L473.5 1319.5" fill="none" stroke="#000" stroke-width="2.8"/>
<path d="M473.5 1319.5l-1.5 4" fill="none" stroke="#000" stroke-width="1.5"/>
<path d="M277 1136l4 -3l4 5l-4 4ZM281 1142q-2 8 6 8q6 -2 8 4q0 6 8 6M283 1142q0 6 6 6q6 -2 8 4q2 6 8 4" fill="none" stroke="#000" stroke-width="1.2"/>
<path d="M276 1176q4 -3 3 4q-5 6 0 12q4 6 -1 12q-3 6 2 12q4 6 0 12q3 6 0 4M274 1178q-3 8 2 14q3 6 -2 12q-2 6 3 12" fill="none" stroke="#000" stroke-width="1.1"/>
<path d="M478 1130L479 1160L492 1146Q490 1134 478 1130Z" fill="#fff" stroke="#000" stroke-width="1.7"/>
<path d="M462 1152q4 -6 8 0q0 10 -4 12q-5 -4 -4 -12ZM494 1158l8 -12l4 2l-8 13Z" fill="#fff" stroke="#000" stroke-width="1.4"/>
<path d="M462 1168h8M464 1172h5M492 1170l8 -3M474 1124h8" fill="none" stroke="#000" stroke-width="1.0"/>
<path d="M475.9 1142.2h1.5M468.8 1147.7h1.5M477.7 1137.3h1.5M487 1152.8h1.5M477.6 1156.8h1.5M486.2 1146.8h1.5M486.4 1155.6h1.5M491.1 1152.9h1.5M480.8 1153.2h1.5M489.8 1153.5h1.5M486.2 1149.4h1.5M489.7 1155.9h1.5M474.7 1135.6h1.5M476.3 1135.1h1.5" fill="none" stroke="#000" stroke-width="1.0"/>
<path d="M1014 1128l8 -12l6 2l-4 12ZM1030 1138q6 -10 18 -8q-2 10 -12 12Z" fill="#fff" stroke="#000" stroke-width="1.5"/>
<path d="M1017 1126l6 -8l2 8Z" fill="#000"/>
<path d="M1010 1118l4 -6M1044 1124l6 -4M1028 1146l6 2M1048 1140l4 4" fill="none" stroke="#000" stroke-width="1.0"/>
<path d="M256.2 1071.9q8.3 -0.6 16.6 4.6t16.6 4.6M257.5 1111.7q8.6 -1.3 17.2 0.7t17.2 0.7M403.4 1082.5q5.3 -1.7 10.6 2t10.6 2M436.6 1188.6q7.3 -1.1 14.6 2.7t14.6 2.7M432.6 1208.5q9.6 -1.3 19.2 3.3t19.2 3.3M440.6 1252.3q7.6 1.3 15.3 -1.7t15.3 -1.7M524.1 1182q20.6 2 41.1 -1.6t41.1 -1.6M532.1 1204.6q10.9 -2 21.9 -0.9t21.9 -0.9M579.8 1216.5q7 -1.7 13.9 1.3t13.9 1.3M540 1269.5q7.3 -1.8 14.6 -0.3t14.6 -0.3M587.8 1251q9.3 2 18.6 -0.7t18.6 -0.7M594.4 1294.7q8.9 -2.7 17.8 0.7t17.8 0.7M260.2 1274.3q12.9 3.9 25.9 4.2t25.9 4.2M260.2 1308q11.3 -2.5 22.5 0.7t22.5 0.7M357 1310.7q11.9 4.1 23.9 3.1t23.9 3.1M554.6 1321.3q8.6 2.2 17.2 0.9t17.2 0.9M284.1 1351.8q6.6 2 13.3 -1.6t13.3 -1.6M382.2 1346.5q11.6 -1.1 23.2 3.3t23.2 3.3M595.7 1346.5q8.6 3.7 17.1 3.3t17.1 3.3M337.1 1373q5.3 3.6 10.6 2t10.6 2M465.8 1382.3q11.9 -0.3 23.9 3.3t23.9 3.3M383.5 1399q10.3 -2.8 20.6 -0.3t20.6 -0.3M558.6 1395.5q10.9 -1.2 21.9 1.7t21.9 1.7M249.6 1406.2q11.6 0.4 23.2 5.3t23.2 5.3M508.2 1412.8q12.9 4 25.9 3.3t25.9 3.3M517.5 1132.9q4.6 3.1 9.3 0.7t9.3 0.7M520.1 1138.2q3.6 2.1 7.3 0.4t7.3 0.4M583.8 1142.2q6.6 2.7 13.3 1.1t13.3 1.1M586.4 1147q4.6 3 9.3 0.3t9.3 0.3M289.4 1235.1q3.3 4 6.6 4t6.6 4M403.4 1074.6q4 -1.1 8 3.3t8 3.3M802.3 1156.8q12.3 2.3 24.5 1.3t24.5 1.3M823.5 1168.8q13.6 -1.3 27.2 1.3t27.2 1.3M957.5 1164.8q8.6 -2.1 17.2 0.7t17.2 0.7M1018.5 1183.3q10.3 -1.8 20.6 0.4t20.6 0.4M925.6 1199.3q11.6 -3.6 23.2 -3.7t23.2 -3.7M913.7 1240.4q8 -0.7 15.9 -6t15.9 -6M661.7 1274.9q15.3 1.6 30.5 -0.3t30.5 -0.3M610 1296.1q5.6 2.9 11.3 0t11.3 0M698.9 1296.1q7 -2.7 13.9 -1.1t13.9 -1.1M782.4 1313.3q5.6 -1.6 11.3 0.7t11.3 0.7M790.4 1321.3q3.3 -2.7 6.6 0t6.6 0M822.2 1314.6q5.3 -2.3 10.6 1.3t10.6 1.3M827.5 1322.6q4 3 8 0t8 0M830.2 1327.9q2.7 1.9 5.3 0.3t5.3 0.3M860.7 1316q6 -3.7 11.9 -2t11.9 -2M667 1319.9q12.6 -0.9 25.2 3.3t25.2 3.3M941.6 1334.5q4 2 8 -1.3t8 -1.3M972.1 1330.6q6.3 -5.2 12.6 -4.6t12.6 -4.6M1011.9 1341.2q9 -1.7 17.9 -7.3t17.9 -7.3M950.8 1286.8q3.6 0.5 7.3 -4.6t7.3 -4.6M1018.5 1289.4q7.3 -9.2 14.6 -12.6t14.6 -12.6M610 1347.8q10.3 -2.5 20.6 0.7t20.6 0.7M706.8 1362.4q9.6 -2.9 19.2 -0.9t19.2 -0.9M786.4 1366.4q4 2.6 8 0.7t8 0.7M936.3 1373q14.3 -2.8 28.5 -2t28.5 -2M641.8 1383.1q8.6 -1.8 17.2 0t17.2 0M994.6 1392.9q9.6 -3.3 19.2 -0.9t19.2 -0.9M693.6 1416.8q15.9 3.4 31.8 3.3t31.8 3.3M940.2 1427.4q16.6 -2.7 33.2 0t33.2 0M992 1219.2q1 1.3 2 8t2 8M999.9 1221.8q1.3 2 2.7 8t2.7 8M980 1249.7q-1.3 0.9 -2.7 6t-2.7 6M988 1252.3q-1.7 6.3 -3.3 7.3t-3.3 7.3M820.9 1369q2.3 3.9 4.6 4.6t4.6 4.6M827.5 1366.4q2 -0.4 4 4t4 4M851.4 1371.7q2.3 -0.6 4.6 3.3t4.6 3.3M850.1 1382.3q2.3 3.5 4.6 2.7t4.6 2.7M774.5 1127.6q5.3 3.2 10.6 0.9t10.6 0.9M830.2 1126.3q2.7 3.3 5.3 1.6t5.3 1.6M832.8 1131.1q1.7 -1.5 3.4 0.3t3.4 0.3M859.3 1129.5q2.7 -0.9 5.3 2.4t5.3 2.4M899.1 1135.6q2 -1.5 4 1.3t4 1.3M901.8 1140.1q1.2 -2.8 2.4 0.3t2.4 0.3M946.9 1136.9q3.3 2.3 6.6 1.3t6.6 1.3M952.2 1140.6q1.7 -2.4 3.3 0.3t3.3 0.3M826 1418.6q20 -1 30 6q6 5 10 6M241.6 1016.9q1.3 3.5 2.7 2.7t2.7 2.7M258.9 1024.8q2 0 4 5.3t4 5.3M261.5 1023.5q1.8 4.3 3.6 4.6t3.6 4.6M290.7 1044.7q3 3.5 6 2t6 2M292 1048.7q2.3 -1.8 4.6 1.3t4.6 1.3M257.5 1072.6q7.3 -0.1 14.6 4t14.6 4" fill="none" stroke="#000" stroke-width="1.25"/>
</svg>
<div id="wb"></div>
<div id="status"><span>Image: 1312, -416 | Zoom: 27%</span></div>
</div>
</body>
</html>
